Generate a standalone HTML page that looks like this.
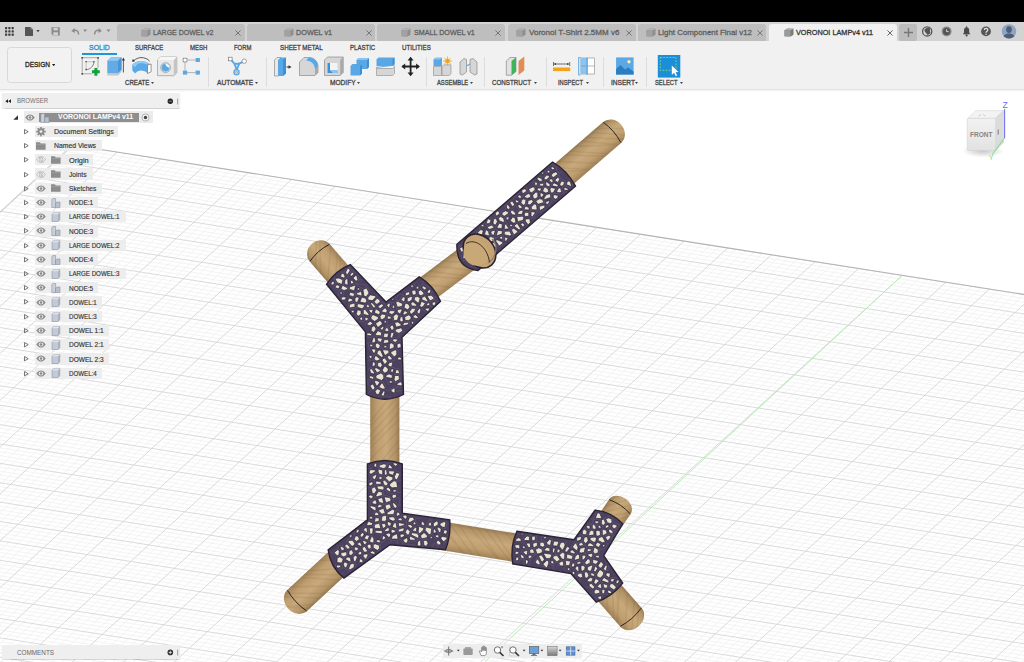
<!DOCTYPE html><html><head><meta charset="utf-8"><style>html,body{margin:0;padding:0;width:1024px;height:662px;overflow:hidden;background:#fff;font-family:"Liberation Sans", sans-serif;}.a{position:absolute}</style></head><body><svg class="a" style="left:0;top:0" width="1024" height="662" viewBox="0 0 1024 662"><defs><clipPath id="gclip"><path d="M72.1 145 L1024 294.4 L1024 662 L0 662 L0 212 Z"/></clipPath><linearGradient id="g_d_top" gradientUnits="userSpaceOnUse" x1="575.07" y1="182.70" x2="557.03" y2="161.80"><stop offset="0" stop-color="#a08158"/><stop offset="0.25" stop-color="#bf9f70"/><stop offset="0.55" stop-color="#c8a97b"/><stop offset="0.85" stop-color="#b49569"/><stop offset="1" stop-color="#977a52"/></linearGradient><linearGradient id="g_d_low" gradientUnits="userSpaceOnUse" x1="456.51" y1="283.37" x2="440.49" y2="262.13"><stop offset="0" stop-color="#a08158"/><stop offset="0.25" stop-color="#bf9f70"/><stop offset="0.55" stop-color="#c8a97b"/><stop offset="0.85" stop-color="#b49569"/><stop offset="1" stop-color="#977a52"/></linearGradient><linearGradient id="g_d_ul" gradientUnits="userSpaceOnUse" x1="342.36" y1="258.72" x2="322.34" y2="276.08"><stop offset="0" stop-color="#a08158"/><stop offset="0.25" stop-color="#bf9f70"/><stop offset="0.55" stop-color="#c8a97b"/><stop offset="0.85" stop-color="#b49569"/><stop offset="1" stop-color="#977a52"/></linearGradient><linearGradient id="g_d_vert" gradientUnits="userSpaceOnUse" x1="370.20" y1="430.00" x2="399.40" y2="430.00"><stop offset="0" stop-color="#a08158"/><stop offset="0.25" stop-color="#bf9f70"/><stop offset="0.55" stop-color="#c8a97b"/><stop offset="0.85" stop-color="#b49569"/><stop offset="1" stop-color="#977a52"/></linearGradient><linearGradient id="g_d_left" gradientUnits="userSpaceOnUse" x1="311.20" y1="567.75" x2="330.80" y2="588.85"><stop offset="0" stop-color="#a08158"/><stop offset="0.25" stop-color="#bf9f70"/><stop offset="0.55" stop-color="#c8a97b"/><stop offset="0.85" stop-color="#b49569"/><stop offset="1" stop-color="#977a52"/></linearGradient><linearGradient id="g_d_mid" gradientUnits="userSpaceOnUse" x1="477.71" y1="556.11" x2="482.29" y2="527.89"><stop offset="0" stop-color="#a08158"/><stop offset="0.25" stop-color="#bf9f70"/><stop offset="0.55" stop-color="#c8a97b"/><stop offset="0.85" stop-color="#b49569"/><stop offset="1" stop-color="#977a52"/></linearGradient><linearGradient id="g_d_ur" gradientUnits="userSpaceOnUse" x1="623.71" y1="524.20" x2="602.19" y2="509.60"><stop offset="0" stop-color="#a08158"/><stop offset="0.25" stop-color="#bf9f70"/><stop offset="0.55" stop-color="#c8a97b"/><stop offset="0.85" stop-color="#b49569"/><stop offset="1" stop-color="#977a52"/></linearGradient><linearGradient id="g_d_lr" gradientUnits="userSpaceOnUse" x1="604.71" y1="608.95" x2="626.09" y2="590.25"><stop offset="0" stop-color="#a08158"/><stop offset="0.25" stop-color="#bf9f70"/><stop offset="0.55" stop-color="#c8a97b"/><stop offset="0.85" stop-color="#b49569"/><stop offset="1" stop-color="#977a52"/></linearGradient><clipPath id="c_tube"><path d="M552.5 162.0 Q567 170 575.5 186.2 L499.4 251.5 L478.0 270.5 Q456 268 456.9 244.3 Z"/></clipPath><clipPath id="c_y"><path d="M326.5 284.3 Q336 270 350.3 264.6 L386.0 302.0 L419.3 276.9 Q433 285 440.5 301.3 L402.0 337.2 L403.5 394.5 Q385 404 366.4 394.5 L365.4 331.9 Z"/></clipPath><clipPath id="c_l"><path d="M367.4 464.0 Q385 457 402.3 464.0 L402.3 513.2 L449.7 519.8 Q451 536 445.5 549.7 L389.9 544.7 L344.0 578.1 Q330 567 328.2 549.9 L367.4 519.8 Z"/></clipPath><clipPath id="c_r"><path d="M516.9 531.3 L574.0 539.7 L595.2 510.1 Q612 512 622.7 523.8 L603.7 555.6 L622.7 583.1 Q612 597 596.3 602.1 L570.9 573.6 L512.7 564.0 Q510 546 516.9 531.3 Z"/></clipPath><radialGradient id="cg" cx="0.5" cy="0.5" r="0.7"><stop offset="0" stop-color="#4a4258"/><stop offset="1" stop-color="#352e40"/></radialGradient><clipPath id="cl_d_top"><path d="M529.02 222.45L621.12 142.95A12.00 13.80 -40.80 0 0 603.08 122.05L510.98 201.55Z"/></clipPath><clipPath id="cl_d_low"><path d="M423.01 308.62L490.01 258.12L473.99 236.88L406.99 287.38Z"/></clipPath><clipPath id="cl_d_ul"><path d="M355.01 273.32L329.71 244.12A12.00 13.25 -130.91 0 0 309.69 261.48L334.99 290.68Z"/></clipPath><clipPath id="cl_d_vert"><path d="M370.20 392.00L370.20 468.00L399.40 468.00L399.40 392.00Z"/></clipPath><clipPath id="cl_d_left"><path d="M335.20 545.45L287.20 590.05A12.00 14.40 137.10 0 0 306.80 611.15L354.80 566.55Z"/></clipPath><clipPath id="cl_d_mid"><path d="M437.71 549.61L517.71 562.61L522.29 534.39L442.29 521.39Z"/></clipPath><clipPath id="cl_d_ur"><path d="M616.86 534.30L630.56 514.10A10.00 13.00 -55.85 0 0 609.04 499.50L595.34 519.70Z"/></clipPath><clipPath id="cl_d_lr"><path d="M589.31 591.35L620.11 626.55A12.00 14.20 48.81 0 0 641.49 607.85L610.69 572.65Z"/></clipPath></defs><rect x="0" y="0" width="1024" height="662" fill="#ffffff"/><g clip-path="url(#gclip)"><path d="M82.40 146.41L-476.49 659.76M91.12 147.78L-467.78 661.13M99.84 149.15L-459.07 662.50M108.57 150.52L-450.35 663.87M126.01 153.27L-432.93 666.61M134.74 154.64L-424.21 667.98M143.46 156.01L-415.50 669.35M152.18 157.39L-406.79 670.72M169.63 160.13L-389.36 673.46M178.35 161.50L-380.65 674.83M187.07 162.87L-371.93 676.20M195.79 164.25L-363.22 677.57M213.24 166.99L-345.79 680.31M221.96 168.36L-337.08 681.68M230.68 169.73L-328.37 683.05M239.41 171.11L-319.66 684.42M256.85 173.85L-302.23 687.16M265.57 175.22L-293.52 688.53M274.30 176.60L-284.80 689.90M283.02 177.97L-276.09 691.26M300.46 180.71L-258.67 694.00M309.19 182.08L-249.95 695.37M317.91 183.46L-241.24 696.74M326.63 184.83L-232.53 698.11M344.08 187.57L-215.10 700.85M352.80 188.94L-206.39 702.22M361.52 190.32L-197.68 703.59M370.24 191.69L-188.97 704.96M387.69 194.43L-171.54 707.70M396.41 195.80L-162.83 709.07M405.13 197.18L-154.11 710.44M413.85 198.55L-145.40 711.81M431.30 201.29L-127.98 714.55M440.02 202.66L-119.27 715.92M448.74 204.04L-110.55 717.29M457.46 205.41L-101.84 718.66M474.91 208.15L-84.42 721.40M483.63 209.53L-75.70 722.77M492.35 210.90L-66.99 724.14M501.07 212.27L-58.28 725.51M518.52 215.01L-40.85 728.25M527.24 216.39L-32.14 729.62M535.96 217.76L-23.43 730.99M544.68 219.13L-14.72 732.36M562.12 221.87L2.71 735.10M570.85 223.25L11.42 736.47M579.57 224.62L20.13 737.84M588.29 225.99L28.84 739.21M605.73 228.73L46.27 741.95M614.45 230.11L54.98 743.32M623.18 231.48L63.69 744.69M631.90 232.85L72.40 746.06M649.34 235.59L89.83 748.79M658.06 236.96L98.54 750.16M666.78 238.34L107.25 751.53M675.50 239.71L115.96 752.90M692.95 242.45L133.38 755.64M701.67 243.82L142.10 757.01M710.39 245.20L150.81 758.38M719.11 246.57L159.52 759.75M736.55 249.31L176.94 762.49M745.28 250.68L185.65 763.86M754.00 252.06L194.37 765.23M762.72 253.43L203.08 766.60M780.16 256.17L220.50 769.34M788.88 257.54L229.21 770.71M797.60 258.92L237.92 772.08M806.32 260.29L246.64 773.45M823.77 263.03L264.06 776.19M832.49 264.40L272.77 777.56M841.21 265.78L281.48 778.93M849.93 267.15L290.19 780.30M867.37 269.89L307.62 783.04M876.09 271.26L316.33 784.41M884.81 272.63L325.04 785.77M893.53 274.01L333.75 787.14M910.97 276.75L351.17 789.88M919.70 278.12L359.88 791.25M928.42 279.49L368.59 792.62M937.14 280.87L377.30 793.99M954.58 283.61L394.73 796.73M963.30 284.98L403.44 798.10M972.02 286.35L412.15 799.47M980.74 287.72L420.86 800.84M998.18 290.47L438.28 803.58M1006.90 291.84L446.99 804.95M1015.62 293.21L455.70 806.32M1024.34 294.58L464.41 807.69M1041.78 297.33L481.84 810.43M1050.50 298.70L490.55 811.80M1059.23 300.07L499.26 813.17M1067.95 301.44L507.97 814.54M1085.39 304.19L525.39 817.27M1094.11 305.56L534.10 818.64M1102.83 306.93L542.81 820.01M1111.55 308.30L551.52 821.38M1128.99 311.05L568.94 824.12M1137.71 312.42L577.65 825.49M1146.43 313.79L586.37 826.86M1155.15 315.16L595.08 828.23M1172.59 317.90L612.50 830.97M1181.31 319.28L621.21 832.34M1190.03 320.65L629.92 833.71M1198.75 322.02L638.63 835.08M1216.19 324.76L656.05 837.82M1224.91 326.13L664.76 839.19M1233.63 327.51L673.47 840.56M1242.35 328.88L682.18 841.92M1259.79 331.62L699.60 844.66M1268.51 332.99L708.31 846.03M1277.23 334.36L717.02 847.40M1285.95 335.74L725.73 848.77M1303.39 338.48L743.15 851.51M1312.11 339.85L751.86 852.88M1320.83 341.22L760.57 854.25M1329.55 342.60L769.28 855.62M1346.99 345.34L786.70 858.36M1355.71 346.71L795.41 859.73M1364.43 348.08L804.12 861.10M1373.15 349.45L812.83 862.47M1390.59 352.20L830.25 865.20M1399.30 353.57L838.96 866.57M1408.02 354.94L847.67 867.94M1416.74 356.31L856.38 869.31M1434.18 359.06L873.80 872.05M1442.90 360.43L882.51 873.42M1451.62 361.80L891.22 874.79M1460.34 363.17L899.93 876.16M1477.78 365.91L917.35 878.90M1486.50 367.28L926.06 880.27M1495.22 368.66L934.77 881.64M1503.94 370.03L943.48 883.01M1521.38 372.77L960.90 885.75M1530.10 374.14L969.61 887.11M1538.82 375.51L978.32 888.48M1547.53 376.89L987.03 889.85M1564.97 379.63L1004.45 892.59M1573.69 381.00L1013.16 893.96M1582.41 382.37L1021.87 895.33M1591.13 383.74L1030.58 896.70M70.07 148.35L1596.23 388.43M66.46 151.67L1592.61 391.74M62.85 154.98L1588.99 395.06M59.24 158.30L1585.37 398.37M52.02 164.93L1578.12 404.99M48.41 168.25L1574.50 408.31M44.80 171.56L1570.88 411.62M41.19 174.88L1567.26 414.93M33.97 181.51L1560.02 421.56M30.36 184.82L1556.40 424.87M26.75 188.14L1552.78 428.18M23.14 191.45L1549.16 431.50M15.92 198.08L1541.92 438.12M12.31 201.40L1538.30 441.43M8.70 204.71L1534.68 444.75M5.10 208.03L1531.06 448.06M-2.12 214.66L1523.82 454.68M-5.73 217.97L1520.20 458.00M-9.34 221.29L1516.58 461.31M-12.95 224.60L1512.97 464.62M-20.17 231.23L1505.73 471.24M-23.77 234.55L1502.11 474.56M-27.38 237.86L1498.49 477.87M-30.99 241.18L1494.87 481.18M-38.21 247.80L1487.63 487.80M-41.82 251.12L1484.01 491.12M-45.42 254.43L1480.39 494.43M-49.03 257.75L1476.77 497.74M-56.25 264.37L1469.54 504.36M-59.86 267.69L1465.92 507.67M-63.46 271.00L1462.30 510.98M-67.07 274.32L1458.68 514.30M-74.29 280.94L1451.44 520.92M-77.89 284.26L1447.82 524.23M-81.50 287.57L1444.20 527.54M-85.11 290.89L1440.59 530.85M-92.32 297.51L1433.35 537.47M-95.93 300.83L1429.73 540.78M-99.54 304.14L1426.11 544.10M-103.15 307.45L1422.49 547.41M-110.36 314.08L1415.26 554.03M-113.97 317.39L1411.64 557.34M-117.58 320.71L1408.02 560.65M-121.18 324.02L1404.41 563.96M-128.40 330.65L1397.17 570.58M-132.00 333.96L1393.55 573.89M-135.61 337.27L1389.93 577.20M-139.22 340.58L1386.32 580.51M-146.43 347.21L1379.08 587.13M-150.04 350.52L1375.46 590.44M-153.64 353.84L1371.85 593.75M-157.25 357.15L1368.23 597.06M-164.46 363.77L1361.00 603.68M-168.07 367.09L1357.38 606.99M-171.67 370.40L1353.76 610.30M-175.28 373.71L1350.14 613.61M-182.49 380.34L1342.91 620.23M-186.10 383.65L1339.29 623.54M-189.70 386.96L1335.68 626.85M-193.31 390.27L1332.06 630.16M-200.52 396.90L1324.83 636.78M-204.13 400.21L1321.21 640.09M-207.73 403.52L1317.59 643.40M-211.34 406.83L1313.98 646.71M-218.55 413.46L1306.74 653.33M-222.16 416.77L1303.13 656.64M-225.76 420.08L1299.51 659.95M-229.37 423.39L1295.89 663.25M-236.58 430.01L1288.66 669.87M-240.18 433.33L1285.05 673.18M-243.79 436.64L1281.43 676.49M-247.39 439.95L1277.81 679.80M-254.60 446.57L1270.58 686.42M-258.21 449.88L1266.97 689.72M-261.81 453.19L1263.35 693.03M-265.42 456.50L1259.74 696.34M-272.63 463.13L1252.50 702.96M-276.23 466.44L1248.89 706.27M-279.84 469.75L1245.27 709.58M-283.44 473.06L1241.66 712.88M-290.65 479.68L1234.43 719.50M-294.25 482.99L1230.81 722.81M-297.86 486.30L1227.20 726.12M-301.46 489.61L1223.58 729.42M-308.67 496.23L1216.35 736.04M-312.27 499.54L1212.74 739.35M-315.88 502.85L1209.12 742.66M-319.48 506.17L1205.51 745.96M-326.69 512.79L1198.28 752.58M-330.29 516.10L1194.66 755.89M-333.90 519.41L1191.05 759.20M-337.50 522.72L1187.43 762.50M-344.71 529.34L1180.21 769.12M-348.31 532.65L1176.59 772.43M-351.92 535.96L1172.98 775.73M-355.52 539.27L1169.36 779.04M-362.73 545.89L1162.13 785.65M-366.33 549.20L1158.52 788.96M-369.93 552.51L1154.91 792.27M-373.53 555.81L1151.29 795.58M-380.74 562.43L1144.06 802.19M-384.34 565.74L1140.45 805.50M-387.95 569.05L1136.84 808.80M-391.55 572.36L1133.22 812.11M-398.76 578.98L1126.00 818.72M-402.36 582.29L1122.38 822.03M-405.96 585.60L1118.77 825.34M-409.56 588.91L1115.16 828.64M-416.77 595.53L1107.93 835.26M-420.37 598.84L1104.32 838.56M-423.97 602.14L1100.70 841.87M-427.58 605.45L1097.09 845.18M-434.78 612.07L1089.86 851.79M-438.38 615.38L1086.25 855.09M-441.98 618.69L1082.64 858.40M-445.59 622.00L1079.02 861.71M-452.79 628.61L1071.80 868.32M-456.39 631.92L1068.19 871.62M-459.99 635.23L1064.57 874.93M-463.60 638.54L1060.96 878.24M-470.80 645.16L1053.74 884.85M-474.40 648.46L1050.12 888.15M-478.00 651.77L1046.51 891.46M-481.60 655.08L1042.90 894.76" stroke="#f0f0f0" stroke-width="0.8" fill="none"/><path d="M73.67 145.04L-485.20 658.39M117.29 151.90L-441.64 665.24M160.90 158.76L-398.07 672.09M204.52 165.62L-354.51 678.94M248.13 172.48L-310.94 685.79M291.74 179.34L-267.38 692.63M335.35 186.20L-223.82 699.48M378.96 193.06L-180.25 706.33M422.57 199.92L-136.69 713.18M466.18 206.78L-93.13 720.03M509.79 213.64L-49.57 726.88M553.40 220.50L-6.01 733.73M597.01 227.36L37.55 740.58M640.62 234.22L81.11 747.42M684.23 241.08L124.67 754.27M727.83 247.94L168.23 761.12M771.44 254.80L211.79 767.97M815.04 261.66L255.35 774.82M858.65 268.52L298.90 781.67M902.25 275.38L342.46 788.51M945.86 282.24L386.02 795.36M989.46 289.10L429.57 802.21M1033.06 295.96L473.13 809.06M1076.67 302.81L516.68 815.90M1120.27 309.67L560.23 822.75M1163.87 316.53L603.79 829.60M1207.47 323.39L647.34 836.45M1251.07 330.25L690.89 843.29M1294.67 337.11L734.44 850.14M1338.27 343.97L777.99 856.99M1381.87 350.83L821.54 863.84M1425.46 357.68L865.09 870.68M1469.06 364.54L908.64 877.53M1512.66 371.40L952.19 884.38M1556.25 378.26L995.74 891.22M1599.85 385.12L1039.29 898.07M73.67 145.04L1599.85 385.12M55.63 161.61L1581.75 401.68M37.58 178.19L1563.64 418.25M19.53 194.77L1545.54 434.81M1.49 211.34L1527.44 451.37M-16.56 227.92L1509.35 467.93M-34.60 244.49L1491.25 484.49M-52.64 261.06L1473.15 501.05M-70.68 277.63L1455.06 517.61M-88.72 294.20L1436.97 534.16M-106.75 310.77L1418.88 550.72M-124.79 327.33L1400.79 567.27M-142.82 343.90L1382.70 583.82M-160.86 360.46L1364.61 600.37M-178.89 377.02L1346.53 616.92M-196.92 393.58L1328.44 633.47M-214.94 410.14L1310.36 650.02M-232.97 426.70L1292.28 666.56M-251.00 443.26L1274.20 683.11M-269.02 459.82L1256.12 699.65M-287.04 476.37L1238.04 716.19M-305.07 492.92L1219.97 732.73M-323.09 509.48L1201.89 749.27M-341.10 526.03L1183.82 765.81M-359.12 542.58L1165.75 782.35M-377.14 559.12L1147.68 798.88M-395.15 575.67L1129.61 815.42M-413.17 592.22L1111.54 831.95M-431.18 608.76L1093.48 848.48M-449.19 625.31L1075.41 865.01M-467.20 641.85L1057.35 881.54M-485.20 658.39L1039.29 898.07" stroke="#d6d6d6" stroke-width="0.9" fill="none"/><path d="M901.6 275.9 L484.6 662" stroke="#b8ecb8" stroke-width="1" fill="none"/></g><path d="M72.1 145 L1024 294.4" stroke="#b4b4b4" stroke-width="1.1" fill="none"/><path d="M72.1 145 L0 212" stroke="#c8c8c8" stroke-width="1" fill="none"/><path d="M529.02 222.45L621.12 142.95A12.00 13.80 -40.80 0 0 603.08 122.05L510.98 201.55Z" fill="url(#g_d_top)"/><g clip-path="url(#cl_d_top)"><path d="M501.6 206.0L553.0 208.8M507.0 201.3L555.5 203.8M510.9 198.0L561.2 199.8M519.0 191.0L563.9 195.3M525.4 185.5L576.7 190.4M532.7 179.1L584.1 183.1M540.9 172.1L590.7 170.3M546.4 167.3L598.1 169.8M553.4 161.3L606.3 163.8M561.4 154.4L609.0 156.4M565.4 150.9L615.9 154.2M570.6 146.4L623.5 144.5M577.2 140.8L627.1 145.5M581.2 137.3L631.1 139.6M587.2 132.1L638.7 135.9M591.5 128.4L644.5 128.4M599.5 121.5L650.1 122.1M605.1 116.7L657.2 115.8" stroke="#7a5d38" stroke-opacity="0.14" stroke-width="1.5" fill="none"/></g><path d="M603.35 122.37Q614.52 130.41 620.85 142.63" fill="none" stroke="#2e251c" stroke-width="1"/><path d="M423.01 308.62L490.01 258.12L473.99 236.88L406.99 287.38Z" fill="url(#g_d_low)"/><g clip-path="url(#cl_d_low)"><path d="M397.4 291.3L441.1 297.9M406.0 284.8L448.8 286.4M410.2 281.6L453.5 288.3M418.5 275.4L467.7 279.0M425.1 270.4L474.0 277.0M431.7 265.4L479.6 271.4M437.6 261.0L482.9 263.3M446.2 254.5L492.5 260.0M452.2 250.0L497.7 251.9M457.1 246.2L506.8 251.0M464.1 241.0L513.8 247.4M469.4 237.0L515.3 243.6M474.6 233.1L525.1 237.4" stroke="#7a5d38" stroke-opacity="0.14" stroke-width="1.5" fill="none"/></g><path d="M355.01 273.32L329.71 244.12A12.00 13.25 -130.91 0 0 309.69 261.48L334.99 290.68Z" fill="url(#g_d_ul)"/><g clip-path="url(#cl_d_ul)"><path d="M339.5 300.0L340.3 250.3M334.0 293.6L338.3 244.3M327.1 285.6L331.5 239.6M320.8 278.3L319.6 231.4M315.4 272.1L316.6 226.4M308.2 263.8L308.1 219.1M303.5 258.4L306.3 209.0" stroke="#7a5d38" stroke-opacity="0.14" stroke-width="1.5" fill="none"/></g><path d="M309.99 261.22Q317.60 250.38 329.41 244.38" fill="none" stroke="#2e251c" stroke-width="1"/><path d="M370.20 392.00L370.20 468.00L399.40 468.00L399.40 392.00Z" fill="url(#g_d_vert)"/><g clip-path="url(#cl_d_vert)"><path d="M402.3 382.0L367.3 425.1M402.3 392.7L367.3 429.3M402.3 399.4L367.3 438.3M402.3 408.7L367.3 445.5M402.3 416.3L367.3 450.6M402.3 427.2L367.3 462.0M402.3 435.9L367.3 478.2M402.3 445.1L367.3 480.0M402.3 455.5L367.3 496.6M402.3 462.9L367.3 498.0M402.3 469.1L367.3 507.5M402.3 474.5L367.3 514.9" stroke="#7a5d38" stroke-opacity="0.14" stroke-width="1.5" fill="none"/></g><path d="M335.20 545.45L287.20 590.05A12.00 14.40 137.10 0 0 306.80 611.15L354.80 566.55Z" fill="url(#g_d_left)"/><g clip-path="url(#cl_d_left)"><path d="M364.1 561.9L314.8 560.1M358.2 567.3L305.9 571.1M350.2 574.7L299.2 574.4M343.9 580.6L296.7 577.0M338.0 586.1L284.2 587.0M330.0 593.5L276.9 593.3M324.8 598.4L277.3 596.4M318.4 604.3L264.9 608.0M314.2 608.2L265.7 606.8M306.3 615.6L254.0 616.0M301.7 619.8L251.0 620.2" stroke="#7a5d38" stroke-opacity="0.14" stroke-width="1.5" fill="none"/></g><path d="M306.51 610.83Q294.66 602.78 287.49 590.37" fill="none" stroke="#2e251c" stroke-width="1"/><path d="M437.71 549.61L517.71 562.61L522.29 534.39L442.29 521.39Z" fill="url(#g_d_mid)"/><g clip-path="url(#cl_d_mid)"><path d="M432.9 517.0L466.5 556.1M439.5 518.0L465.7 558.4M446.6 519.2L475.9 559.8M456.3 520.8L483.0 560.3M465.4 522.2L500.1 561.2M475.0 523.8L501.8 563.4M482.1 525.0L512.7 565.0M490.8 526.4L517.8 566.5M501.6 528.1L536.9 568.2M510.3 529.5L541.6 568.8M519.7 531.1L553.0 571.1M527.1 532.3L557.2 572.8" stroke="#7a5d38" stroke-opacity="0.14" stroke-width="1.5" fill="none"/></g><path d="M616.86 534.30L630.56 514.10A10.00 13.00 -55.85 0 0 609.04 499.50L595.34 519.70Z" fill="url(#g_d_ur)"/><g clip-path="url(#cl_d_ur)"><path d="M587.6 526.5L631.1 516.3M592.7 518.9L638.7 510.9M595.7 514.6L638.0 503.2M600.2 507.8L646.1 494.3M605.2 500.6L648.2 486.0M611.2 491.7L657.3 478.7" stroke="#7a5d38" stroke-opacity="0.14" stroke-width="1.5" fill="none"/></g><path d="M609.36 499.72Q621.60 504.15 630.24 513.88" fill="none" stroke="#2e251c" stroke-width="1"/><path d="M589.31 591.35L620.11 626.55A12.00 14.20 48.81 0 0 641.49 607.85L610.69 572.65Z" fill="url(#g_d_lr)"/><g clip-path="url(#cl_d_lr)"><path d="M606.2 563.3L607.8 617.2M612.1 570.0L613.7 622.4M616.8 575.3L618.1 623.6M621.0 580.1L616.0 627.7M627.7 587.8L624.6 641.9M634.9 596.1L630.2 647.0M638.5 600.1L636.4 649.4M644.1 606.5L641.0 658.9" stroke="#7a5d38" stroke-opacity="0.14" stroke-width="1.5" fill="none"/></g><path d="M641.17 608.13Q632.91 619.61 620.43 626.27" fill="none" stroke="#2e251c" stroke-width="1"/><path d="M552.5 162.0 Q567 170 575.5 186.2 L499.4 251.5 L478.0 270.5 Q456 268 456.9 244.3 Z" fill="#4c4260" stroke="#2b2433" stroke-width="1.4"/><path d="M516.9 222.3L517.8 222.6M517.8 222.6L523.6 221.1M523.0 215.2L516.7 215.7M523.0 215.2L524.9 217.8M515.8 216.8L516.7 215.7M524.1 211.1L529.9 211.4M529.9 217.3L529.9 211.4M538.2 211.0L537.7 205.3M530.2 206.6L530.7 210.6M530.2 206.6L535.0 201.9M535.0 201.9L537.7 205.3M537.8 211.1L530.7 210.6M527.1 225.7L523.6 221.1M540.4 212.2L538.2 211.0M540.8 213.4L540.7 214.1M537.8 211.1L533.5 217.2M535.9 218.2L533.5 217.2M529.9 211.4L530.7 210.6M533.5 217.2L531.0 218.1M523.0 209.1L523.4 206.4M523.4 206.4L520.0 203.3M519.1 209.8L515.8 205.3M524.1 211.1L523.0 209.1M516.8 212.5L519.1 209.8M526.2 204.8L523.4 206.4M512.4 208.2L516.8 212.5M512.4 208.2L515.8 205.3M508.8 201.6L512.7 199.7M512.2 208.2L512.4 208.2M488.8 258.9L488.5 258.9M488.5 258.9L487.8 257.2M494.0 254.2L492.8 253.1M459.2 253.6L459.2 253.6M461.4 259.5L462.0 253.7M459.2 253.6L459.2 253.6M546.5 209.1L545.9 208.7M545.9 208.7L540.4 212.2M540.8 213.4L541.2 213.6M556.9 166.5L556.4 167.2M556.4 167.2L552.5 165.0M503.7 235.6L503.5 241.1M503.2 234.6L495.3 237.7M503.2 234.6L503.5 230.4M496.9 229.2L494.7 236.8M495.3 237.7L494.7 236.8M503.5 230.4L502.9 229.8M495.3 238.0L494.6 241.2M489.2 243.7L487.7 241.8M487.7 241.8L488.3 236.8M494.7 236.8L490.6 235.6M488.3 236.8L490.6 235.6M496.9 229.2L496.2 228.5M490.6 235.6L489.3 230.6M496.2 228.5L489.3 230.6M468.3 236.5L470.6 235.9M494.4 248.7L492.5 252.0M492.5 252.0L488.7 250.8M488.7 250.8L488.2 246.2M494.6 241.2L498.4 246.9M484.4 254.3L488.7 250.8M492.8 253.1L492.5 252.0M458.4 246.9L463.4 244.6M463.3 241.7L463.4 241.9M463.4 244.6L463.4 241.9M462.5 261.1L469.5 257.2M464.6 252.7L465.6 247.6M484.4 254.3L484.2 254.3M484.2 254.3L479.7 258.5M483.7 263.4L479.7 258.5M476.1 268.7L474.2 264.3M481.0 265.8L474.6 263.3M474.2 264.3L474.6 263.3M479.7 258.5L475.9 258.8M521.4 228.4L519.7 231.4M519.7 231.4L519.7 231.9M519.7 231.9L519.8 232.0M505.7 244.1L504.8 243.2M504.4 243.2L499.5 247.3M499.5 247.3L500.1 248.9M498.4 246.9L499.5 247.3M556.4 167.2L556.5 170.2M559.2 173.2L556.5 170.2M559.2 173.2L562.8 171.7M562.8 171.7L562.8 171.5M566.0 181.3L560.9 179.5M560.9 179.5L559.1 174.9M568.7 178.4L568.7 179.3M559.2 173.2L559.2 174.4M558.5 184.2L560.9 179.5M566.0 181.3L564.9 185.3M564.9 185.3L561.8 187.6M537.7 205.3L544.3 203.4M513.0 199.1L514.9 197.7M514.9 197.7L515.9 195.5M516.4 195.0L520.1 192.7M528.6 192.0L522.8 195.8M527.0 199.6L523.3 197.8M523.3 197.8L522.8 195.8M534.9 200.6L531.8 198.2M534.9 200.6L539.1 197.7M539.1 197.7L539.0 192.5M536.1 190.3L531.5 194.3M526.2 204.8L527.0 199.6M506.4 203.7L504.9 205.4M504.9 205.4L504.5 205.3M505.8 221.6L510.8 229.3M514.0 224.6L513.3 226.7M513.3 226.7L510.8 229.3M516.9 222.3L514.0 224.6M515.8 216.8L511.9 216.0M510.3 230.1L503.5 230.4M510.3 230.1L510.8 229.3M503.7 223.6L505.7 221.6M505.7 221.6L505.8 221.6M495.7 227.1L491.8 223.8M495.7 227.1L498.7 221.8M497.0 217.7L494.6 217.5M491.8 223.8L486.7 225.9M489.9 217.8L492.6 218.6M484.8 222.3L484.7 222.5M486.7 225.9L484.7 222.5M484.2 254.3L482.9 252.1M472.0 265.5L470.8 267.3M474.2 264.3L472.0 265.5M469.8 257.4L469.5 257.2M512.9 235.4L514.1 236.0M510.3 230.1L512.9 235.4M568.7 179.3L570.3 180.4M570.9 188.0L564.9 185.3M572.9 186.3L572.0 183.2M566.3 192.1L562.9 192.1M563.4 194.6L562.6 192.7M562.6 192.7L562.9 192.1M561.8 187.6L562.9 192.1M572.9 186.3L573.0 186.4M559.4 186.4L557.2 187.7M557.2 187.7L554.3 193.2M554.3 193.2L560.2 194.0M542.5 198.4L544.4 200.7M551.8 198.1L551.4 194.3M549.6 192.6L551.4 194.3M539.0 192.5L541.4 191.8M544.3 203.4L544.4 200.7M527.4 188.4L525.4 187.3M527.4 188.4L528.6 192.0M504.3 217.5L509.7 213.9M504.3 217.5L500.8 215.2M500.8 215.2L501.2 212.0M501.2 212.0L505.5 209.6M505.7 221.6L504.3 217.5M497.0 217.7L500.8 215.2M499.1 210.0L501.2 212.0M493.9 214.4L494.6 217.5M504.9 205.4L505.5 209.6M512.2 208.2L509.0 211.0M479.4 226.9L480.1 228.5M480.1 228.5L476.6 231.8M475.2 230.5L476.6 231.8M470.6 235.9L470.9 236.1M476.6 233.5L476.6 231.8M465.6 247.6L468.5 247.1M468.5 247.1L473.4 249.2M463.4 241.9L471.6 241.2M468.5 247.1L471.6 241.2M473.4 249.2L474.7 249.0M470.9 236.1L472.2 240.9M471.6 241.2L472.2 240.9M555.4 201.0L552.7 199.5M555.4 201.0L555.5 201.4M552.7 199.5L549.1 205.1M550.2 205.9L549.1 205.1M554.3 193.2L551.4 194.3M556.5 200.5L555.4 201.0M551.8 198.1L552.7 199.5M546.4 206.1L549.1 205.1M552.5 165.0L550.5 165.7M552.4 171.6L547.9 167.9M476.7 245.5L475.7 242.4M476.7 245.5L481.6 246.3M481.6 246.3L483.5 241.3M483.5 241.3L480.8 237.2M474.7 249.0L476.7 245.5M476.6 233.5L480.3 237.2M483.3 235.4L480.8 237.2M541.4 191.8L543.5 186.8M549.6 192.6L548.9 188.5M544.9 186.0L548.9 188.5M550.9 186.5L548.9 188.5M533.1 183.0L534.0 179.9M539.4 182.9L537.7 186.9M533.4 185.5L535.9 187.8M543.5 186.8L537.7 186.9M544.2 182.0L544.9 186.0M538.7 175.8L542.6 177.5M544.2 182.0L544.4 181.2M545.3 170.2L546.5 173.9M542.6 177.5L546.5 173.9M550.8 177.5L547.2 180.5M550.8 177.5L553.8 179.1M553.8 179.1L554.1 181.8M554.1 181.8L551.9 184.0M559.1 174.9L553.8 179.1M550.9 186.5L551.9 184.0" stroke="#5d5170" stroke-width="0.9" fill="none"/><path d="M551.3 167.2L551.1 167.5L551.0 167.9L551.1 168.4L551.4 168.7L552.3 169.4L552.6 169.6L552.9 169.7L553.2 169.6L553.7 169.4L554.0 169.3L554.3 169.0L554.4 168.6L554.4 168.2L554.2 167.9L553.9 167.6L552.7 167.0L552.3 166.8L551.9 166.9L551.7 167.0ZM541.5 173.3L541.7 173.7L542.0 174.0L542.4 174.1L542.8 174.1L543.1 173.8L543.4 173.6L543.6 173.3L543.7 173.0L543.6 172.6L543.5 172.2L543.3 171.9L543.1 171.7L541.5 173.1ZM548.5 170.4L548.2 170.3L547.8 170.4L547.5 170.6L547.3 170.9L547.2 171.3L547.3 171.7L547.5 172.2L547.6 172.5L547.9 172.7L548.2 172.8L548.6 172.9L549.0 173.0L549.4 172.8L549.7 172.6L549.7 172.5L549.9 172.2L549.9 171.8L549.8 171.4L549.6 171.1L548.9 170.6ZM553.4 177.3L553.8 177.3L554.2 177.1L557.2 174.6L557.5 174.3L557.6 173.9L557.5 173.5L557.3 173.2L556.5 172.3L556.2 172.1L555.8 172.0L555.5 172.0L553.5 172.7L553.0 173.0L551.7 174.6L551.5 174.9L551.5 175.2L551.5 175.5L551.7 176.2L551.9 176.5L552.2 176.7L553.1 177.2ZM537.3 177.9L537.1 178.2L537.1 178.6L537.2 179.0L537.4 179.3L539.4 181.1L539.8 181.4L540.3 181.4L541.5 181.2L541.8 181.0L542.1 180.8L542.2 180.5L542.3 180.1L542.2 179.7L541.8 178.9L541.6 178.6L541.3 178.4L539.0 177.4L538.6 177.3L538.2 177.4L537.7 177.7ZM546.9 179.4L549.0 177.6L549.2 177.3L549.3 176.9L549.3 176.5L549.1 176.1L548.9 175.7L548.4 175.5L547.4 175.2L547.0 175.1L546.7 175.2L546.4 175.4L544.4 177.3L544.2 177.6L544.1 178.0L544.2 178.4L544.6 179.2L544.8 179.5L545.1 179.7L545.4 179.8L545.8 179.8L546.5 179.6ZM551.4 182.4L551.8 182.4L552.1 182.3L552.4 182.1L552.7 181.8L553.0 181.4L553.0 180.9L552.9 180.3L552.8 179.8L552.4 179.5L551.5 179.0L551.1 178.9L550.7 178.9L550.4 179.1L549.7 179.6L549.5 179.9L549.4 180.2L549.4 180.6L549.5 180.9L549.8 181.2L551.1 182.2ZM555.3 181.0L555.7 181.3L557.1 182.1L557.5 182.2L557.9 182.1L558.2 181.9L558.5 181.6L559.4 179.8L559.5 179.4L559.4 179.0L559.1 178.1L558.9 177.8L558.6 177.6L558.2 177.5L557.8 177.5L557.5 177.7L555.5 179.3L555.3 179.6L555.1 179.9L555.1 180.2L555.2 180.5ZM535.6 185.4L536.0 185.5L536.4 185.4L536.7 185.2L536.9 184.9L537.3 184.0L537.4 183.6L537.3 183.2L537.0 182.8L536.4 182.3L536.1 182.1L535.7 182.0L535.3 182.1L535.0 182.4L534.8 182.8L534.7 183.0L534.7 183.3L534.8 184.4L534.9 184.8L535.1 185.1L535.3 185.2ZM539.6 184.9L539.7 185.3L539.9 185.7L540.2 185.9L540.6 186.0L542.8 185.9L543.2 185.8L543.5 185.6L543.7 185.2L543.7 184.8L543.6 184.1L543.5 183.7L543.2 183.5L542.8 183.3L542.4 183.3L540.6 183.6L540.1 183.8L539.8 184.2L539.7 184.6ZM546.1 182.2L545.8 182.4L545.7 182.8L545.7 183.1L546.0 184.8L546.1 185.2L546.4 185.5L548.0 186.5L548.4 186.6L548.9 186.6L549.3 186.3L549.7 185.9L549.9 185.6L550.0 185.2L550.1 184.8L550.0 184.3L549.7 184.0L547.3 182.2L546.9 182.0L546.4 182.0L546.4 182.0ZM552.5 184.7L552.5 184.7L552.4 185.2L552.6 185.6L552.8 185.9L553.2 186.1L556.7 186.8L557.0 186.8L557.4 186.6L557.6 186.5L557.9 186.3L558.0 185.9L558.1 185.6L558.0 185.3L558.0 185.1L557.8 184.8L557.5 184.6L554.9 183.2L554.5 183.1L554.1 183.1L553.7 183.4L552.7 184.4ZM561.5 186.1L561.9 186.0L562.2 185.9L563.6 184.9L563.8 184.6L563.9 184.3L564.3 182.9L564.4 182.6L564.2 182.2L564.0 181.9L563.7 181.7L562.3 181.2L562.0 181.2L561.6 181.2L561.3 181.4L561.1 181.7L560.0 183.8L559.9 184.3L559.9 184.7L560.2 185.2L560.4 185.5L560.6 185.7L561.1 186.0ZM570.4 182.1L570.2 181.9L569.3 181.3L568.9 181.1L568.5 181.1L568.1 181.3L567.3 181.8L567.1 182.1L567.0 182.4L566.6 183.8L566.6 184.1L566.7 184.5L566.9 184.8L567.2 185.0L569.9 186.1L570.2 186.2L570.6 186.2L570.9 186.0L571.2 185.7L571.3 185.3L571.2 184.9L570.5 182.4ZM522.4 189.7L522.2 189.9L521.9 190.4L521.8 190.9L521.8 191.7L521.8 192.1L522.0 192.4L522.5 193.0L522.8 193.2L523.1 193.3L523.5 193.3L523.8 193.2L526.0 191.7L526.3 191.4L526.5 191.0L526.4 190.5L526.2 189.9L526.0 189.6L525.7 189.3L525.1 189.0L524.7 188.9L524.3 188.9L522.7 189.5ZM534.9 188.3L534.7 188.0L533.7 187.2L533.4 187.0L533.0 186.9L532.6 187.0L529.5 188.5L529.2 188.7L529.0 189.0L528.9 189.4L528.9 189.7L529.4 191.1L529.7 191.5L530.8 192.5L531.1 192.6L531.5 192.7L531.8 192.6L532.1 192.4L534.7 190.2L535.0 189.8L535.0 189.3L535.0 188.7ZM537.7 188.2L537.7 188.2L537.4 188.4L537.2 188.8L537.2 189.2L537.2 189.2L537.3 189.6L537.6 189.9L538.9 190.9L539.3 191.1L539.8 191.1L540.1 191.0L540.5 190.8L540.7 190.4L541.1 189.4L541.2 189.1L541.1 188.7L540.9 188.3L540.6 188.1L540.2 188.1L538.2 188.1ZM545.1 187.2L544.6 187.2L544.3 187.4L544.0 187.8L542.8 190.5L542.7 190.9L542.8 191.3L543.0 191.6L543.3 191.8L545.4 192.8L545.7 192.9L546.1 192.9L547.9 192.3L548.2 192.1L548.4 191.9L548.5 191.5L548.5 191.2L548.2 189.4L548.1 189.1L547.8 188.8L545.5 187.3ZM550.0 188.9L550.0 189.4L550.5 191.8L550.6 192.1L550.8 192.3L551.2 192.7L551.5 192.9L551.9 193.0L552.2 192.9L553.2 192.5L553.5 192.3L553.8 192.1L555.1 189.6L555.2 189.3L555.2 188.9L555.0 188.6L554.7 188.3L554.4 188.2L551.7 187.6L551.3 187.7L550.9 187.9L550.3 188.5ZM560.0 192.7L560.3 192.6L560.9 192.2L561.2 191.9L561.4 191.5L561.4 191.1L560.8 188.9L560.7 188.5L560.3 188.3L560.0 188.1L559.6 188.0L559.3 188.0L559.0 188.1L558.4 188.5L558.0 188.9L556.9 190.9L556.8 191.3L556.8 191.7L557.0 192.0L557.3 192.3L557.6 192.4L559.7 192.7ZM564.3 189.9L564.7 190.2L565.1 190.3L567.0 190.3L567.4 190.3L567.7 190.0L568.0 189.7L568.0 189.3L568.0 189.0L567.8 188.6L567.4 188.4L565.6 187.6L565.3 187.5L565.0 187.6L564.6 187.7L564.4 187.9L564.1 188.2L564.0 188.6L564.0 189.0L564.1 189.6ZM517.9 196.1L517.8 196.5L517.8 196.9L518.0 197.3L518.3 197.5L519.6 198.2L520.0 198.3L520.4 198.2L520.8 198.0L521.1 197.7L521.3 197.4L521.4 197.0L521.3 196.6L521.1 196.3L520.4 195.4L520.1 195.2L519.8 195.1L519.4 195.1L519.1 195.3L518.2 195.8ZM524.8 196.0L524.6 196.4L524.6 196.8L524.8 197.2L525.2 197.4L526.8 198.2L527.1 198.3L527.5 198.3L529.8 197.6L530.2 197.4L530.4 197.0L530.5 196.6L530.4 195.3L530.3 194.9L530.1 194.6L529.1 193.8L528.8 193.7L528.3 193.6L527.9 193.8L525.1 195.7ZM533.0 197.5L533.3 197.8L534.3 198.6L534.7 198.8L535.1 198.8L535.5 198.7L537.4 197.4L537.7 197.2L537.8 196.9L537.9 196.5L537.8 193.6L537.7 193.2L537.4 192.8L536.8 192.4L536.5 192.2L536.2 192.2L535.8 192.2L535.5 192.4L533.2 194.5L532.9 194.9L532.8 195.3L532.9 197.1ZM541.8 197.1L542.1 196.9L542.4 196.7L543.4 195.2L543.6 194.8L543.6 194.4L543.4 194.0L543.0 193.8L541.7 193.1L541.3 193.0L540.9 193.0L540.8 193.1L540.5 193.3L540.2 193.6L540.1 194.1L540.2 196.0L540.3 196.5L540.6 196.8L541.0 197.0L541.4 197.1ZM550.4 194.8L550.2 194.5L549.8 194.1L549.5 193.9L549.2 193.8L548.8 193.9L546.6 194.6L546.3 194.7L546.1 195.0L544.2 197.7L544.0 198.1L544.0 198.5L544.2 198.9L544.3 199.0L544.6 199.3L545.0 199.4L545.4 199.3L550.0 197.7L550.4 197.4L550.6 197.1L550.7 196.6L550.5 195.1ZM554.0 198.4L555.0 199.0L555.5 199.2L555.9 199.1L557.1 198.5L557.4 198.2L557.6 197.9L558.0 196.4L558.0 196.0L557.9 195.6L557.6 195.3L557.2 195.2L554.7 194.8L554.2 194.8L553.8 195.0L553.4 195.2L553.2 195.6L553.2 196.0L553.3 197.3L553.4 197.8L553.6 198.1ZM512.1 206.1L512.5 206.3L512.9 206.2L513.3 206.0L514.1 205.3L514.4 205.1L514.5 204.7L514.5 204.4L514.3 204.0L512.8 201.7L512.6 201.5L512.3 201.3L511.9 201.3L511.6 201.4L510.6 201.9L510.2 202.1L510.0 202.5L510.0 202.9L510.2 203.3L511.8 205.8ZM516.5 200.0L516.1 200.1L515.8 200.2L515.6 200.5L515.4 200.8L515.5 201.2L515.6 201.6L516.1 202.4L516.5 202.7L516.9 202.9L517.3 202.8L518.0 202.6L518.3 202.4L518.6 202.1L518.7 201.7L518.6 201.3L518.4 201.0L518.1 200.7L516.9 200.1ZM523.7 199.0L523.3 199.1L522.9 199.3L521.6 200.6L521.4 200.9L521.3 201.1L521.0 202.5L521.0 202.8L521.1 203.1L521.4 203.4L523.0 204.8L523.3 205.0L523.7 205.1L524.1 205.0L525.0 204.5L525.3 204.2L525.4 203.8L525.9 200.8L525.9 200.4L525.7 200.0L525.4 199.8L524.1 199.1ZM528.4 200.6L528.1 200.9L528.0 201.2L527.7 203.3L527.7 203.7L527.9 204.1L528.3 204.4L529.3 204.8L529.7 204.9L530.0 204.8L530.4 204.6L532.9 202.1L533.2 201.8L533.2 201.4L533.1 201.0L532.8 200.6L531.9 199.9L531.5 199.7L531.0 199.7L528.7 200.4ZM536.3 200.9L536.1 201.3L536.1 201.7L536.3 202.0L537.6 203.7L537.9 204.0L538.3 204.1L538.7 204.1L542.7 202.9L543.0 202.7L543.3 202.4L543.4 202.0L543.4 201.4L543.4 201.1L543.2 200.8L542.2 199.5L542.0 199.3L541.6 199.1L539.8 198.8L539.4 198.8L539.0 198.9L536.6 200.6ZM548.1 204.0L548.4 203.7L549.2 202.3L549.4 202.0L549.4 201.6L549.2 201.2L548.9 200.9L548.5 200.8L548.0 200.9L546.3 201.5L546.0 201.7L545.8 202.0L545.7 202.4L545.7 202.6L545.7 203.0L545.9 203.3L546.4 203.9L546.7 204.2L547.1 204.3L547.5 204.3L547.9 204.1ZM508.3 205.0L508.0 204.8L507.6 204.8L507.2 204.9L507.0 205.1L506.7 205.5L506.4 205.8L506.4 206.3L506.7 208.0L506.8 208.3L507.0 208.6L507.3 208.8L508.2 209.2L508.6 209.3L508.9 209.2L509.2 209.0L509.7 208.6L509.9 208.3L510.0 207.9L510.0 207.6L509.9 207.3L508.5 205.2ZM518.2 205.2L518.0 205.5L517.8 205.8L517.9 206.2L518.0 206.5L519.2 208.1L519.4 208.4L519.8 208.5L520.2 208.5L521.3 208.3L521.7 208.1L522.0 207.8L522.1 207.5L522.1 207.4L522.1 207.0L522.0 206.7L521.8 206.5L520.2 205.0L519.9 204.8L519.5 204.7L519.2 204.8L518.5 205.0ZM524.7 207.3L524.5 207.7L524.4 208.5L524.4 208.8L524.5 209.1L524.6 209.3L525.0 209.7L525.4 209.8L528.1 210.0L528.4 209.9L528.7 209.8L529.0 209.5L529.1 209.2L529.1 208.8L529.0 208.1L528.9 207.7L528.7 207.5L528.4 207.3L526.7 206.5L526.2 206.4L525.8 206.6L525.0 207.0ZM531.7 209.2L532.0 209.5L532.4 209.7L535.9 209.9L536.3 209.9L536.7 209.6L536.9 209.3L537.0 208.8L536.7 206.0L536.5 205.5L535.6 204.3L535.3 204.0L534.9 203.9L534.5 204.0L534.1 204.2L531.6 206.6L531.4 207.0L531.3 207.5L531.5 208.8ZM539.6 209.7L539.9 210.0L540.2 210.2L540.7 210.2L541.0 210.1L544.3 208.1L544.6 207.8L544.7 207.4L544.8 207.0L544.8 206.5L544.6 206.1L544.2 205.6L543.9 205.3L543.5 205.2L543.1 205.2L540.0 206.1L539.7 206.3L539.5 206.5L539.3 206.8L539.3 207.2L539.5 209.3ZM495.9 215.4L496.1 215.6L496.5 215.8L496.9 215.8L497.2 215.6L498.9 214.5L499.2 214.2L499.3 213.8L499.4 213.1L499.4 212.7L499.1 212.3L498.0 211.2L497.7 211.0L497.5 210.9L495.9 212.3L495.5 212.9L495.4 213.3L495.4 213.7L495.7 215.0ZM508.2 213.5L508.4 213.2L508.4 212.8L508.3 212.3L508.1 211.8L507.7 211.6L506.0 210.9L505.6 210.8L505.1 210.9L502.6 212.4L502.2 212.7L502.1 213.2L502.0 214.0L502.0 214.4L502.1 214.8L502.4 215.0L503.8 215.9L504.1 216.0L504.5 216.0L504.9 215.9L508.0 213.8ZM510.9 213.2L511.1 213.4L512.4 214.6L512.9 214.8L514.3 215.1L514.7 215.1L515.1 214.9L515.3 214.6L515.4 214.2L515.5 213.5L515.4 213.1L515.2 212.7L513.0 210.6L512.6 210.4L512.3 210.3L511.9 210.3L511.6 210.5L511.0 211.1L510.7 211.4L510.6 211.7L510.6 212.1L510.8 212.9ZM519.6 210.8L519.3 211.0L518.0 212.6L517.9 212.9L517.8 213.2L517.8 213.6L517.8 214.0L518.1 214.3L518.4 214.5L518.9 214.6L521.5 214.3L521.9 214.2L522.2 214.0L522.4 213.6L523.0 211.6L523.0 211.2L522.9 210.8L522.8 210.8L522.6 210.5L522.2 210.3L521.8 210.3L519.9 210.6ZM528.7 213.0L528.5 212.7L528.2 212.5L527.8 212.4L525.8 212.3L525.3 212.4L524.9 212.6L524.7 213.0L524.3 214.5L524.3 214.9L524.5 215.3L525.0 216.1L525.3 216.4L525.6 216.5L526.0 216.6L527.9 216.3L528.2 216.2L528.5 216.0L528.7 215.7L528.8 215.3L528.8 213.4ZM531.0 216.0L531.3 216.3L531.6 216.5L531.9 216.6L532.3 216.5L532.6 216.4L533.0 216.1L534.9 213.5L535.0 213.1L535.0 212.7L534.8 212.3L534.5 212.0L534.1 211.9L532.0 211.7L531.6 211.8L531.3 212.0L531.0 212.3L531.0 212.7L531.0 215.6ZM486.5 222.3L486.6 222.8L486.9 223.3L487.1 223.5L487.5 223.7L487.8 223.7L488.2 223.7L489.9 222.9L490.2 222.7L490.4 222.5L490.5 222.2L490.8 220.5L490.8 220.2L490.6 219.8L490.4 219.6L490.0 219.4L488.7 219.1L488.4 219.0L488.0 219.1L487.8 219.3L487.7 219.3L487.5 219.6L486.6 221.9ZM494.8 218.6L494.5 218.7L494.0 219.0L493.7 219.3L493.5 219.8L493.0 222.8L493.0 223.1L493.2 223.4L493.4 223.7L494.5 224.6L494.8 224.8L495.1 224.9L495.5 224.8L495.8 224.6L496.0 224.4L497.2 222.1L497.4 221.7L497.3 221.3L496.5 219.3L496.3 219.0L496.0 218.8L495.6 218.7L495.1 218.6ZM501.0 216.6L500.6 216.6L500.2 216.8L498.9 217.7L498.6 218.0L498.5 218.4L498.6 218.9L499.3 220.6L499.5 220.9L499.9 221.1L502.8 222.2L503.2 222.2L503.5 222.2L503.9 222.0L504.1 221.7L504.3 221.4L504.4 221.1L504.3 220.7L503.6 218.5L503.4 218.2L503.2 217.9L501.3 216.8ZM506.5 219.6L506.8 219.8L507.2 219.9L507.5 219.9L507.9 219.7L508.1 219.5L508.8 218.4L509.0 218.0L509.0 217.6L508.8 217.3L508.5 217.0L508.2 216.8L507.8 216.8L507.4 217.0L506.6 217.6L506.3 217.9L506.1 218.3L506.2 218.7L506.3 219.2ZM513.8 223.1L514.2 223.1L514.5 222.9L515.4 222.3L515.6 222.0L515.7 221.7L515.7 221.3L515.1 218.3L515.0 217.9L514.7 217.7L514.3 217.5L513.1 217.3L512.7 217.3L512.3 217.4L512.0 217.7L510.6 220.0L510.4 220.4L510.4 220.8L510.6 221.1L510.9 221.4L513.4 223.0ZM517.4 216.7L517.1 216.9L516.9 217.3L516.9 217.7L517.5 220.7L517.7 221.0L518.0 221.3L518.3 221.5L518.7 221.4L522.4 220.5L522.9 220.3L523.1 219.9L523.7 218.4L523.7 218.1L523.7 217.8L523.5 217.5L522.9 216.6L522.6 216.3L522.3 216.2L522.0 216.2L517.8 216.5ZM529.8 219.2L529.5 218.9L529.2 218.7L528.8 218.7L526.4 218.9L526.0 219.0L525.8 219.3L525.6 219.6L525.3 220.4L525.2 220.7L525.2 221.0L525.4 221.3L527.4 223.9L527.7 224.2L528.1 224.3L528.5 224.3L528.8 224.1L530.0 223.1L530.2 222.8L530.3 222.5L530.3 222.2L529.9 219.5ZM482.0 224.5L481.7 224.7L481.4 225.1L481.3 225.5L481.4 225.9L481.5 226.1L481.8 226.5L482.2 226.7L482.7 226.8L483.1 226.8L483.5 226.7L483.7 226.4L483.9 226.1L483.9 225.7L483.8 225.3L483.6 225.0L483.3 224.7L482.9 224.5L482.4 224.5ZM487.8 226.8L487.6 227.2L487.5 227.4L487.5 227.8L487.7 228.2L488.0 228.4L489.1 229.1L489.5 229.3L489.9 229.3L493.0 228.3L493.4 228.1L493.6 227.8L493.7 227.3L493.6 226.9L493.4 226.6L492.0 225.5L491.7 225.3L491.4 225.2L491.0 225.3L488.2 226.5ZM497.1 227.1L497.1 227.5L497.3 227.9L497.6 228.1L498.0 228.2L501.0 228.5L501.3 228.4L501.7 228.3L501.9 228.0L502.0 227.6L502.3 225.1L502.3 224.7L502.1 224.3L501.7 224.0L500.0 223.4L499.7 223.4L499.3 223.4L499.0 223.6L498.8 223.9L497.2 226.8ZM504.3 228.4L504.6 228.8L504.9 229.1L505.3 229.1L507.5 229.0L507.9 228.9L508.2 228.7L508.4 228.3L508.4 227.9L508.2 227.5L506.5 224.8L506.2 224.5L505.8 224.3L505.4 224.3L505.0 224.5L504.8 224.8L504.6 225.2L504.3 228.0ZM511.0 224.2L510.6 224.2L510.3 224.4L510.0 224.7L509.9 225.0L509.9 225.4L510.0 225.8L510.3 226.2L510.5 226.5L510.9 226.6L511.2 226.7L511.6 226.6L511.9 226.4L512.0 226.2L512.2 225.9L512.3 225.6L512.2 225.2L512.1 224.9L511.8 224.7L511.4 224.4ZM514.5 226.1L514.6 226.5L514.9 226.8L518.5 229.5L518.9 229.7L519.4 229.7L519.7 229.5L520.0 229.2L520.2 228.9L520.3 228.6L520.3 228.2L520.1 227.9L517.8 224.1L517.5 223.8L517.1 223.7L516.7 223.7L516.3 223.9L515.0 224.9L514.6 225.4L514.5 225.7ZM522.0 226.2L522.4 226.4L522.8 226.4L523.7 226.2L524.1 226.0L524.3 225.7L524.5 225.4L524.4 225.0L524.3 224.6L523.4 223.4L523.1 223.2L522.7 223.1L522.3 223.1L521.6 223.3L521.3 223.4L521.0 223.7L520.9 224.0L520.9 224.4L521.0 224.8L521.8 225.9ZM477.8 232.3L477.7 232.7L477.8 233.1L478.0 233.4L480.0 235.4L480.3 235.6L480.6 235.7L481.0 235.7L481.3 235.5L482.0 234.9L482.3 234.7L482.4 234.4L483.1 231.3L483.1 230.9L483.0 230.6L482.7 230.3L482.4 230.1L481.0 229.8L480.5 229.8L480.1 230.1L478.0 232.0ZM486.5 230.1L486.1 230.1L485.8 230.3L485.5 230.5L485.4 230.9L484.7 233.8L484.7 234.1L484.8 234.5L485.1 234.8L485.4 234.9L487.8 235.6L488.2 235.7L488.5 235.6L488.8 235.4L489.1 235.2L489.3 234.7L489.2 234.3L488.5 231.6L488.3 231.3L488.1 231.1L486.9 230.3ZM491.2 231.3L491.0 231.6L490.9 231.9L490.9 232.3L491.4 234.1L491.5 234.4L491.8 234.7L492.1 234.8L493.0 235.1L493.4 235.1L493.8 235.0L494.1 234.8L494.2 234.4L495.0 231.7L495.0 231.2L494.9 230.8L494.6 230.5L494.2 230.4L493.8 230.4L491.6 231.1ZM496.6 234.6L496.7 235.0L496.9 235.3L497.2 235.5L497.5 235.5L497.9 235.5L501.6 234.1L501.9 233.9L502.1 233.6L502.2 233.2L502.3 231.8L502.3 231.4L502.1 231.1L501.8 230.9L501.4 230.7L498.5 230.5L498.2 230.5L497.8 230.7L497.6 230.9L497.5 231.2L496.6 234.3ZM504.3 234.2L504.5 234.5L504.7 234.8L505.0 234.9L509.5 235.9L509.9 235.9L510.2 235.8L510.8 235.5L511.1 235.2L511.2 234.9L511.3 234.5L511.2 234.2L510.0 231.7L509.8 231.4L509.4 231.2L509.1 231.1L505.3 231.3L505.0 231.4L504.7 231.6L504.5 231.9L504.4 232.2L504.3 233.8ZM511.7 229.9L511.7 230.3L511.8 230.7L513.3 233.9L513.6 234.2L513.9 234.4L514.4 234.4L514.8 234.2L517.2 232.5L517.5 232.2L517.6 231.8L517.6 231.5L517.5 231.1L517.2 230.8L514.1 228.6L513.8 228.4L513.4 228.4L513.1 228.5L512.8 228.7L511.9 229.6ZM478.0 237.7L478.1 237.3L478.0 236.9L477.8 236.6L476.8 235.6L476.4 235.4L476.1 235.3L475.7 235.4L473.3 236.5L473.0 236.7L472.8 237.0L472.7 237.3L472.7 237.7L473.2 239.4L473.4 239.8L473.8 240.1L474.7 240.5L475.1 240.6L475.5 240.5L475.8 240.3L477.8 238.0ZM483.7 236.8L483.3 236.9L483.0 237.2L482.8 237.6L482.8 238.0L483.0 238.4L484.0 239.8L484.3 240.1L484.7 240.2L485.6 240.3L486.0 240.3L486.4 240.1L486.6 239.8L486.8 239.5L486.9 238.5L486.9 238.2L486.7 237.9L486.5 237.6L486.2 237.5L484.1 236.8ZM490.7 236.7L490.4 236.8L489.6 237.2L489.3 237.5L489.1 238.0L488.7 241.1L488.8 241.5L489.0 241.8L489.0 241.9L489.3 242.1L489.8 242.2L490.2 242.1L493.3 240.7L493.7 240.4L493.9 240.0L494.2 238.6L494.2 238.3L494.1 237.9L493.8 237.6L493.5 237.4L491.1 236.7ZM499.9 237.1L499.7 237.4L499.6 237.8L499.7 238.2L499.9 238.5L500.3 238.8L501.2 239.1L501.6 239.2L501.9 239.1L502.2 238.9L502.5 238.6L502.5 238.2L502.6 237.5L502.5 237.1L502.3 236.8L502.0 236.5L501.6 236.5L501.2 236.5L500.2 236.9ZM504.7 240.4L504.9 240.7L505.2 241.0L505.5 241.1L505.9 241.1L506.2 240.9L506.3 240.9L506.6 240.6L507.6 239.0L507.7 238.6L507.7 238.2L507.5 237.9L507.3 237.6L506.9 237.5L505.9 237.3L505.5 237.3L505.1 237.5L504.8 237.8L504.7 238.2L504.7 240.1ZM469.2 243.6L469.1 243.2L468.9 242.8L468.5 242.6L468.1 242.5L465.4 242.7L465.0 242.8L464.7 243.1L464.5 243.4L464.4 243.7L464.4 243.9L464.5 244.3L464.6 244.5L465.7 246.0L466.0 246.2L466.3 246.4L466.7 246.4L467.4 246.3L467.8 246.1L468.1 245.8L469.1 244.0ZM472.9 242.6L472.6 242.6L472.2 242.8L472.0 243.1L470.7 245.6L470.6 246.0L470.6 246.4L470.9 246.7L471.2 247.0L473.0 247.7L473.4 247.8L473.7 247.8L474.1 247.6L474.3 247.3L475.2 245.8L475.3 245.4L475.3 245.0L474.9 243.7L474.6 243.4L474.3 243.1L473.3 242.6ZM480.9 239.8L480.6 239.6L480.2 239.6L479.9 239.7L479.6 239.9L477.5 242.3L477.3 242.6L477.2 242.9L477.3 243.3L477.5 243.8L477.6 244.2L477.9 244.4L478.2 244.5L480.0 244.8L480.4 244.8L480.8 244.5L481.1 244.2L481.9 241.9L482.0 241.4L481.8 241.0L481.2 240.0ZM483.4 244.9L483.5 245.3L483.7 245.7L484.1 245.9L484.6 245.9L487.2 245.3L487.6 245.2L487.8 244.9L488.0 244.5L488.0 244.4L488.0 244.0L487.8 243.6L487.4 243.1L487.1 242.9L486.7 242.8L485.0 242.5L484.6 242.6L484.2 242.8L483.9 243.2L483.4 244.5ZM490.8 244.0L490.5 244.4L490.5 244.8L490.7 245.2L491.0 245.5L494.0 247.4L494.3 247.6L494.6 247.6L494.9 247.5L496.0 247.0L496.3 246.8L496.5 246.4L496.6 246.0L496.4 245.6L494.8 243.0L494.5 242.8L494.2 242.6L493.8 242.6L493.5 242.7L491.1 243.8ZM498.8 245.6L499.2 245.7L499.6 245.7L500.0 245.5L502.5 243.5L502.7 243.1L502.8 242.7L502.8 242.3L502.5 242.0L502.2 241.8L497.2 239.8L496.7 239.8L496.3 239.9L496.0 240.2L495.8 240.5L495.8 240.6L495.8 241.0L496.0 241.4L498.5 245.3ZM460.0 248.0L459.8 248.4L459.7 248.8L459.8 249.1L461.0 251.4L461.2 251.7L461.5 251.9L461.9 252.0L462.2 251.9L462.7 251.7L463.0 251.6L463.2 251.3L463.4 251.0L463.9 248.4L463.9 248.0L463.7 247.6L463.4 247.2L463.1 246.9L462.6 246.8L462.2 246.9L460.3 247.8ZM471.3 250.3L471.3 249.9L471.2 249.6L471.0 249.3L470.7 249.1L468.7 248.2L468.1 248.2L467.1 248.3L466.8 248.5L466.5 248.7L466.3 249.1L465.8 251.6L465.8 252.0L466.0 252.4L466.2 252.6L467.6 253.6L468.0 253.7L468.3 253.8L468.7 253.6L469.0 253.4L471.1 250.6ZM481.1 247.3L480.8 247.2L477.9 246.8L477.5 246.8L477.2 247.0L476.9 247.3L476.2 248.5L476.1 248.8L476.1 249.1L476.2 249.5L476.5 250.0L476.8 250.3L477.3 250.5L480.6 250.8L481.0 250.7L481.4 250.5L481.6 250.2L481.7 249.8L481.6 248.2L481.6 247.8L481.3 247.5L481.3 247.5ZM483.9 251.8L484.1 252.1L484.4 252.3L484.8 252.4L485.1 252.4L485.4 252.2L487.2 250.7L487.5 250.3L487.6 249.8L487.4 248.5L487.3 248.1L487.0 247.8L486.7 247.6L486.2 247.6L484.5 248.0L484.2 248.1L483.9 248.3L483.7 248.6L483.7 249.0L483.8 251.5ZM490.7 247.7L490.3 247.7L489.9 247.8L489.7 248.0L489.5 248.4L489.5 248.7L489.5 249.4L489.6 249.7L489.9 250.0L490.2 250.2L491.3 250.5L491.7 250.6L492.1 250.4L492.4 250.1L492.5 249.9L492.7 249.5L492.6 249.2L492.5 248.8L492.2 248.6L491.0 247.8ZM463.0 257.8L463.2 258.1L463.5 258.4L463.8 258.5L464.2 258.5L464.5 258.4L466.4 257.3L466.7 257.1L466.9 256.7L466.9 256.3L466.7 255.9L466.5 255.7L464.9 254.5L464.4 254.4L463.9 254.4L463.9 254.5L463.5 254.6L463.3 254.9L463.2 255.3L463.0 257.4ZM470.4 255.3L470.4 255.7L470.5 256.0L470.7 256.3L471.0 256.5L473.3 257.4L473.7 257.4L474.0 257.4L474.4 257.2L474.6 256.8L474.7 256.5L474.8 252.5L474.7 252.1L474.5 251.7L474.1 251.5L473.7 251.4L473.3 251.6L473.0 251.8L470.6 255.0ZM477.7 252.6L477.3 252.8L477.1 253.1L477.0 253.5L476.8 256.7L476.9 257.1L477.1 257.4L477.5 257.7L477.9 257.7L479.0 257.7L479.3 257.6L479.6 257.4L482.5 254.7L482.7 254.3L482.8 253.9L482.6 253.4L482.6 253.3L482.3 253.0L481.8 252.9L478.1 252.5ZM489.1 252.1L488.8 252.2L488.5 252.3L487.0 253.6L486.7 253.9L486.6 254.3L486.7 254.8L487.0 255.1L487.2 255.3L487.5 255.5L487.8 255.5L488.2 255.5L488.5 255.3L490.1 254.0L490.3 253.7L490.4 253.2L490.4 252.8L490.1 252.5L489.7 252.3L489.4 252.2ZM469.2 262.2L469.3 262.5L469.5 262.8L469.8 263.1L471.5 263.9L472.0 264.0L472.4 263.9L472.9 263.6L473.2 263.4L473.3 263.1L473.4 262.8L473.6 261.0L473.5 260.5L473.3 260.2L472.9 259.9L471.4 259.3L471.0 259.3L470.6 259.4L470.3 259.6L470.1 259.9L469.3 261.8ZM476.3 262.1L476.5 262.4L476.8 262.7L479.8 263.8L480.1 263.9L480.5 263.8L480.8 263.6L481.0 263.3L481.1 263.0L481.1 262.6L480.9 262.3L479.4 260.4L479.0 260.1L478.5 260.0L477.2 260.1L476.8 260.2L476.5 260.4L476.3 260.7L476.2 261.0L476.2 261.7ZM482.1 258.3L482.0 258.7L482.0 259.0L482.2 259.4L484.1 261.7L484.5 262.0L484.8 262.1L485.2 262.1L485.6 261.8L485.8 261.5L486.8 259.3L486.9 258.9L486.8 258.5L486.8 258.3L486.5 257.9L485.0 256.7L484.7 256.5L484.3 256.4L484.0 256.5L483.7 256.7L482.3 258.0Z" fill="#e7e4d1" stroke="#2c2436" stroke-width="0.7"/><ellipse cx="479.5" cy="251" rx="18.5" ry="14.5" transform="rotate(49.5 479.5 251)" fill="#c4a273" stroke="#2a2430" stroke-width="1.6"/><path d="M492 239 C499 246 496 258 488 263" fill="none" stroke="#8d7a6a" stroke-width="1.2"/><ellipse cx="476" cy="253" rx="13" ry="12.2" transform="rotate(49.5 476 253)" fill="#c9a878"/><path d="M466 243.5 C475 238 487 246 489.5 262" fill="none" stroke="#2e251c" stroke-width="0.9"/><path d="M326.5 284.3 Q336 270 350.3 264.6 L386.0 302.0 L419.3 276.9 Q433 285 440.5 301.3 L402.0 337.2 L403.5 394.5 Q385 404 366.4 394.5 L365.4 331.9 Z" fill="#4c4260" stroke="#2b2433" stroke-width="1.4"/><path d="M381.2 302.3L385.5 304.1M381.2 302.3L380.2 299.3M394.4 302.4L391.8 302.3M396.4 300.3L396.2 298.1M391.8 302.3L389.0 301.6M396.2 298.1L395.2 296.9M337.6 295.5L338.2 295.4M333.9 288.3L339.0 290.3M338.2 295.4L339.0 290.3M372.8 301.7L376.5 305.6M377.0 297.1L376.5 295.1M367.6 301.1L366.6 297.9M369.7 293.7L366.6 297.9M396.2 298.1L399.2 293.9M410.2 289.9L404.8 291.8M404.0 290.3L404.8 291.8M356.1 272.8L351.4 270.7M350.6 267.1L349.9 267.7M349.9 267.7L351.4 270.7M347.5 276.9L349.0 277.7M347.5 276.9L351.4 270.7M344.3 272.5L346.4 268.0M348.0 267.2L349.9 267.7M346.7 276.9L347.5 276.9M346.7 276.9L343.7 279.3M348.2 287.1L342.9 284.4M343.7 279.3L342.9 284.4M344.3 272.5L340.9 272.0M333.5 287.1L336.3 283.2M339.0 290.3L339.8 289.6M336.3 283.2L341.4 285.1M339.8 289.6L343.9 291.4M348.2 287.1L348.6 290.0M328.5 284.4L330.4 281.4M336.3 283.2L334.1 278.5M332.5 279.0L334.1 278.5M334.5 277.8L334.1 278.5M340.9 272.0L340.5 271.6M348.0 308.3L348.5 303.6M348.5 303.6L353.9 301.7M353.9 301.7L356.1 304.0M356.1 304.0L356.3 307.8M356.3 307.8L348.9 309.3M342.5 301.5L346.2 301.2M348.1 296.6L347.6 295.7M338.2 295.4L339.5 296.6M343.9 291.4L343.0 295.3M348.6 290.0L348.8 290.4M358.6 302.6L356.1 304.0M361.0 296.8L356.0 295.4M365.8 304.0L367.5 301.4M367.5 301.4L367.6 301.1M376.5 295.1L376.8 294.5M406.3 297.3L403.7 294.9M403.3 295.0L398.9 300.5M398.9 300.5L404.1 303.1M404.1 303.1L405.9 302.0M399.6 293.6L403.3 295.0M396.4 300.3L398.9 300.5M394.4 302.4L396.6 308.6M396.6 308.6L402.8 307.5M402.8 307.5L403.9 309.0M408.3 311.2L411.3 307.0M411.3 307.0L409.2 303.2M410.2 289.9L410.3 290.0M406.3 297.3L411.2 295.1M391.8 302.3L390.5 309.4M385.5 304.1L385.5 305.8M385.5 305.8L388.2 310.1M390.5 309.4L388.2 310.1M390.5 309.4L396.1 309.5M431.5 307.2L432.0 307.2M334.5 277.8L334.4 276.8M367.0 284.2L367.5 285.0M357.8 274.6L359.1 280.0M362.8 279.8L359.1 280.0M359.1 280.0L356.4 283.1M409.0 313.8L403.7 316.4M409.5 321.2L404.5 321.4M408.3 311.2L409.0 313.8M401.1 315.2L399.7 315.4M420.2 316.8L415.3 312.4M421.5 308.3L422.2 309.6M415.3 312.4L418.0 307.4M415.8 320.2L412.2 318.6M426.5 312.3L422.2 309.6M430.8 306.4L431.5 307.2M411.3 307.0L418.0 307.4M413.1 300.3L413.5 296.4M413.5 296.4L417.4 295.4M419.1 306.8L419.0 305.4M417.1 290.6L417.4 295.4M425.0 294.9L425.0 292.5M425.0 294.9L421.1 297.1M425.0 292.5L420.9 288.3M420.9 288.3L417.1 290.6M424.0 306.9L426.7 302.6M426.7 302.6L420.8 300.2M388.2 310.1L387.5 314.0M392.2 316.0L387.5 314.0M356.3 307.8L356.7 308.2M368.3 343.2L370.4 342.2M368.3 343.2L369.1 348.1M370.4 342.2L374.0 344.5M374.0 344.5L374.8 347.8M431.4 294.4L434.8 296.9M434.8 296.9L434.6 299.6M434.6 299.6L430.3 301.7M436.0 295.9L434.8 296.9M432.5 290.7L431.4 294.4M426.7 302.6L429.2 301.2M425.0 294.9L425.4 295.1M437.5 302.0L434.6 299.6M430.8 306.4L430.3 301.7M428.9 286.5L428.6 287.2M428.6 287.2L422.6 284.2M422.6 284.2L422.9 281.1M430.7 288.4L428.6 287.2M421.0 285.9L422.6 284.2M415.4 285.6L413.8 282.9M421.0 285.9L418.9 285.3M356.0 295.4L355.3 292.5M362.1 290.1L355.3 292.5M356.4 283.5L357.0 285.2M356.4 283.5L356.4 283.4M356.4 283.4L367.3 285.3M357.0 285.2L362.5 288.8M362.5 288.8L366.9 286.7M349.5 285.9L356.4 283.5M367.5 285.0L367.3 285.3M369.6 291.8L366.9 286.7M367.1 342.8L368.3 343.2M403.8 331.4L405.3 332.1M411.9 325.9L409.8 325.6M409.5 321.2L409.6 325.3M402.0 326.6L401.9 323.6M402.0 326.6L402.3 327.1M399.0 334.6L403.8 331.4M400.6 336.6L399.0 335.6M395.4 332.7L399.0 334.6M393.6 337.7L398.3 337.8M398.3 337.8L399.0 335.6M388.3 344.1L388.0 349.3M388.0 349.3L380.9 348.8M381.4 344.6L380.7 348.7M380.9 348.8L380.7 348.7M381.3 344.2L381.4 344.6M381.3 344.2L383.7 338.5M381.3 344.2L376.7 341.4M395.2 343.8L398.5 341.4M400.6 341.9L398.5 341.4M397.9 350.0L395.5 348.3M389.8 350.9L395.5 348.3M390.2 340.8L395.2 343.8M390.1 340.3L393.6 337.7M394.5 359.1L394.5 360.5M389.8 350.9L389.5 353.5M389.5 353.5L394.5 359.1M397.9 350.0L398.1 354.8M389.5 353.5L384.9 356.6M384.4 356.6L384.9 356.6M394.5 360.5L394.4 360.5M384.9 356.6L388.9 361.5M394.4 360.5L388.9 361.5M385.5 305.8L380.6 310.5M380.6 310.5L376.2 307.8M367.5 301.4L372.6 308.5M374.4 309.3L376.2 307.8M372.6 308.5L366.0 308.6M373.0 313.4L370.9 314.8M370.9 314.8L366.0 308.6M365.8 304.0L364.9 307.9M362.1 309.9L364.9 307.9M366.0 308.6L364.9 307.9M392.2 316.0L392.8 319.9M394.0 321.5L392.8 319.9M376.4 387.9L373.7 391.2M384.6 374.8L384.8 378.3M384.8 378.3L384.9 378.3M367.0 337.1L372.2 337.3M392.9 367.0L395.0 369.0M395.0 369.0L398.9 368.8M389.9 368.4L392.9 367.0M388.9 372.5L389.9 368.4M394.0 374.5L400.0 374.6M400.0 374.6L400.9 373.5M400.9 373.5L398.9 368.8M380.6 310.5L381.3 313.0M379.1 316.1L381.3 313.0M370.9 314.8L369.8 317.1M379.1 316.1L379.5 319.5M379.5 319.5L374.6 322.9M376.4 387.9L377.5 387.5M377.5 387.5L382.5 389.8M400.0 374.6L400.3 380.1M392.9 379.9L394.9 383.0M394.9 383.0L400.3 380.1M372.2 337.3L374.4 335.7M375.8 336.7L374.4 335.7M383.7 338.5L382.5 337.2M375.8 336.7L382.5 337.2M382.5 337.2L383.0 332.0M368.3 385.2L368.3 385.1M368.3 385.1L367.8 385.2M371.3 390.7L369.7 391.4M368.3 385.1L367.7 380.8M367.7 379.0L373.6 381.0M381.7 381.5L375.3 379.1M387.8 320.5L387.2 326.0M387.8 320.5L385.5 318.8M386.2 326.0L387.2 326.0M387.3 314.1L385.5 318.8M382.8 331.6L377.3 329.0M382.8 331.6L386.2 326.0M362.1 309.9L362.2 314.6M362.2 314.6L363.7 315.5M355.0 314.3L358.1 318.0M362.2 314.6L358.1 318.0M357.0 319.2L358.0 318.6M393.6 322.6L387.8 326.3M387.8 326.3L390.7 331.6M395.4 328.3L393.9 331.2M387.2 326.0L387.8 326.3M390.0 332.4L390.7 331.6M382.8 331.6L383.0 332.0M395.4 332.7L393.9 331.2M374.7 323.9L377.3 329.0M377.3 329.0L377.3 329.0M369.7 391.4L367.9 393.4M375.1 394.8L374.3 396.1M401.9 390.3L396.1 391.4M401.8 387.5L395.9 386.7M395.9 386.7L396.1 391.4M365.3 325.8L365.4 323.3M363.8 322.3L359.9 321.2M359.6 322.4L359.9 321.2M370.2 319.6L365.4 323.3M363.7 315.5L363.8 322.3M375.3 379.1L374.9 375.6M368.7 370.8L368.8 368.7M367.4 361.0L369.7 360.2M367.3 356.8L369.7 360.2M369.2 348.1L372.9 354.3M368.8 368.7L370.4 367.6M369.7 360.2L371.3 360.6M391.0 397.2L385.5 395.8M383.8 397.6L385.5 395.8M394.0 394.6L395.6 393.7M395.1 385.5L388.7 390.7M388.7 390.7L386.5 390.5M386.5 390.5L385.8 389.6M384.9 378.3L389.4 384.6M382.4 381.2L386.0 387.7M381.7 381.5L382.4 381.2M382.5 389.8L385.8 389.6M379.1 396.1L383.8 397.6M372.6 367.8L376.6 374.0M376.6 374.0L381.3 371.9M381.3 371.9L381.0 369.3M370.4 367.6L372.6 367.8M384.6 374.8L381.3 371.9M386.0 364.9L383.7 365.2M375.6 353.9L374.2 354.8M375.6 353.9L381.6 358.7M374.2 354.8L372.6 359.8M372.6 359.8L376.5 362.1M376.5 362.1L381.1 360.6M377.2 350.0L375.6 353.9M372.9 354.3L374.2 354.8M371.3 360.6L372.6 359.8M376.5 366.7L376.5 362.1M378.7 396.2L378.6 397.1" stroke="#5d5170" stroke-width="0.9" fill="none"/><path d="M346.6 274.2L346.9 274.4L347.4 274.4L347.7 274.3L348.0 274.0L349.8 271.1L350.0 270.8L350.0 270.5L349.9 270.2L349.4 269.0L349.1 268.7L348.7 268.5L348.3 268.4L348.0 268.3L347.6 268.4L347.4 268.6L347.2 268.9L345.7 272.1L345.7 272.5L345.8 272.9L346.3 273.9ZM340.6 276.1L340.7 276.5L340.9 276.8L341.2 277.0L343.0 277.8L343.3 277.9L343.7 277.8L344.0 277.7L344.7 277.1L344.9 276.8L345.0 276.3L344.9 275.9L343.9 274.0L343.6 273.6L343.1 273.5L342.4 273.4L342.0 273.4L341.6 273.6L341.3 274.0L340.7 275.7ZM350.1 275.0L350.2 275.4L350.3 275.7L350.6 276.0L351.0 276.1L351.4 276.1L351.8 275.9L353.4 274.5L353.7 274.1L353.8 273.8L353.7 273.4L353.5 273.0L353.2 272.8L352.6 272.5L352.2 272.5L351.9 272.5L351.6 272.7L351.3 272.9L350.3 274.6ZM356.8 276.0L356.5 275.7L356.1 275.6L355.7 275.6L355.4 275.8L353.6 277.3L353.4 277.7L353.3 278.1L353.4 278.5L353.6 278.8L355.6 280.7L355.9 280.9L356.3 281.0L356.7 280.9L357.0 280.6L357.5 280.1L357.7 279.7L357.7 279.2L357.0 276.4ZM331.1 283.6L331.1 283.9L331.2 284.3L331.4 284.5L331.7 284.7L332.2 284.9L332.6 284.9L333.0 284.8L333.3 284.5L334.1 283.5L334.2 283.2L334.3 282.8L334.2 282.5L333.9 281.9L333.6 281.6L333.3 281.4L332.8 281.4L332.4 281.5L332.2 281.8L331.2 283.2ZM336.0 278.5L335.7 278.7L335.5 279.0L335.5 279.4L335.6 279.8L336.8 282.2L337.0 282.5L337.3 282.7L340.9 284.1L341.3 284.1L341.6 284.1L341.9 283.9L342.1 283.6L342.2 283.3L342.7 280.6L342.7 280.1L342.5 279.8L342.1 279.5L339.1 278.1L338.5 278.1L336.3 278.3ZM344.5 283.4L344.7 283.8L345.0 284.0L346.6 284.8L347.0 284.9L347.4 284.9L347.8 284.6L348.0 284.3L348.0 283.9L347.8 279.7L347.7 279.4L347.5 279.1L347.2 278.9L346.8 278.8L346.4 278.9L346.1 279.0L345.2 279.8L345.0 280.1L344.9 280.4L344.5 283.0ZM351.8 280.6L351.4 280.5L351.0 280.6L350.7 280.9L350.5 281.2L350.5 281.6L350.6 282.9L350.6 283.2L350.9 283.5L351.2 283.7L351.5 283.8L351.9 283.8L352.8 283.4L353.2 283.2L353.4 282.9L353.5 282.5L353.4 282.1L353.2 281.8L352.2 280.8ZM335.4 286.7L335.3 287.0L335.4 287.4L335.7 287.7L336.0 287.9L337.8 288.6L338.2 288.6L338.6 288.5L338.9 288.3L339.1 288.0L339.5 286.8L339.6 286.4L339.5 286.0L339.3 285.7L339.0 285.5L337.5 284.9L337.1 284.9L336.6 285.0L336.3 285.3L335.5 286.3ZM343.0 285.6L342.6 285.6L342.2 285.9L342.0 286.2L341.2 288.2L341.2 288.6L341.2 289.0L341.4 289.3L341.8 289.5L343.6 290.3L344.0 290.4L344.3 290.4L346.8 289.6L347.1 289.4L347.3 289.2L347.4 288.8L347.5 288.5L347.4 288.2L347.2 287.8L346.9 287.5L343.4 285.7ZM349.7 289.2L349.9 289.4L350.2 289.6L353.3 290.5L353.7 290.5L354.1 290.4L354.4 290.2L354.6 289.8L355.4 286.7L355.5 286.3L355.4 286.0L355.1 285.7L354.8 285.5L354.5 285.4L354.1 285.5L350.3 286.8L349.9 287.0L349.7 287.2L349.5 287.6L349.4 288.1L349.5 288.8ZM357.3 289.1L357.4 289.5L357.6 289.8L357.9 290.0L358.3 290.0L358.6 290.0L358.9 289.9L359.2 289.7L359.4 289.4L359.5 289.1L359.5 288.7L359.3 288.4L359.1 288.1L358.9 288.0L358.6 287.9L358.2 287.9L357.8 288.0L357.6 288.2L357.4 288.6L357.3 288.8ZM411.0 286.4L411.0 286.8L411.2 287.1L411.5 287.3L411.9 287.4L412.2 287.4L412.5 287.3L412.8 287.1L413.1 286.9L413.2 286.6L413.3 286.3L413.3 285.9L413.1 285.6L413.0 285.4L412.8 285.1L412.5 284.9L412.1 284.9L411.7 285.0L411.4 285.2L411.2 285.5L411.0 286.0ZM416.7 286.8L416.4 287.0L416.2 287.4L416.2 287.6L416.2 288.0L416.3 288.3L416.5 288.6L416.6 288.7L417.0 288.9L417.4 288.9L417.8 288.8L418.3 288.4L418.6 288.2L418.8 287.8L418.8 287.5L418.7 287.1L418.4 286.8L418.1 286.6L417.7 286.6L417.1 286.6ZM423.3 286.1L422.9 286.1L422.5 286.3L422.3 286.6L422.2 287.0L422.2 287.4L422.3 287.8L422.5 288.1L424.0 289.6L424.3 289.8L424.6 289.9L424.9 289.9L425.3 289.8L425.5 289.5L426.1 288.6L426.3 288.2L426.2 287.8L426.1 287.4L425.7 287.2L423.7 286.2ZM340.0 293.4L340.2 293.8L340.4 294.1L340.8 294.2L341.2 294.2L341.5 294.1L341.8 293.8L342.0 293.4L342.1 293.1L342.1 292.7L342.0 292.4L341.8 292.1L341.5 291.9L341.5 291.9L341.1 291.8L340.8 291.9L340.4 292.0L340.2 292.3L340.1 292.7L340.0 293.0ZM349.3 294.9L349.4 295.3L349.7 295.6L350.0 295.7L352.6 296.4L353.0 296.5L353.3 296.3L353.6 296.1L354.2 295.4L354.4 295.0L354.4 294.5L354.2 293.9L354.1 293.5L353.9 293.3L353.5 293.1L350.8 292.4L350.4 292.3L350.1 292.5L349.8 292.7L349.6 293.1L349.3 294.6ZM356.8 293.0L356.6 293.2L356.5 293.6L356.5 294.0L356.6 294.1L356.7 294.4L356.9 294.7L357.3 294.8L360.6 295.7L361.0 295.8L361.4 295.7L361.7 295.4L361.8 295.0L361.9 294.6L361.6 292.5L361.5 292.1L361.2 291.9L360.9 291.7L360.6 291.6L360.2 291.7L357.2 292.8ZM366.7 288.5L366.4 288.3L366.0 288.3L365.7 288.4L363.7 289.3L363.3 289.6L363.1 289.9L363.1 290.0L363.1 290.4L363.7 295.2L363.8 295.5L364.1 295.8L364.4 296.0L365.6 296.5L366.0 296.5L366.4 296.4L366.8 296.1L368.6 293.7L368.7 293.4L368.8 293.1L368.7 292.3L368.6 291.9L367.0 288.8ZM409.4 292.2L409.1 292.0L408.7 291.8L408.2 291.9L406.2 292.5L405.8 292.8L405.6 293.2L405.3 294.0L405.3 294.3L405.4 294.7L405.6 295.0L406.0 295.4L406.4 295.6L406.8 295.7L407.1 295.6L409.1 294.7L409.5 294.4L409.7 294.0L409.7 293.6L409.5 292.6ZM415.7 294.5L415.9 294.3L416.1 294.0L416.1 293.6L416.0 291.6L415.9 291.2L415.6 290.9L414.8 290.3L414.4 290.1L413.9 290.2L412.5 290.6L412.2 290.7L411.9 291.0L411.8 291.3L411.8 291.7L412.2 293.8L412.3 294.2L412.7 294.5L413.3 294.9L413.7 295.0L414.1 295.0L415.3 294.6ZM421.1 295.6L421.5 295.5L423.3 294.5L423.6 294.3L423.8 294.0L423.8 293.6L423.8 293.4L423.8 293.0L423.6 292.7L421.3 290.3L420.9 290.1L420.5 290.0L420.1 290.2L418.8 290.9L418.6 291.1L418.4 291.5L418.3 291.8L418.5 294.0L418.6 294.3L418.8 294.6L419.1 294.8L420.6 295.6ZM427.2 292.0L427.2 292.4L427.4 292.7L427.6 293.0L428.0 293.2L428.3 293.2L429.5 293.1L429.9 292.9L430.2 292.7L430.4 292.4L430.7 291.2L430.8 290.7L430.6 290.3L430.3 290.0L429.9 289.7L429.5 289.6L429.1 289.6L428.8 289.7L428.5 290.0L427.4 291.7ZM341.8 299.7L342.0 299.9L342.3 300.1L342.7 300.1L344.6 299.9L345.0 299.8L345.3 299.6L345.5 299.3L345.9 298.3L346.0 297.9L345.9 297.6L345.7 297.2L345.4 297.0L345.1 296.9L343.4 296.8L343.0 296.8L342.0 297.2L341.7 297.4L341.5 297.7L341.4 298.0L341.4 298.4L341.6 299.4ZM349.3 298.3L349.0 298.4L348.7 298.6L348.5 298.9L347.9 300.3L347.8 300.7L347.9 301.1L348.1 301.4L348.4 301.7L348.7 301.9L349.1 302.0L349.5 301.9L351.9 301.1L352.2 300.9L352.5 300.5L352.5 300.1L352.5 299.8L352.4 299.4L352.2 299.1L351.8 298.9L349.7 298.3ZM356.7 296.9L356.3 297.0L356.0 297.2L355.2 298.2L355.0 298.5L354.9 298.9L355.0 300.8L355.1 301.2L355.3 301.5L355.8 301.9L356.1 302.2L356.6 302.3L357.0 302.1L357.3 301.9L357.6 301.7L357.8 301.4L359.0 298.6L359.0 298.2L358.9 297.8L358.7 297.4L358.3 297.3L357.0 296.9ZM362.6 297.3L362.2 297.4L361.9 297.5L361.6 297.7L361.4 298.0L360.2 300.9L360.2 301.2L360.2 301.6L360.4 301.9L360.6 302.1L361.0 302.2L364.8 303.0L365.1 303.0L365.5 302.8L365.8 302.5L366.5 301.5L366.6 301.1L366.6 300.6L366.1 298.9L365.9 298.6L365.5 298.3L363.2 297.4ZM367.8 298.1L367.8 298.5L368.2 299.6L368.3 300.0L368.6 300.2L369.0 300.3L371.9 300.6L372.4 300.6L372.8 300.3L375.5 297.4L375.7 297.0L375.7 296.6L375.6 296.2L375.3 295.9L374.9 295.7L370.7 294.9L370.4 294.9L370.0 295.0L369.7 295.3L368.0 297.6ZM376.3 304.1L376.7 304.2L377.0 304.2L377.3 304.0L379.6 302.4L379.9 302.1L380.0 301.7L380.0 301.3L379.6 300.1L379.4 299.8L379.2 299.6L377.9 298.7L377.5 298.6L377.2 298.5L376.8 298.6L376.6 298.8L374.6 301.0L374.4 301.3L374.3 301.7L374.4 302.0L374.6 302.3L376.0 303.9ZM391.4 299.8L392.1 300.0L392.2 300.0L392.7 300.0L393.1 300.0L393.4 299.8L393.6 299.5L393.7 299.1L393.7 298.7L393.5 298.4L393.2 298.1L391.1 299.7ZM404.1 297.0L403.7 296.9L403.3 297.0L402.9 297.3L401.5 299.1L401.3 299.4L401.3 299.8L401.4 300.1L401.6 300.4L401.8 300.6L403.4 301.4L403.8 301.5L404.1 301.5L404.5 301.3L404.7 301.0L404.8 300.6L405.0 298.3L405.0 297.8L404.7 297.4L404.4 297.2ZM412.2 297.2L412.0 296.9L411.7 296.7L411.6 296.6L411.1 296.4L410.7 296.5L407.9 297.8L407.6 298.0L407.4 298.3L407.3 298.6L407.2 300.5L407.2 300.9L407.4 301.2L407.8 301.5L408.5 301.7L409.0 301.8L409.5 301.6L411.7 300.0L412.0 299.7L412.1 299.3L412.3 297.6ZM419.8 299.8L419.9 298.4L419.9 298.0L419.7 297.7L419.3 297.4L417.6 296.6L417.3 296.5L417.0 296.6L415.2 297.0L414.8 297.2L414.5 297.5L414.4 297.9L414.3 299.4L414.3 299.8L414.6 300.2L417.4 302.6L417.7 302.8L418.1 302.8L418.5 302.7L418.8 302.5L419.0 302.2L419.7 300.1ZM425.2 296.5L424.8 296.3L424.4 296.3L424.1 296.4L422.4 297.3L422.0 297.7L421.9 298.1L421.8 298.9L421.8 299.3L422.1 299.7L422.4 299.9L426.2 301.5L426.7 301.6L427.1 301.4L427.1 301.4L427.4 301.2L427.6 300.8L427.6 300.4L427.5 300.0L425.4 296.7ZM429.8 300.4L430.1 300.5L430.5 300.6L430.8 300.5L433.3 299.3L433.5 299.1L433.7 298.8L433.8 298.4L433.8 297.9L433.7 297.4L433.4 297.0L431.4 295.5L431.1 295.3L430.7 295.3L428.4 295.6L428.0 295.7L427.7 296.0L427.6 296.4L427.5 296.8L427.7 297.1L429.5 300.1ZM349.4 307.1L349.6 307.4L349.8 307.7L350.2 307.8L350.6 307.8L354.2 307.1L354.5 306.9L354.8 306.7L355.0 306.4L355.0 306.0L354.9 304.9L354.9 304.5L354.7 304.3L354.0 303.5L353.7 303.3L353.3 303.2L352.9 303.3L350.2 304.2L349.9 304.4L349.6 304.7L349.5 305.1L349.4 306.7ZM357.4 307.0L357.6 307.3L358.0 307.5L361.4 308.6L361.9 308.6L362.3 308.4L363.7 307.5L363.9 307.2L364.0 306.9L364.3 305.9L364.3 305.5L364.1 305.1L363.9 304.8L363.5 304.6L359.1 303.8L358.8 303.8L358.5 303.9L357.7 304.3L357.4 304.6L357.3 304.9L357.2 305.3L357.3 306.6ZM366.5 306.5L366.6 306.9L366.8 307.1L367.1 307.3L367.5 307.4L368.4 307.4L368.8 307.3L369.1 307.1L369.3 306.8L369.4 306.5L369.4 306.1L369.2 305.8L368.5 304.8L368.2 304.6L367.9 304.4L367.5 304.4L367.2 304.6L366.9 304.8L366.7 305.2L366.5 306.2ZM371.4 302.7L371.1 302.9L370.8 303.2L370.7 303.5L370.7 303.9L370.9 304.2L373.2 307.4L373.6 307.7L373.7 307.8L374.0 307.9L374.4 307.8L374.7 307.6L374.9 307.5L375.1 307.2L375.3 306.8L375.3 306.5L375.3 306.0L375.0 305.7L372.6 303.0L372.3 302.8L371.9 302.7L371.8 302.7ZM378.2 306.2L378.1 306.6L378.1 307.0L378.2 307.3L378.5 307.6L379.8 308.3L380.2 308.5L380.6 308.4L381.0 308.2L383.1 306.1L383.4 305.8L383.4 305.4L383.4 305.0L383.1 304.7L382.8 304.5L381.9 304.1L381.5 304.0L381.2 304.1L380.9 304.2L378.5 305.9ZM387.0 304.7L386.9 305.0L386.9 305.4L387.0 305.7L387.8 307.0L388.1 307.3L388.5 307.4L388.9 307.5L389.2 307.3L389.5 307.0L389.7 306.7L390.1 304.4L390.1 304.0L389.9 303.6L389.6 303.4L389.2 303.2L388.8 303.3L388.5 303.4L387.3 304.4ZM394.1 305.6L393.9 305.4L393.5 305.3L393.1 305.3L392.8 305.5L392.5 305.8L392.4 306.1L392.3 307.0L392.3 307.4L392.5 307.8L392.8 308.1L393.2 308.2L393.7 308.2L394.1 308.1L394.4 307.9L394.6 307.6L394.7 307.2L394.7 306.9L394.3 306.0ZM402.5 304.2L402.4 303.8L402.2 303.5L402.0 303.3L398.8 301.7L398.4 301.6L397.4 301.5L396.9 301.6L396.6 301.8L396.2 302.3L396.0 302.6L395.9 302.9L396.0 303.3L397.1 306.5L397.3 306.8L397.5 307.0L397.9 307.1L398.2 307.1L401.3 306.6L401.6 306.4L401.9 306.2L402.1 305.9L402.5 304.5ZM406.1 303.3L405.6 303.5L405.4 303.6L405.1 303.9L405.0 304.2L404.2 306.8L404.1 307.3L404.3 307.7L404.5 308.0L404.9 308.3L407.2 309.4L407.5 309.5L407.8 309.5L408.2 309.4L408.4 309.1L409.6 307.5L409.8 307.1L409.8 306.7L409.7 306.4L408.6 304.4L408.4 304.1L408.1 303.9L406.5 303.4ZM416.0 306.1L416.3 305.9L416.6 305.6L416.6 305.2L416.5 304.8L416.3 304.4L413.6 302.2L413.2 302.0L412.8 301.9L412.4 302.1L411.3 302.9L411.0 303.2L410.9 303.5L410.9 303.9L411.0 304.2L411.7 305.5L411.9 305.8L412.2 306.0L412.5 306.0L415.6 306.2ZM421.9 301.6L421.5 301.7L421.2 301.9L420.9 302.3L419.9 305.3L419.8 305.7L419.8 305.8L420.0 306.3L420.3 306.6L421.0 307.1L421.4 307.2L421.7 307.2L422.0 307.1L423.2 306.5L423.5 306.1L424.9 304.0L425.0 303.6L425.0 303.1L424.7 302.8L424.4 302.5L422.3 301.7ZM429.4 303.3L429.2 303.0L428.8 302.9L428.4 302.8L428.1 302.9L427.6 303.2L427.3 303.5L426.9 304.1L426.7 304.5L426.7 304.8L426.9 305.2L427.1 305.5L427.4 305.6L427.8 305.7L428.7 305.6L429.1 305.5L429.4 305.2L429.6 304.9L429.6 304.5L429.5 303.7ZM432.5 302.7L432.3 303.0L432.2 303.4L432.4 304.6L432.5 304.9L432.7 305.2L433.0 305.4L433.4 305.4L434.2 305.4L434.4 305.4L435.2 304.6L435.6 303.6L435.7 303.2L435.6 302.8L435.4 302.5L434.9 302.1L434.5 301.9L434.2 301.8L433.8 301.9L432.8 302.4ZM351.8 310.5L351.6 310.8L351.4 311.2L351.4 311.5L351.6 311.9L351.9 312.4L352.1 312.6L352.4 312.8L352.8 312.8L353.0 312.8L353.4 312.7L353.7 312.4L353.9 312.1L354.0 311.5L354.1 311.1L353.9 310.7L353.7 310.4L353.3 310.2L352.9 310.2L352.2 310.4ZM357.9 315.9L358.3 316.0L358.7 315.9L359.0 315.8L360.7 314.4L361.0 314.0L361.1 313.6L361.0 311.5L360.9 311.1L360.7 310.7L360.3 310.5L358.4 310.0L358.0 309.9L357.7 310.0L357.4 310.3L357.2 310.7L356.4 313.5L356.4 314.0L356.6 314.4L357.6 315.6ZM364.2 314.5L367.7 315.4L368.1 315.4L368.5 315.3L368.8 315.0L368.9 314.6L368.9 314.2L368.7 313.8L365.6 309.9L365.3 309.6L365.0 309.5L364.6 309.5L364.3 309.7L363.6 310.1L363.3 310.5L363.2 311.0L363.3 313.4L363.4 313.7L363.5 314.0L363.8 314.2L364.0 314.4ZM369.7 309.6L369.3 309.8L369.1 310.1L369.0 310.4L369.1 310.8L369.2 311.1L370.6 312.8L370.8 313.0L371.2 313.1L371.6 313.1L371.9 313.0L371.9 313.0L372.2 312.7L372.3 312.4L372.9 310.8L372.9 310.4L372.8 310.1L372.6 309.7L372.3 309.5L371.9 309.5L370.0 309.5ZM380.1 312.8L380.0 312.4L379.8 311.6L379.7 311.2L379.4 311.0L376.9 309.5L376.5 309.3L376.1 309.4L375.8 309.5L375.5 309.7L375.2 310.2L374.6 311.9L374.6 312.3L374.7 312.7L374.9 313.0L375.2 313.2L378.0 314.4L378.5 314.5L378.9 314.4L379.3 314.1L379.9 313.2ZM382.1 311.9L382.4 312.1L382.7 312.2L385.7 312.8L386.1 312.7L386.4 312.6L386.7 312.3L386.8 311.9L387.1 310.7L387.1 310.3L386.9 310.0L385.9 308.4L385.7 308.1L385.4 308.0L385.0 307.9L384.7 308.0L384.4 308.2L382.2 310.4L382.0 310.7L381.9 311.0L381.9 311.4L382.0 311.5ZM389.0 312.9L389.2 313.3L389.6 313.6L391.4 314.3L391.7 314.4L392.1 314.4L392.4 314.2L394.5 312.5L394.7 312.2L394.8 311.8L394.8 311.4L394.5 311.0L394.2 310.8L393.8 310.7L390.8 310.6L390.5 310.7L389.9 310.9L389.5 311.0L389.3 311.3L389.2 311.6L389.0 312.5ZM397.9 309.7L397.6 309.9L397.4 310.2L397.4 310.5L397.4 311.6L397.5 312.0L397.8 312.4L399.2 313.5L399.5 313.6L399.9 313.7L400.2 313.6L400.5 313.4L400.7 313.1L401.9 310.5L402.0 310.1L401.9 309.8L401.8 309.5L401.5 309.2L401.2 309.1L400.8 309.1L398.2 309.5ZM403.0 313.9L403.1 314.3L403.3 314.6L403.7 314.8L404.0 314.9L404.4 314.8L406.9 313.6L407.2 313.4L407.4 313.1L407.5 312.8L407.4 312.4L407.4 312.4L407.3 312.1L406.9 311.8L405.4 311.0L405.0 310.9L404.6 310.9L404.2 311.2L404.0 311.5L403.1 313.5ZM415.4 309.5L415.4 309.1L415.2 308.7L414.9 308.5L414.5 308.4L412.5 308.3L412.1 308.3L411.8 308.5L411.6 308.7L409.9 311.1L409.7 311.5L409.7 311.9L410.0 312.9L410.3 313.3L410.7 313.7L411.0 313.9L411.4 314.0L411.7 313.9L412.0 313.7L414.2 311.8L414.4 311.5L415.3 309.9ZM419.5 308.6L419.1 308.7L418.7 308.9L418.5 309.2L417.2 311.5L417.1 311.9L417.2 312.3L417.4 312.7L418.3 313.5L418.7 313.7L419.1 313.7L419.5 313.6L419.8 313.3L420.0 313.0L420.7 310.2L420.8 309.7L420.6 309.3L420.3 309.1L419.8 308.8ZM425.8 308.4L425.5 308.6L425.3 309.0L425.3 309.4L425.4 309.8L425.7 310.1L427.4 311.2L427.8 311.3L428.0 311.3L429.0 310.4L429.3 309.4L429.3 309.0L429.2 308.6L429.0 308.3L428.6 308.1L428.3 308.1L426.2 308.3ZM360.0 318.2L359.8 318.5L359.9 318.9L360.0 319.3L360.5 319.8L360.7 320.0L361.0 320.2L361.2 320.2L361.6 320.3L362.0 320.2L362.3 319.9L362.4 319.6L362.5 319.2L362.5 318.1L362.4 317.7L362.2 317.4L361.9 317.2L361.5 317.1L361.2 317.2L360.8 317.3L360.2 317.9ZM365.2 320.2L365.4 320.6L365.7 320.8L366.0 320.9L366.4 320.8L366.7 320.6L368.0 319.6L368.3 319.3L368.4 319.0L368.4 318.6L368.2 318.3L368.0 318.0L367.6 317.9L366.3 317.5L365.9 317.5L365.6 317.6L365.3 317.8L365.1 318.1L365.0 318.5L365.1 319.9ZM371.3 318.9L371.5 319.2L374.0 321.1L374.4 321.3L374.8 321.3L375.2 321.1L377.9 319.3L378.1 319.0L378.3 318.7L378.3 318.4L378.2 317.4L378.1 317.1L377.9 316.8L377.6 316.6L373.6 314.9L373.3 314.8L373.0 314.8L372.7 314.9L372.0 315.4L371.7 315.8L371.1 317.0L371.0 317.3L371.0 317.6L371.1 318.6ZM384.7 318.1L384.9 317.8L385.7 315.9L385.7 315.5L385.6 315.0L385.3 314.7L384.9 314.5L382.3 314.1L382.0 314.1L381.6 314.2L381.4 314.5L380.3 316.0L380.1 316.3L380.1 316.7L380.3 318.3L380.4 318.6L380.6 318.9L380.9 319.1L381.6 319.4L382.0 319.5L382.5 319.4L384.5 318.3ZM388.7 316.0L388.3 316.1L387.9 316.3L387.7 316.6L387.3 317.6L387.3 318.1L387.4 318.5L387.7 318.8L387.9 318.9L388.2 319.1L388.6 319.1L390.3 318.9L390.7 318.8L391.0 318.5L391.1 318.2L391.2 317.8L391.1 317.5L391.0 317.2L390.8 316.9L390.5 316.7L389.1 316.1ZM393.8 319.7L394.0 320.1L394.3 320.4L394.6 320.5L395.0 320.5L396.8 320.3L397.2 320.2L397.5 319.9L397.7 319.6L398.5 316.4L398.6 316.0L398.5 315.6L398.2 315.3L396.8 314.3L396.4 314.1L396.0 314.1L395.6 314.3L393.5 316.0L393.3 316.3L393.2 316.6L393.2 316.9L393.6 319.3ZM401.3 316.6L400.9 316.7L400.5 317.0L400.3 317.4L399.7 319.8L399.6 320.2L399.8 320.6L400.1 320.9L401.2 321.7L401.6 321.8L402.0 321.8L402.4 321.6L402.8 321.2L403.0 321.0L403.1 320.7L403.2 320.3L402.8 317.7L402.7 317.4L402.5 317.1L402.2 316.9L401.7 316.7ZM405.0 316.8L404.8 317.1L404.7 317.6L405.0 319.6L405.2 320.0L405.4 320.3L405.7 320.4L406.1 320.5L408.7 320.4L409.1 320.3L409.4 320.1L410.8 318.8L411.0 318.5L411.1 318.1L411.1 317.8L410.7 316.6L410.4 316.2L409.4 315.2L409.0 315.0L408.6 315.0L408.3 315.1L405.3 316.5ZM415.6 314.9L415.3 314.8L414.9 314.9L414.6 315.1L413.6 316.0L413.3 316.3L413.2 316.6L413.3 317.0L413.3 317.1L413.5 317.4L413.8 317.7L415.7 318.5L416.3 318.6L417.3 318.4L417.7 318.3L417.9 318.1L418.1 317.7L418.1 317.4L418.0 317.0L417.8 316.7L415.9 315.0ZM367.3 323.6L367.2 323.9L367.2 324.3L367.3 324.6L367.6 324.9L368.0 325.0L369.7 325.4L370.1 325.4L370.5 325.3L372.0 324.2L372.3 323.9L372.4 323.6L372.4 323.2L372.3 322.9L372.1 322.6L370.8 321.7L370.4 321.5L370.0 321.5L369.6 321.7L367.6 323.3ZM376.0 323.2L375.8 323.5L375.8 323.9L375.9 324.2L377.1 326.5L377.4 326.8L377.8 327.0L378.2 327.0L378.6 326.9L381.8 324.6L382.1 324.3L382.2 323.9L382.1 323.4L381.5 321.7L381.3 321.4L380.9 321.2L380.1 320.8L379.8 320.7L379.5 320.8L379.2 320.9L376.2 322.9ZM384.5 322.8L384.8 323.0L385.2 323.1L385.6 323.0L385.9 322.8L386.1 322.5L386.2 322.2L386.3 321.7L386.3 321.4L386.1 321.1L385.9 320.8L385.9 320.8L385.5 320.7L385.2 320.6L384.8 320.7L384.6 320.8L384.4 321.1L384.2 321.4L384.1 321.7L384.2 322.1L384.3 322.4ZM395.3 322.4L395.0 322.7L394.8 323.1L394.9 323.5L395.8 326.3L396.0 326.6L396.2 326.8L396.6 327.0L397.0 326.9L400.2 326.1L400.6 326.0L400.8 325.7L401.0 325.4L401.0 325.1L401.0 324.6L400.9 324.1L400.5 323.8L398.2 322.2L397.9 322.0L397.5 322.0L395.7 322.2ZM403.1 325.0L403.4 325.4L403.8 325.5L404.2 325.5L407.7 324.7L408.2 324.5L408.4 324.1L408.5 323.7L408.5 323.3L408.4 322.9L408.2 322.6L407.9 322.4L407.5 322.3L405.2 322.4L404.9 322.5L404.6 322.6L403.3 323.7L403.1 324.1L403.0 324.5L403.0 324.6ZM411.6 323.5L411.9 323.8L412.3 324.0L412.4 324.0L412.8 324.0L413.1 323.8L413.4 323.5L413.5 323.1L413.6 322.4L413.5 322.0L413.3 321.7L413.0 321.4L412.6 321.3L412.2 321.4L411.9 321.6L411.8 321.7L411.6 322.1L411.5 322.5L411.5 323.1ZM373.4 332.1L373.8 332.0L374.1 331.9L374.4 331.6L375.8 329.4L375.9 329.1L376.0 328.7L375.8 328.4L374.8 326.4L374.6 326.1L374.2 325.9L373.8 325.9L373.4 326.1L371.8 327.2L371.5 327.5L371.4 327.9L371.2 330.3L371.3 330.7L371.4 331.0L371.7 331.3L373.1 332.0ZM383.8 327.8L383.8 327.4L383.6 327.0L383.3 326.8L382.9 326.6L382.6 326.6L382.2 326.8L380.8 327.8L380.5 328.1L380.4 328.5L380.4 328.9L380.6 329.3L380.9 329.5L381.5 329.8L381.9 329.9L382.3 329.9L382.6 329.7L382.8 329.4L383.6 328.1ZM384.8 330.1L384.8 330.5L385.0 330.9L385.4 331.1L385.7 331.3L387.8 331.4L388.2 331.3L388.6 331.1L388.8 330.7L388.9 330.3L388.8 329.9L387.7 328.1L387.5 327.7L387.1 327.6L386.7 327.6L386.3 327.7L386.0 328.0L385.0 329.7ZM391.4 329.9L391.7 330.1L392.1 330.1L392.5 330.0L393.0 329.9L393.3 329.5L393.8 328.5L393.9 328.2L393.9 327.8L393.2 325.8L393.1 325.5L392.8 325.3L392.5 325.2L392.1 325.2L391.8 325.3L390.3 326.2L390.1 326.5L389.9 326.8L389.9 327.2L390.0 327.5L391.1 329.6ZM395.3 330.8L395.4 331.2L395.6 331.5L395.8 331.8L396.1 331.9L398.4 333.2L398.7 333.3L399.1 333.3L399.4 333.1L402.0 331.4L402.3 331.1L402.5 330.7L402.4 330.3L401.9 328.6L401.7 328.3L401.4 328.1L401.0 328.0L400.7 328.0L396.5 329.0L396.1 329.2L395.9 329.5L395.4 330.4ZM371.0 335.7L371.3 335.5L371.5 335.2L371.6 334.8L371.6 334.4L371.4 334.1L371.1 333.8L369.9 333.2L369.5 333.1L367.9 333.1L367.5 333.1L367.2 333.4L366.9 333.8L366.9 334.2L367.0 334.7L367.2 335.2L367.5 335.4L368.0 335.6L370.6 335.7ZM375.6 334.0L375.6 334.4L375.6 334.6L375.7 334.9L376.0 335.3L376.0 335.3L376.3 335.4L376.6 335.5L380.4 335.8L380.8 335.7L381.1 335.5L381.3 335.2L381.4 334.9L381.6 333.2L381.6 332.8L381.4 332.4L381.0 332.2L378.6 331.0L378.2 330.9L377.9 330.9L377.5 331.1L377.3 331.4L375.7 333.7ZM383.7 336.8L383.9 337.1L384.2 337.4L384.6 337.5L386.9 337.6L387.2 337.5L387.5 337.3L387.8 337.1L387.9 336.8L388.4 334.6L388.4 334.1L388.3 333.7L387.9 333.4L387.5 333.3L384.9 333.2L384.6 333.2L384.2 333.4L384.0 333.7L383.9 334.1L383.6 336.4ZM390.2 337.1L390.3 337.4L390.6 337.7L391.0 337.9L391.4 337.9L391.7 337.7L392.4 337.2L392.6 337.0L392.8 336.7L393.8 333.8L393.8 333.4L393.7 333.0L393.5 332.7L393.1 332.5L392.7 332.5L391.8 332.6L391.4 332.7L391.1 333.0L390.9 333.3L390.2 336.7ZM374.9 338.0L374.6 337.7L374.2 337.5L373.8 337.6L373.4 337.7L373.3 337.8L373.0 338.2L372.0 341.0L371.9 341.5L372.1 341.9L372.4 342.2L373.1 342.7L373.4 342.8L373.8 342.8L374.1 342.7L374.4 342.5L375.3 341.5L375.5 341.1L375.5 340.6L375.0 338.3ZM382.2 339.2L382.1 338.9L381.9 338.5L381.6 338.3L381.2 338.2L378.4 338.0L378.1 338.0L377.7 338.2L377.5 338.5L377.4 338.8L377.4 339.2L377.6 340.3L377.7 340.7L378.0 340.9L379.8 342.0L380.2 342.2L380.6 342.1L381.0 341.9L381.3 341.5L382.1 339.6ZM383.3 342.3L383.4 342.7L383.7 343.1L384.0 343.3L384.4 343.3L387.1 343.1L387.6 343.0L387.9 342.7L388.7 341.4L388.8 341.0L388.7 340.6L388.5 340.2L388.4 340.0L388.0 339.8L387.7 339.7L385.1 339.6L384.7 339.6L384.4 339.9L384.1 340.2L383.4 341.9ZM392.8 339.8L392.7 340.2L392.7 340.6L392.9 340.9L393.2 341.2L394.6 342.1L395.0 342.2L395.4 342.2L395.7 342.0L396.9 341.2L397.1 340.9L397.3 340.6L397.3 340.3L397.3 339.9L397.2 339.5L397.0 339.2L396.7 339.0L396.3 338.9L394.3 338.9L394.0 338.9L393.7 339.1L393.1 339.5ZM370.1 346.3L370.3 346.5L370.7 346.7L371.0 346.7L371.8 346.7L372.2 346.6L372.5 346.3L372.7 345.9L372.7 345.5L372.6 345.1L372.3 344.8L371.4 344.3L371.0 344.2L370.7 344.2L370.3 344.3L370.0 344.6L369.9 344.9L369.9 345.3L370.0 345.9ZM379.5 347.9L379.7 347.6L379.8 347.3L380.1 345.5L380.1 345.1L379.9 344.7L379.6 344.5L377.6 343.3L377.3 343.1L377.0 343.1L376.6 343.3L376.4 343.5L375.6 344.4L375.4 344.8L375.4 345.3L375.7 346.9L375.8 347.1L376.0 347.4L377.0 348.3L377.3 348.5L377.7 348.5L378.0 348.5L379.2 348.1ZM384.3 345.8L384.0 346.0L383.8 346.3L383.8 346.7L383.8 347.1L384.0 347.4L384.3 347.6L384.7 347.7L385.7 347.8L386.1 347.7L386.4 347.5L386.7 347.2L386.8 346.8L386.8 346.7L386.7 346.3L386.5 345.9L386.1 345.7L385.7 345.6L384.7 345.7ZM389.4 348.5L389.6 348.8L390.0 349.0L390.4 349.1L390.8 349.0L393.6 347.8L393.9 347.5L394.1 347.2L394.1 346.8L394.0 345.1L393.9 344.6L393.6 344.3L391.6 343.1L391.2 342.9L390.8 343.0L390.4 343.1L390.2 343.4L389.7 344.3L389.5 344.7L389.3 348.1ZM397.2 347.4L397.5 347.7L397.8 347.9L398.2 348.1L398.7 348.1L400.3 347.6L400.7 347.4L401.0 347.1L401.0 346.7L401.0 346.4L400.9 344.5L400.8 344.0L400.6 343.7L400.2 343.5L399.3 343.3L398.9 343.3L398.5 343.5L397.4 344.3L397.2 344.6L397.0 344.9L397.0 345.2L397.1 347.0ZM373.4 352.9L373.8 353.1L374.1 353.1L374.5 353.0L374.8 352.8L375.0 352.5L375.6 350.9L375.7 350.5L375.6 350.1L375.4 349.8L374.7 349.2L374.3 349.0L373.9 348.9L372.7 349.0L372.3 349.1L372.0 349.4L371.8 349.7L371.8 350.1L371.9 350.5L373.2 352.7ZM380.5 350.3L380.2 350.1L379.8 350.1L379.5 350.1L378.3 350.6L378.0 350.8L377.8 351.1L377.0 352.9L376.9 353.3L377.0 353.7L377.3 354.1L381.0 357.0L381.4 357.2L381.8 357.2L382.2 357.1L382.6 356.8L382.9 356.5L383.0 356.2L383.0 355.9L383.0 355.6L380.7 350.6ZM384.7 354.9L385.0 355.1L385.5 355.1L385.9 355.0L388.3 353.3L388.6 353.0L388.8 352.6L388.9 351.7L388.8 351.2L388.5 350.9L387.9 350.3L387.6 350.1L387.3 350.1L383.9 349.8L383.5 349.9L383.2 350.1L382.9 350.4L382.8 350.8L382.9 351.2L384.4 354.5ZM394.0 356.6L394.5 356.7L394.9 356.6L395.2 356.3L396.6 354.7L396.8 354.3L396.8 354.0L396.7 351.1L396.6 350.7L396.3 350.4L395.8 350.1L395.5 349.9L395.2 349.9L394.8 350.0L391.5 351.5L391.2 351.7L391.0 351.9L390.9 352.3L390.9 352.7L390.9 353.1L391.1 353.4L393.7 356.4ZM370.2 358.3L370.6 358.4L370.9 358.4L371.3 358.3L371.6 358.1L371.7 357.7L372.0 356.9L372.0 356.4L371.9 356.0L371.6 355.7L371.2 355.6L370.2 355.4L369.8 355.5L369.5 355.6L369.2 355.9L369.1 356.3L369.1 356.7L369.2 357.0L370.0 358.0ZM376.1 355.8L375.7 355.8L375.3 355.9L375.0 356.1L374.9 356.5L374.2 358.5L374.2 359.0L374.3 359.4L374.6 359.7L376.3 360.7L376.7 360.8L377.1 360.8L379.1 360.1L379.5 359.9L379.7 359.6L379.8 359.1L379.7 358.7L379.4 358.4L376.4 356.0ZM382.3 360.5L382.4 360.8L383.9 363.5L384.1 363.8L384.5 364.0L384.9 364.0L385.1 364.0L385.4 363.9L385.7 363.7L387.0 362.1L387.2 361.8L387.3 361.5L387.2 361.2L387.1 360.9L385.2 358.5L384.9 358.2L384.5 358.1L384.1 358.1L383.8 358.3L382.8 359.0L382.5 359.3L382.4 359.6L382.3 360.1ZM389.3 359.8L389.7 359.9L390.0 359.9L391.2 359.7L391.6 359.6L391.9 359.3L392.0 358.9L392.0 358.4L391.8 358.1L389.9 356.0L389.6 355.7L389.3 355.6L388.9 355.7L388.6 355.8L387.8 356.3L387.5 356.6L387.4 357.0L387.4 357.4L387.6 357.8L389.0 359.6ZM397.6 358.4L397.6 358.7L397.7 359.1L398.0 359.4L398.3 359.6L399.9 360.0L400.2 360.0L400.6 359.9L400.9 359.7L401.1 359.3L401.3 358.7L401.3 358.3L401.2 358.0L400.9 357.7L400.6 357.5L399.4 357.1L399.0 357.0L398.6 357.2L398.3 357.4L397.8 358.0ZM372.1 365.5L372.3 365.9L372.6 366.1L373.0 366.2L373.3 366.2L374.5 365.9L374.8 365.7L375.1 365.3L375.2 364.9L375.2 363.5L375.2 363.1L375.0 362.8L374.7 362.6L373.9 362.1L373.5 362.0L373.1 362.0L372.7 362.1L372.5 362.4L372.4 362.8L372.1 365.1ZM380.8 362.4L380.5 362.2L380.2 362.1L379.9 362.2L378.3 362.7L377.9 362.9L377.7 363.2L377.6 363.6L377.6 365.5L377.6 365.8L377.8 366.1L378.1 366.4L379.9 367.4L380.2 367.5L380.6 367.5L380.9 367.4L381.2 367.1L382.1 365.6L382.3 365.3L382.3 364.9L382.1 364.6L381.0 362.6ZM392.6 363.1L392.5 362.7L392.2 362.4L391.8 362.3L391.4 362.3L389.8 362.6L389.5 362.7L389.3 362.9L388.3 364.0L388.1 364.4L388.1 364.7L388.2 365.1L388.4 365.4L389.7 366.5L390.0 366.7L390.4 366.8L390.7 366.7L391.5 366.4L391.8 366.1L392.0 365.7L392.6 363.5ZM373.4 373.9L373.8 373.8L374.1 373.5L374.3 373.1L374.3 372.7L374.2 372.3L372.2 369.3L371.9 369.0L371.5 368.8L371.1 368.8L370.8 368.8L370.4 369.0L370.3 369.1L370.0 369.4L369.9 369.8L369.9 370.5L369.9 370.8L370.5 372.6L370.7 373.0L371.1 373.2L373.0 373.8ZM380.0 370.0L379.7 369.6L376.7 367.9L376.4 367.8L376.0 367.8L375.4 368.0L375.1 368.1L374.8 368.4L374.7 368.8L374.7 369.1L374.8 369.5L376.5 372.1L376.7 372.3L377.0 372.5L377.4 372.5L377.7 372.5L379.6 371.6L380.0 371.4L380.2 371.0L380.2 370.6L380.2 370.4ZM382.5 369.7L382.5 370.0L382.6 370.8L382.7 371.2L382.9 371.5L384.3 372.7L384.6 372.9L385.0 372.9L385.4 372.8L387.3 371.8L387.6 371.5L387.8 371.2L388.2 369.5L388.3 369.1L388.2 368.7L387.9 368.5L385.9 366.6L385.5 366.4L385.1 366.4L385.0 366.4L384.5 366.5L384.2 366.8L382.6 369.4ZM392.3 372.3L392.7 372.2L393.1 371.9L393.2 371.5L393.5 370.0L393.5 369.7L393.4 369.4L393.2 369.1L393.1 369.1L392.8 368.9L392.4 368.8L392.0 368.9L391.5 369.1L391.1 369.4L390.9 369.8L390.7 370.8L390.7 371.2L390.8 371.5L391.0 371.8L391.3 372.0L391.9 372.2ZM398.4 370.1L398.0 369.9L397.6 369.8L396.6 369.9L396.2 370.0L395.9 370.3L395.7 370.7L395.4 372.4L395.4 372.8L395.6 373.2L395.9 373.5L396.3 373.6L398.4 373.6L398.8 373.5L399.1 373.3L399.3 373.0L399.4 372.6L399.3 372.2L398.6 370.4ZM369.4 377.1L369.4 377.5L369.5 377.8L369.7 378.1L370.0 378.3L372.4 379.1L372.8 379.1L373.2 379.0L373.5 378.8L373.7 378.4L373.7 378.0L373.6 377.4L373.5 377.0L373.3 376.7L373.0 376.5L371.0 375.9L370.6 375.9L370.2 376.0L369.9 376.3L369.5 376.8ZM381.3 373.2L380.9 373.1L380.5 373.2L377.3 374.7L377.0 374.9L376.2 375.6L376.0 376.0L375.9 376.5L376.1 377.8L376.2 378.2L376.4 378.5L376.7 378.6L381.1 380.3L381.5 380.4L381.9 380.3L382.3 380.0L383.6 378.3L383.8 378.0L383.8 377.6L383.7 375.7L383.6 375.3L383.4 375.0L381.6 373.4ZM386.1 376.9L386.4 377.2L386.8 377.4L391.0 378.2L391.4 378.2L391.7 378.1L392.0 377.8L392.1 377.4L392.4 376.1L392.4 375.7L392.3 375.4L392.1 375.1L391.8 375.0L389.4 374.1L389.0 374.0L388.6 374.1L386.4 375.2L386.1 375.5L386.0 375.8L385.9 376.2L385.9 376.5ZM395.3 375.5L395.0 375.7L394.8 376.0L394.6 376.3L394.1 379.3L394.1 379.7L394.2 380.0L394.7 380.9L395.0 381.2L395.3 381.3L395.7 381.4L396.1 381.3L398.7 379.8L399.0 379.6L399.2 379.2L399.3 378.9L399.1 376.5L399.0 376.1L398.8 375.8L398.5 375.6L398.1 375.5L395.6 375.5ZM374.6 381.7L374.6 381.8L374.6 382.1L374.7 382.4L376.1 385.2L376.4 385.5L376.8 385.7L377.2 385.7L377.5 385.6L377.8 385.3L379.4 383.0L379.5 382.7L379.5 382.4L379.4 382.0L379.2 381.7L378.9 381.5L376.2 380.5L375.8 380.5L375.5 380.6L375.1 380.8L374.8 381.2ZM390.0 382.9L390.3 383.0L390.6 383.1L391.5 383.0L391.9 382.8L392.2 382.6L392.4 382.2L392.4 381.8L392.2 381.4L392.0 381.1L391.6 381.0L390.5 380.8L390.1 380.8L389.7 380.9L389.4 381.2L389.3 381.6L389.3 382.0L389.5 382.3L389.7 382.7ZM397.2 383.7L397.0 384.1L397.0 384.5L397.2 384.9L397.5 385.2L397.9 385.3L400.8 385.7L401.2 385.7L401.5 385.5L401.8 385.2L402.0 384.7L402.0 382.7L401.9 382.7L400.8 382.1L400.4 382.0L399.9 382.1L397.5 383.4ZM373.0 389.8L373.3 389.7L373.6 389.5L374.6 388.3L374.8 387.9L374.8 387.5L374.7 387.2L373.5 384.8L373.2 384.5L372.9 384.3L372.5 384.3L372.1 384.4L370.8 385.1L370.5 385.4L370.3 385.7L370.3 386.1L370.4 386.5L371.9 389.3L372.2 389.6L372.6 389.8L372.6 389.8ZM382.6 383.4L382.3 383.2L381.9 383.2L381.5 383.3L381.2 383.6L379.4 386.2L379.2 386.6L379.3 387.0L379.5 387.4L379.8 387.7L382.4 388.9L382.9 389.0L384.1 388.9L384.5 388.8L384.8 388.5L385.0 388.2L385.0 387.8L384.9 387.4L382.9 383.7ZM391.3 390.1L391.1 390.4L391.1 390.8L391.3 391.1L391.5 391.4L393.2 392.6L393.6 392.8L394.0 392.8L394.4 392.7L394.7 392.4L394.8 392.0L394.9 391.4L395.0 391.2L394.9 389.1L394.8 388.8L394.6 388.5L394.3 388.3L393.9 388.2L393.6 388.2L393.3 388.4L391.5 389.8ZM376.1 393.8L376.4 394.0L377.6 394.5L378.0 394.6L378.3 394.5L378.7 394.3L378.9 394.0L380.3 391.3L380.5 390.9L380.4 390.5L380.2 390.1L379.9 389.9L378.0 389.0L377.5 388.9L377.1 389.0L376.8 389.3L375.4 391.0L375.2 391.3L375.2 391.6L375.3 392.0L375.9 393.5ZM384.9 391.8L384.8 391.5L384.5 391.2L384.2 391.0L383.9 391.0L383.8 391.0L383.5 391.1L383.2 391.3L383.0 391.5L381.5 394.3L381.4 394.7L381.5 395.1L381.7 395.5L382.1 395.7L382.8 395.9L383.2 396.0L383.5 395.9L383.8 395.7L384.1 395.3L384.4 394.8L384.9 392.2Z" fill="#e7e4d1" stroke="#2c2436" stroke-width="0.7"/><path d="M367.4 464.0 Q385 457 402.3 464.0 L402.3 513.2 L449.7 519.8 Q451 536 445.5 549.7 L389.9 544.7 L344.0 578.1 Q330 567 328.2 549.9 L367.4 519.8 Z" fill="#4c4260" stroke="#2b2433" stroke-width="1.4"/><path d="M371.7 468.3L368.9 468.7M368.9 468.6L368.9 468.7M383.6 462.8L383.4 462.1M383.6 462.8L387.9 463.6M387.9 463.6L389.6 462.3M378.5 464.5L383.6 462.8M386.4 468.7L387.5 469.8M386.4 468.7L387.9 463.6M395.6 469.5L395.5 470.2M387.5 469.8L395.5 470.2M383.6 469.5L378.0 468.1M377.3 471.9L378.6 474.9M378.6 474.9L383.5 476.0M378.5 464.5L378.0 468.1M370.6 476.2L368.9 474.5M370.6 476.2L377.3 471.9M371.6 479.4L370.6 476.2M371.6 479.4L374.7 481.2M376.4 480.2L378.6 474.9M368.9 480.9L371.6 479.4M330.2 551.7L330.4 552.2M341.3 573.7L343.6 573.0M345.7 569.3L343.3 567.6M343.3 567.6L337.8 569.8M335.7 563.8L335.2 566.1M447.4 536.0L447.8 534.9M447.4 536.0L447.6 536.4M443.7 543.7L446.8 540.8M352.4 547.8L355.2 553.3M355.2 553.3L361.2 548.9M351.5 556.9L355.2 553.4M347.7 555.7L347.6 550.8M347.6 550.8L351.9 547.8M380.8 538.7L381.7 534.9M386.0 522.6L387.2 526.6M380.1 522.3L381.9 529.3M387.2 526.6L383.1 530.2M374.3 523.5L380.0 522.2M374.3 523.5L373.2 526.5M373.2 526.5L374.4 529.3M383.4 533.5L381.7 534.9M383.4 533.5L383.5 532.9M374.4 529.3L373.7 533.9M397.1 530.0L397.5 532.3M397.1 530.0L390.8 527.5M387.2 526.6L390.7 527.5M381.8 542.3L388.1 538.2M388.1 538.2L390.1 538.8M375.1 538.6L375.0 542.7M381.8 542.3L381.7 543.2M381.7 543.2L380.4 544.6M380.4 544.6L375.0 542.7M407.5 544.6L409.3 540.9M407.5 544.6L415.4 545.2M409.3 540.9L416.2 541.1M407.0 536.2L403.8 532.4M399.2 539.0L400.9 539.6M374.7 481.2L375.1 485.4M375.1 485.4L375.0 485.5M375.0 485.5L370.6 488.0M368.9 487.5L370.6 488.0M363.8 524.4L364.6 525.2M380.0 522.2L380.7 516.6M380.7 516.6L374.3 516.7M374.3 511.7L373.3 514.7M376.4 505.9L377.3 509.6M376.9 510.7L374.3 511.7M370.2 504.6L369.2 505.7M368.9 519.9L373.2 521.7M380.7 516.6L381.6 515.3M381.6 515.3L376.9 510.7M395.8 471.2L400.8 472.9M400.8 474.0L397.6 481.2M397.6 481.2L400.8 480.7M415.5 545.4L415.5 545.5M375.1 485.4L382.6 485.0M448.4 522.7L447.0 522.7M447.0 522.7L446.1 528.1M446.1 528.1L442.5 528.7M337.0 556.9L339.9 555.7M339.9 555.7L343.7 558.0M343.7 558.0L344.1 560.2M330.4 552.2L332.3 552.6M343.3 567.6L342.1 564.1M345.7 569.3L346.9 569.2M349.5 563.0L346.9 569.2M352.5 561.9L349.5 563.0M347.7 555.7L343.7 558.0M361.2 548.9L363.5 553.1M361.4 556.0L363.5 553.1M352.5 561.9L356.0 563.6M350.2 571.2L346.9 569.2M355.0 568.2L356.0 563.6M361.4 556.0L365.1 560.9M363.5 553.1L367.7 552.6M369.4 555.2L367.7 552.6M369.4 555.2L367.2 559.3M353.6 532.9L355.0 534.6M353.6 532.9L352.9 532.8M355.0 534.6L352.8 539.1M352.8 539.1L347.6 539.5M354.0 532.0L353.6 532.9M347.6 539.6L347.6 539.5M347.6 539.6L347.1 542.8M356.0 543.0L352.8 539.1M351.9 547.8L347.1 542.8M342.8 545.2L347.6 550.8M342.8 545.2L340.2 545.6M336.9 545.1L339.0 546.3M332.3 552.6L339.0 547.2M368.4 550.9L365.5 545.7M368.4 550.9L372.4 548.5M372.4 548.5L372.2 544.3M368.7 542.6L365.5 545.7M361.2 548.0L363.5 545.9M363.5 545.9L365.5 545.7M380.8 549.5L380.7 549.4M377.3 551.6L380.4 549.2M380.7 549.4L380.4 549.2M372.0 555.9L369.4 555.2M380.4 544.6L380.4 549.2M375.0 542.7L372.2 544.3M380.9 549.4L380.7 549.4M397.3 543.9L397.4 540.2M397.4 540.2L391.0 540.3M391.0 540.3L390.3 543.2M398.3 533.2L397.5 532.3M390.1 538.8L391.0 540.3M399.2 539.0L397.4 540.2M402.0 544.3L403.5 543.2M405.8 544.6L403.5 543.2M400.9 539.6L403.5 543.2M415.4 545.2L415.5 545.4M370.2 504.6L371.3 500.8M371.3 500.8L368.9 499.1M381.6 515.3L385.8 513.8M387.7 520.1L387.7 515.7M396.9 521.3L398.0 528.3M398.0 528.3L397.1 530.0M393.0 522.6L396.5 520.9M387.7 515.7L394.3 515.5M396.5 520.9L396.4 518.5M396.4 518.5L394.3 515.5M384.1 507.1L386.0 512.1M371.2 493.2L374.6 495.3M371.3 500.8L375.3 497.7M375.3 497.7L374.6 495.3M397.6 481.2L397.6 481.3M408.5 536.5L410.0 535.2M416.2 541.1L417.9 539.1M417.9 539.1L410.0 535.2M400.8 516.3L406.4 522.8M406.4 522.8L406.4 522.8M419.6 538.3L417.9 539.1M410.0 535.2L411.4 531.8M411.4 531.8L417.3 532.5M419.5 535.1L417.3 532.5M422.2 539.8L422.8 545.7M422.2 539.8L419.6 538.3M422.8 545.7L422.2 546.1M382.6 485.0L385.5 487.3M377.6 490.2L383.3 490.9M383.3 490.9L384.3 489.7M389.3 483.2L384.4 478.2M393.4 476.4L394.0 479.6M388.1 474.6L384.4 476.7M384.4 476.7L384.4 478.2M381.5 480.9L384.4 478.2M388.4 485.8L385.5 487.3M397.6 481.3L394.0 479.6M398.4 487.1L397.3 488.3M387.5 469.8L388.1 474.6M383.5 476.0L384.4 476.7M438.9 546.9L434.7 543.4M433.2 544.3L432.8 547.1M434.7 543.4L433.2 544.3M422.2 539.8L427.3 539.0M422.8 545.7L423.6 546.2M350.2 571.2L350.3 571.7M373.1 534.7L370.6 535.4M368.7 542.6L368.2 541.1M370.6 535.4L368.2 541.1M397.5 492.3L397.3 488.3M397.5 492.3L400.8 492.7M394.3 515.5L396.0 510.1M386.0 512.1L392.6 508.1M397.9 497.8L392.9 500.1M397.2 493.0L391.8 493.4M392.9 500.1L392.3 500.1M392.3 500.1L390.7 496.8M391.2 494.4L391.8 493.4M383.3 490.9L383.6 495.4M384.3 489.7L391.2 494.4M383.6 495.4L390.7 496.8M436.6 539.4L431.7 534.5M429.0 535.9L431.7 534.5M440.8 535.2L438.2 533.5M417.9 525.8L419.3 525.5M424.2 530.6L424.8 527.3M419.3 525.5L424.8 527.3M421.5 517.4L415.5 518.8M421.6 517.4L421.7 517.5M415.5 518.8L415.3 520.4M417.9 525.8L417.7 525.7M417.7 525.7L415.3 520.4M438.2 533.5L435.3 527.4M431.9 534.2L432.6 527.9M438.6 525.7L439.2 522.5M358.5 535.1L360.8 539.4M368.2 541.1L362.7 539.0M360.8 539.4L362.7 539.0M397.9 497.8L400.1 498.3M376.3 498.2L382.9 496.4M378.6 503.1L384.3 504.6M384.3 504.6L385.0 503.9M375.3 497.7L376.3 498.2M383.6 495.4L382.9 496.4M390.6 502.5L385.0 503.9M392.6 508.1L390.6 502.5M410.8 530.2L415.3 526.2M415.3 526.2L410.6 523.3M406.5 523.3L406.2 525.7M406.6 526.6L406.2 525.7M411.4 531.8L410.8 530.2M403.8 532.4L406.6 526.6M415.3 520.4L410.6 523.3M406.4 522.8L406.5 523.3M406.4 522.8L408.7 516.5M398.0 528.3L406.2 525.7M432.5 527.8L426.5 526.2M426.5 525.3L426.5 526.2M426.5 525.3L430.3 518.7M430.3 518.7L432.4 522.8M432.6 527.9L432.5 527.8M424.8 527.3L426.5 526.2M423.1 517.6L422.9 517.7M430.3 518.6L430.3 518.7M368.8 534.5L368.1 527.1M365.9 534.0L362.2 530.2M364.7 526.4L362.2 529.3M362.2 529.3L362.2 530.2M370.6 535.4L368.8 534.5M364.6 525.2L364.7 526.4M400.8 516.3L402.0 514.7M400.8 512.4L399.3 510.8M396.0 510.1L396.7 509.8M399.3 510.8L396.7 509.8M392.9 500.1L398.8 505.6M396.7 509.8L398.8 505.6M400.1 498.3L398.8 505.5M398.8 505.6L398.8 505.5M412.8 516.2L412.8 516.2M398.8 505.5L400.8 505.3" stroke="#5d5170" stroke-width="0.9" fill="none"/><path d="M376.0 463.4L375.6 463.2L375.2 463.2L374.8 463.3L374.5 463.6L374.3 464.0L374.0 465.7L374.0 466.1L374.2 466.5L374.5 466.7L374.9 466.9L375.5 466.9L375.9 466.9L376.2 466.7L376.4 466.4L376.6 466.1L376.7 465.1L376.6 464.5L376.2 463.7ZM379.3 466.8L379.4 467.1L379.7 467.4L380.0 467.6L383.3 468.4L383.8 468.3L385.1 468.0L385.4 467.9L385.6 467.6L385.8 467.3L386.3 465.4L386.4 465.0L386.2 464.6L385.9 464.3L385.6 464.2L383.9 463.9L383.4 463.9L380.0 465.1L379.7 465.3L379.5 465.6L379.3 465.9L379.3 466.4ZM388.1 467.7L388.2 468.1L388.4 468.4L388.7 468.6L389.0 468.6L391.2 468.7L391.6 468.7L391.9 468.5L392.1 468.2L392.2 467.8L392.2 467.4L392.0 467.1L390.4 465.2L390.1 464.9L389.8 464.8L389.4 464.8L389.1 464.9L388.8 465.2L388.7 465.5L388.1 467.4ZM393.7 462.8L393.4 463.1L393.3 463.5L393.3 463.9L393.5 464.2L394.8 465.8L395.2 466.1L395.6 466.2L396.0 466.1L396.4 465.8L397.3 464.6L397.5 464.3L397.6 463.8L397.5 463.6L395.1 462.9L393.9 462.7ZM375.2 471.5L375.4 471.1L375.4 470.7L375.2 470.3L374.9 470.1L374.5 469.9L371.8 469.7L371.6 469.7L370.6 469.8L370.2 470.0L369.9 470.2L369.8 470.5L369.2 472.1L369.2 472.5L369.3 472.8L369.5 473.1L370.2 473.9L370.6 474.1L371.0 474.1L371.5 474.0L374.9 471.8ZM379.0 469.3L378.7 469.4L378.4 469.6L378.2 469.9L378.2 470.3L378.1 471.5L378.2 471.9L379.0 473.7L379.3 474.0L379.7 474.2L381.4 474.6L381.8 474.7L382.1 474.5L382.4 474.3L382.6 474.0L382.7 473.7L382.7 470.9L382.6 470.5L382.3 470.1L381.9 469.9L379.4 469.3ZM384.4 474.4L384.7 474.7L385.0 475.0L385.5 475.0L385.9 474.9L386.6 474.4L386.9 474.2L387.1 473.8L387.1 473.4L386.7 470.7L386.6 470.3L386.3 470.0L385.9 469.8L385.5 469.8L385.2 469.9L384.8 470.1L384.5 470.5L384.4 470.9L384.4 474.0ZM388.9 473.6L389.2 473.9L389.5 474.1L392.1 475.0L392.4 475.1L392.8 475.0L393.1 474.8L393.3 474.5L394.3 472.4L394.4 472.0L394.3 471.6L394.1 471.3L393.8 471.0L393.4 471.0L389.7 470.8L389.2 470.9L388.9 471.1L388.7 471.5L388.6 471.9L388.8 473.3ZM374.4 479.4L374.9 479.4L375.2 479.1L375.5 478.8L376.6 476.1L376.7 475.7L376.6 475.2L376.4 474.9L376.0 474.7L375.6 474.7L375.2 474.8L372.8 476.3L372.5 476.7L372.4 477.1L372.4 477.5L372.6 478.1L372.8 478.5L373.1 478.7L374.0 479.3ZM382.1 478.3L382.2 478.0L382.2 477.6L382.0 477.3L381.8 477.1L381.5 476.9L380.2 476.6L379.9 476.6L379.6 476.7L379.3 476.9L379.1 477.2L378.8 477.8L378.8 478.2L378.8 478.6L379.0 478.9L379.3 479.1L379.6 479.2L380.6 479.4L381.0 479.3L381.4 479.1L381.9 478.6ZM385.8 477.0L385.6 477.3L385.6 477.7L385.6 478.1L385.8 478.4L388.8 481.4L389.1 481.6L389.4 481.7L389.8 481.6L390.1 481.4L392.5 479.6L392.8 479.3L392.9 479.0L392.9 478.6L392.7 477.7L392.6 477.3L392.4 477.1L392.1 476.9L388.6 475.7L388.2 475.6L387.8 475.8L386.0 476.8ZM395.0 478.9L395.3 479.1L396.2 479.5L396.6 479.6L397.0 479.6L397.3 479.4L397.5 479.0L399.5 474.6L399.6 474.2L399.5 473.8L399.2 473.5L398.9 473.3L397.1 472.7L396.8 472.7L396.4 472.7L396.1 472.9L395.9 473.2L394.5 476.3L394.5 476.6L394.5 476.9L394.8 478.4ZM370.3 485.8L370.7 485.6L372.4 484.7L372.7 484.4L372.9 484.1L372.9 483.7L372.9 483.0L372.7 482.5L372.4 482.2L372.1 482.0L371.8 481.9L371.4 481.9L371.1 482.0L369.4 482.9L369.0 483.2L368.9 483.6L368.9 484.1L369.1 485.0L369.3 485.3L369.5 485.6L369.9 485.7L370.0 485.7ZM380.8 482.0L380.5 481.7L380.1 481.6L376.9 481.1L376.6 481.1L376.2 481.3L376.2 481.4L375.9 481.6L375.8 481.9L375.7 482.3L375.8 483.5L375.9 483.8L376.2 484.1L376.5 484.3L376.9 484.4L380.2 484.2L380.6 484.1L380.9 483.9L381.1 483.6L381.2 483.3L381.1 482.9L381.0 482.3ZM384.7 480.2L384.4 480.2L384.0 480.2L383.7 480.4L383.2 480.8L383.0 481.1L382.9 481.5L382.9 481.8L383.5 484.0L383.6 484.3L383.8 484.5L385.1 485.6L385.5 485.7L385.9 485.8L386.2 485.7L387.1 485.2L387.4 485.0L387.6 484.6L387.8 484.1L387.9 483.7L387.8 483.3L387.6 483.0L385.1 480.5ZM394.3 480.8L394.0 480.8L393.6 481.0L390.3 483.5L389.9 484.0L389.6 484.9L389.6 485.3L389.7 485.7L389.9 486.0L391.7 487.5L392.1 487.7L392.4 487.8L396.5 487.5L396.9 487.3L397.2 487.1L397.4 486.7L397.4 486.3L396.8 482.4L396.7 482.1L396.5 481.8L396.3 481.6L394.7 480.9ZM373.8 493.7L374.2 493.7L374.6 493.6L374.8 493.3L376.4 490.7L376.5 490.4L376.5 490.0L376.4 489.7L375.2 487.6L374.9 487.3L374.6 487.1L374.2 487.1L373.8 487.2L372.1 488.1L371.8 488.4L371.6 488.7L371.6 489.1L371.9 492.2L372.1 492.7L372.4 493.0L373.5 493.6ZM377.7 486.2L377.3 486.5L377.2 486.8L377.1 487.2L377.2 487.6L378.0 488.9L378.3 489.3L378.7 489.4L382.4 489.9L382.7 489.9L383.0 489.8L383.3 489.5L383.5 489.3L383.6 489.1L384.0 488.3L384.1 487.8L384.0 487.4L383.7 487.1L382.6 486.1L382.3 486.0L381.9 485.9L378.0 486.1ZM386.4 488.3L386.2 488.7L386.2 489.1L386.3 489.5L386.6 489.8L389.0 491.4L389.3 491.5L389.7 491.6L390.0 491.5L390.3 491.2L390.5 490.9L390.5 490.6L390.5 489.7L390.4 489.3L390.2 489.0L388.7 487.7L388.4 487.5L388.0 487.5L387.6 487.6L386.7 488.1ZM393.1 491.4L393.4 491.7L393.7 491.9L394.1 492.0L395.3 491.9L395.7 491.8L396.0 491.5L396.2 491.2L396.2 490.8L396.2 490.6L396.1 490.2L395.9 489.9L395.5 489.7L395.1 489.7L393.9 489.8L393.6 489.9L393.3 490.1L393.1 490.4L393.0 490.8L393.0 491.0ZM369.0 495.7L368.8 495.9L368.7 496.3L368.7 496.6L368.8 497.0L369.1 497.2L370.6 498.4L371.0 498.5L371.4 498.5L371.8 498.4L372.8 497.6L373.0 497.3L373.1 497.0L373.1 496.6L373.0 496.2L372.7 496.0L371.4 495.2L371.0 495.1L370.6 495.1L369.4 495.5ZM376.2 496.4L376.5 496.6L376.9 496.7L377.2 496.7L381.6 495.6L381.9 495.4L382.2 495.2L382.3 494.9L382.3 494.5L382.2 492.8L382.2 492.5L382.0 492.2L381.7 492.0L381.4 491.9L378.9 491.6L378.5 491.6L378.2 491.8L377.9 492.0L376.1 495.1L376.0 495.5L376.0 495.9L376.0 496.0ZM392.8 494.7L392.5 494.9L392.3 495.3L392.1 496.3L392.1 496.6L392.2 496.9L392.6 497.8L392.8 498.1L393.2 498.3L393.5 498.4L393.9 498.3L395.9 497.4L396.2 497.2L396.4 496.8L396.4 496.4L396.3 495.2L396.1 494.9L395.9 494.6L395.6 494.4L395.2 494.4L393.2 494.5ZM375.7 500.2L375.4 500.0L375.0 500.0L374.7 500.0L374.4 500.2L372.7 501.4L372.5 501.6L372.4 501.9L372.2 502.5L372.2 502.9L372.3 503.3L372.6 503.6L373.0 503.8L375.2 504.2L375.6 504.2L375.9 504.1L376.2 503.8L376.6 503.4L376.7 503.1L376.8 502.7L376.7 502.4L375.9 500.5ZM382.7 503.2L383.1 503.0L383.4 502.7L383.5 502.3L383.5 501.9L382.6 498.5L382.4 498.1L382.1 497.9L381.7 497.7L381.3 497.8L378.7 498.5L378.3 498.7L378.1 499.0L378.0 499.4L378.0 499.8L379.0 501.9L379.3 502.3L379.7 502.5L382.3 503.2ZM385.2 496.9L384.9 497.1L384.6 497.4L384.5 497.8L384.5 498.2L385.5 501.7L385.6 502.0L385.9 502.3L386.3 502.4L386.7 502.4L389.6 501.6L389.9 501.5L390.2 501.3L390.7 500.5L390.9 500.2L390.9 499.8L390.8 499.5L390.2 498.2L389.9 497.8L389.5 497.6L385.6 496.9ZM370.9 505.8L370.5 506.0L370.2 506.4L370.1 506.8L370.1 506.9L370.2 507.4L370.5 507.8L374.0 510.3L374.3 510.4L374.6 510.5L374.9 510.4L375.5 510.2L375.8 510.0L376.0 509.7L376.1 509.4L376.1 509.0L375.7 507.3L375.6 507.0L375.3 506.7L375.0 506.6L371.3 505.8ZM381.7 506.7L382.0 506.3L382.0 505.9L381.9 505.5L381.6 505.2L381.3 505.0L379.6 504.6L379.2 504.5L378.9 504.7L378.6 504.9L377.9 505.8L377.7 506.2L377.7 506.6L377.8 507.0L378.0 507.4L378.3 507.7L378.7 507.8L379.1 507.7L381.4 506.9ZM385.8 505.0L385.5 505.3L385.4 505.7L385.3 506.7L385.4 507.1L386.1 509.3L386.4 509.6L386.8 509.9L387.2 509.9L387.6 509.8L390.5 508.0L390.7 507.8L390.9 507.5L391.0 507.2L390.9 506.8L390.1 504.7L390.0 504.4L389.7 504.2L389.3 504.1L389.0 504.1L386.2 504.8ZM393.9 502.9L393.5 502.8L393.1 502.9L392.8 503.1L392.6 503.4L392.5 503.8L392.6 504.2L393.6 506.9L393.7 507.2L394.0 507.4L395.0 508.0L395.4 508.1L395.8 508.1L396.1 507.9L396.4 507.5L396.9 506.5L397.0 506.1L396.9 505.7L396.6 505.4L394.2 503.1ZM374.6 514.6L374.7 514.9L374.8 515.0L375.0 515.3L375.3 515.5L375.7 515.6L377.8 515.5L378.2 515.4L378.5 515.2L378.7 514.9L378.8 514.5L378.7 514.1L378.5 513.8L377.1 512.4L376.7 512.2L376.4 512.2L376.0 512.2L375.6 512.4L375.3 512.6L375.0 513.0L374.7 514.2ZM379.0 510.0L378.8 510.4L378.7 510.8L378.8 511.2L379.0 511.5L381.4 513.8L381.7 514.0L382.0 514.1L382.4 514.0L384.3 513.4L384.6 513.2L384.9 512.9L385.0 512.5L385.0 512.5L384.9 512.0L383.9 509.2L383.7 508.9L383.4 508.6L383.0 508.6L382.6 508.6L379.4 509.8ZM387.2 512.6L387.0 512.9L387.0 513.3L387.0 513.7L387.3 513.9L387.7 514.4L388.1 514.6L388.4 514.7L392.9 514.6L393.3 514.5L393.6 514.2L393.8 513.9L394.6 511.3L394.7 510.9L394.5 510.5L394.2 510.1L393.1 509.5L392.8 509.4L392.5 509.4L392.1 509.5L387.4 512.4ZM398.3 512.3L397.8 512.2L397.4 512.3L397.1 512.6L396.9 512.9L396.3 514.7L396.3 515.1L396.4 515.5L396.6 515.8L397.0 516.0L397.4 516.0L397.7 515.9L399.3 515.2L399.6 514.9L399.8 514.6L399.9 514.3L399.8 513.9L399.6 513.6L398.6 512.5ZM369.9 516.9L369.6 517.1L369.4 517.4L369.4 517.8L369.4 518.2L369.7 518.5L370.0 518.7L371.0 519.1L371.4 519.1L371.8 519.0L372.1 518.7L372.3 518.4L372.5 517.8L372.5 517.4L372.3 517.0L372.1 516.8L371.7 516.6L371.3 516.6L370.2 516.7ZM374.5 521.2L374.7 521.6L375.0 521.9L375.4 522.0L375.8 522.0L378.3 521.4L378.6 521.3L378.9 521.0L379.0 520.6L379.2 518.9L379.2 518.5L379.0 518.1L378.6 517.9L378.2 517.8L376.0 517.8L375.6 517.9L375.3 518.2L375.1 518.6L374.6 520.8ZM381.5 520.5L381.7 520.9L382.0 521.1L382.4 521.2L384.8 521.4L385.1 521.4L385.5 521.2L385.7 521.0L386.3 520.0L386.5 519.8L386.5 519.5L386.5 516.6L386.4 516.2L386.2 515.9L385.9 515.6L385.6 515.4L385.2 515.3L384.9 515.4L382.6 516.1L382.4 516.3L382.1 516.5L381.9 516.8L381.8 517.3L381.4 520.1ZM393.6 516.9L393.1 516.8L389.9 516.9L389.5 517.0L389.2 517.2L389.0 517.5L388.9 517.9L389.0 518.7L389.0 519.1L389.2 519.4L389.5 519.6L392.6 521.0L393.0 521.1L393.4 521.0L394.6 520.4L394.9 520.1L395.1 519.8L395.2 519.4L395.2 519.2L395.1 518.9L395.0 518.7L394.0 517.2ZM398.3 518.9L398.1 519.3L398.1 519.7L398.2 520.1L398.5 520.4L398.9 520.5L401.0 520.8L401.4 520.8L401.7 520.7L402.0 520.3L402.1 520.0L402.1 519.6L401.9 519.2L401.1 518.3L400.7 518.0L400.3 517.9L399.9 518.0L398.6 518.6ZM403.5 515.4L403.2 515.7L403.0 516.1L403.0 516.5L403.2 516.9L404.8 518.7L405.1 518.9L405.5 519.0L405.9 519.0L406.2 518.7L406.5 518.4L406.9 517.2L407.0 516.7L406.8 516.3L406.3 515.5L406.0 515.2L405.7 515.1L405.3 515.1L403.9 515.3ZM408.1 521.3L408.1 521.7L408.4 522.0L408.7 522.2L409.1 522.3L410.1 522.3L410.6 522.1L413.7 520.2L414.0 519.9L414.1 519.6L414.2 519.3L414.1 518.9L413.9 518.6L412.8 517.6L412.4 517.3L412.0 517.3L410.0 517.4L409.7 517.5L409.4 517.8L409.2 518.1L408.1 520.9ZM366.8 524.4L366.8 524.8L366.9 525.1L367.2 525.3L367.6 525.5L368.0 525.6L368.3 525.6L371.5 525.2L371.9 525.1L372.2 524.9L372.3 524.6L372.5 524.1L372.6 523.7L372.4 523.3L372.3 523.1L372.1 522.9L371.8 522.7L369.2 521.6L368.8 521.6L368.5 521.6L368.2 521.8L368.0 522.1L366.9 524.0ZM379.5 523.8L379.2 523.6L378.9 523.4L378.5 523.4L375.5 524.1L375.1 524.2L374.9 524.5L374.7 524.8L374.3 526.1L374.2 526.5L374.3 526.8L374.7 527.8L374.9 528.1L375.2 528.3L375.6 528.4L379.5 528.5L379.9 528.4L380.2 528.2L380.4 527.9L380.5 527.6L380.5 527.2L379.7 524.2ZM382.7 527.7L383.0 528.0L383.4 528.1L383.8 528.1L384.1 527.9L385.5 526.7L385.8 526.3L385.9 526.0L385.8 525.6L385.4 524.3L385.2 524.0L384.9 523.7L384.5 523.6L382.8 523.5L382.5 523.5L382.1 523.7L381.9 524.0L381.8 524.4L381.8 524.8L382.5 527.4ZM389.7 526.0L390.1 526.0L390.4 525.8L390.6 525.5L391.2 524.0L391.3 523.6L391.2 523.2L391.0 522.9L390.7 522.7L388.8 521.8L388.5 521.7L388.1 521.8L387.8 521.9L387.6 522.2L387.4 522.4L387.3 522.8L387.3 523.3L387.9 525.2L388.1 525.5L388.3 525.7L388.6 525.8L389.4 526.0ZM396.1 523.2L395.9 522.9L395.5 522.8L395.2 522.7L394.8 522.8L394.1 523.2L393.8 523.4L393.6 523.6L392.6 526.0L392.5 526.4L392.6 526.7L392.8 527.1L393.1 527.3L395.5 528.3L395.9 528.3L396.3 528.2L396.6 528.0L396.8 527.6L396.8 527.2L396.2 523.5ZM403.9 525.2L404.2 524.9L404.3 524.6L404.3 524.2L404.1 523.8L403.8 523.6L403.4 523.5L399.6 522.8L399.2 522.8L398.9 523.0L398.6 523.3L398.4 523.6L398.4 524.0L398.7 525.7L398.9 526.1L399.2 526.4L399.6 526.6L400.0 526.5L403.6 525.4ZM408.5 524.6L408.1 524.9L407.9 525.2L407.8 525.6L407.9 526.0L408.2 526.3L410.1 528.0L410.4 528.1L410.8 528.2L411.1 528.1L411.4 527.9L412.2 527.3L412.4 527.0L412.5 526.6L412.5 526.3L412.3 525.9L412.1 525.7L410.5 524.7L410.0 524.6L408.8 524.6ZM413.2 522.7L413.1 523.1L413.1 523.5L413.2 523.9L413.5 524.1L414.3 524.6L414.6 524.7L415.0 524.7L415.3 524.6L415.6 524.4L415.7 524.0L415.8 523.7L415.7 523.3L415.4 522.6L415.1 522.3L414.8 522.1L414.3 522.0L413.9 522.2L413.5 522.4ZM423.3 521.7L423.0 521.5L422.6 521.5L422.2 521.6L421.9 521.8L421.7 522.2L421.2 523.7L421.2 524.1L421.3 524.5L421.5 524.8L421.9 525.0L423.3 525.4L423.6 525.5L424.0 525.4L424.3 525.1L424.5 524.8L424.6 524.4L424.5 524.1L423.5 522.0ZM428.3 524.6L428.3 525.0L428.5 525.3L428.7 525.6L429.0 525.7L430.1 526.0L430.4 526.0L430.8 525.9L431.1 525.7L431.2 525.4L431.3 525.0L431.3 523.3L431.2 522.9L431.1 522.7L430.8 522.4L430.5 522.2L430.0 522.2L429.6 522.3L429.3 522.7L428.4 524.3ZM433.4 526.1L433.7 526.4L434.1 526.6L434.5 526.6L434.9 526.6L435.2 526.5L437.4 525.3L437.7 525.0L437.9 524.6L438.2 523.2L438.2 522.7L438.0 522.4L437.4 521.5L437.1 521.3L436.7 521.1L436.4 521.2L436.0 521.3L433.8 522.9L433.4 523.3L433.3 523.8L433.4 525.6ZM440.4 523.4L440.2 523.9L440.0 524.6L440.0 524.9L440.2 525.3L440.4 525.6L442.5 527.1L442.8 527.3L443.2 527.3L444.4 527.2L444.8 527.0L445.1 526.7L445.2 526.4L445.7 523.5L445.7 523.1L445.5 522.7L444.9 522.1L444.5 521.8L444.1 521.7L443.7 521.8L440.7 523.1ZM356.1 532.0L356.2 532.3L356.4 532.7L356.6 532.9L357.0 533.0L357.1 533.0L357.4 533.0L357.8 532.9L358.0 532.6L359.0 531.3L359.2 531.0L359.2 530.6L359.1 530.3L358.9 530.0L358.6 529.8L358.1 529.6L357.7 529.5L357.3 529.6L357.0 529.8L356.8 530.1L356.2 531.6ZM363.7 529.3L363.7 529.7L363.7 530.1L364.0 530.4L365.7 532.1L366.0 532.4L366.4 532.4L366.8 532.3L367.1 532.1L367.3 531.7L367.4 531.3L367.1 528.7L367.0 528.3L366.7 528.0L366.3 527.9L365.7 527.7L365.4 527.7L365.0 527.8L364.8 528.1L363.9 529.0ZM369.9 528.1L369.6 528.4L369.5 528.7L369.4 529.1L369.8 533.2L369.9 533.5L370.1 533.8L370.4 534.0L370.4 534.0L370.7 534.1L371.1 534.0L371.9 533.8L372.3 533.6L372.5 533.4L372.7 533.0L373.1 529.7L373.1 529.2L372.8 528.5L372.5 528.1L372.2 527.9L371.8 527.9L370.3 528.0ZM382.0 531.0L381.8 530.7L381.5 530.5L381.1 530.4L376.2 530.4L375.9 530.5L375.6 530.7L375.3 530.9L375.2 531.3L375.1 531.9L375.1 532.3L375.3 532.7L375.6 532.9L376.0 533.0L380.9 533.7L381.3 533.6L381.7 533.4L381.9 533.3L382.1 533.0L382.3 532.7L382.3 532.3L382.1 531.3ZM384.7 530.1L384.6 530.5L384.7 530.9L384.8 531.2L385.1 531.4L385.4 531.6L385.8 531.6L388.3 531.2L388.7 531.1L389.0 530.8L389.1 530.4L389.4 529.1L389.4 528.8L389.3 528.4L389.0 528.1L388.7 528.0L388.0 527.8L387.5 527.8L387.1 528.0L385.0 529.9ZM392.3 529.4L391.8 529.5L391.5 529.8L391.3 530.1L391.1 531.3L391.1 531.7L391.3 532.1L391.7 532.7L392.0 533.0L392.4 533.1L392.9 533.0L394.9 532.2L395.2 531.9L395.4 531.6L395.5 531.2L395.4 530.9L395.2 530.5L394.9 530.3L392.7 529.4ZM398.6 531.4L398.9 531.7L399.2 531.8L399.6 531.9L402.5 531.4L402.8 531.3L403.1 531.1L403.3 530.9L404.0 529.4L404.1 529.0L404.0 528.6L403.8 528.3L403.5 528.1L403.1 528.0L402.8 528.0L399.2 529.1L398.9 529.3L398.7 529.6L398.5 529.9L398.4 530.2L398.4 530.6L398.5 531.0ZM407.7 529.2L407.3 529.1L406.9 529.2L406.6 529.4L406.4 529.7L405.5 531.7L405.4 532.0L405.5 532.4L405.6 532.7L407.2 534.7L407.5 534.9L407.9 535.0L408.3 535.0L408.6 534.8L408.8 534.6L409.1 534.2L410.0 532.1L410.0 531.8L410.0 531.5L409.9 531.2L409.6 530.7L408.0 529.4ZM412.8 529.8L412.7 530.1L412.8 530.5L413.0 530.8L413.2 531.1L413.6 531.2L415.4 531.4L415.8 531.4L416.2 531.2L416.4 530.9L416.5 530.5L416.7 528.5L416.7 528.1L416.5 527.7L416.2 527.5L415.8 527.4L415.4 527.4L415.0 527.6L413.1 529.4ZM419.6 526.6L419.2 526.7L418.9 526.9L418.7 527.2L418.6 527.5L418.2 531.8L418.3 532.2L418.5 532.5L418.9 533.0L419.2 533.2L419.6 533.3L420.0 533.2L420.3 533.0L423.1 530.4L423.3 530.1L423.4 529.8L423.6 528.8L423.6 528.4L423.5 528.1L423.3 527.8L423.0 527.7L419.9 526.7ZM426.7 527.2L426.3 527.4L426.0 527.6L425.7 527.9L425.5 528.3L425.2 529.8L425.2 530.3L425.5 530.7L428.7 534.3L429.1 534.5L429.5 534.6L429.9 534.5L430.6 534.1L430.9 533.8L431.1 533.4L431.6 529.3L431.6 529.0L431.4 528.6L431.2 528.4L430.9 528.2L427.1 527.3ZM435.1 529.4L434.8 529.2L434.4 529.1L434.1 529.2L433.7 529.4L433.5 529.7L433.4 530.0L433.2 531.8L433.2 532.2L433.3 532.5L433.6 532.7L433.9 532.9L434.3 532.9L435.3 532.8L435.7 532.7L436.0 532.5L436.1 532.1L436.2 531.8L436.1 531.4L435.3 529.7ZM438.6 527.3L438.3 527.2L437.9 527.4L437.7 527.5L437.4 527.7L437.2 528.0L437.2 528.4L437.3 528.8L438.8 531.9L439.0 532.3L439.4 532.5L439.8 532.5L440.2 532.4L440.5 532.1L440.7 531.7L441.1 529.8L441.1 529.4L440.9 529.0L440.7 528.8L439.0 527.4ZM444.3 530.2L444.0 530.5L443.8 530.9L443.5 532.5L443.5 532.9L443.6 533.3L443.9 533.6L444.3 533.7L445.5 533.9L446.0 533.9L446.3 533.7L446.6 533.3L447.1 531.9L447.2 531.6L447.2 531.5L447.1 531.0L446.8 530.6L446.0 530.2L445.7 530.0L445.3 530.0L444.6 530.1ZM349.5 535.6L349.4 536.0L349.3 536.3L349.5 536.7L349.7 537.0L350.0 537.2L350.4 537.2L350.9 537.2L351.3 537.1L351.6 536.9L351.8 536.6L351.9 536.2L352.0 535.9L352.0 535.5L351.8 535.2L351.6 535.0L351.2 534.8L350.9 534.8L350.5 535.0L349.8 535.4ZM359.1 539.6L359.2 539.3L359.3 538.9L359.2 538.5L358.1 536.5L357.8 536.2L357.3 536.0L356.3 535.9L355.9 535.9L355.5 536.1L355.3 536.4L354.4 538.4L354.3 538.7L354.3 539.1L354.5 539.4L355.6 540.9L355.9 541.1L356.2 541.3L356.6 541.2L357.0 541.1L358.8 539.8ZM361.1 537.1L361.5 537.2L361.9 537.3L362.3 537.1L362.6 536.8L363.9 534.9L364.0 534.4L364.0 534.0L363.7 533.6L363.2 533.0L362.8 532.8L362.4 532.7L362.0 532.8L361.6 533.1L360.4 534.7L360.3 535.0L360.2 535.4L360.3 535.8L360.9 536.7ZM366.6 535.0L366.2 535.2L366.0 535.4L364.6 537.6L364.5 537.9L364.5 538.2L364.6 538.6L364.8 538.8L365.1 539.0L366.9 539.7L367.3 539.8L367.6 539.7L368.0 539.5L368.2 539.2L369.2 536.6L369.3 536.3L369.2 535.9L369.0 535.6L368.7 535.4L368.7 535.3L368.4 535.2L367.0 535.0ZM383.9 535.9L383.5 535.9L383.1 536.0L382.8 536.3L382.6 536.6L382.2 538.4L382.2 538.9L382.2 539.0L382.4 539.3L382.6 539.6L383.0 539.7L383.4 539.7L383.7 539.6L385.1 538.7L385.3 538.4L385.5 538.1L385.5 537.8L385.5 537.4L385.2 537.1L384.3 536.1ZM386.5 533.5L386.2 533.8L386.1 534.1L386.0 534.4L386.1 534.8L386.3 535.1L388.3 537.0L388.6 537.3L389.0 537.3L389.4 537.3L389.7 537.0L389.9 536.7L390.5 535.4L390.5 535.0L390.5 534.7L390.4 534.4L389.7 533.5L389.5 533.3L389.1 533.1L388.8 533.1L386.9 533.4ZM391.6 538.1L391.7 538.5L391.9 538.8L392.3 539.1L392.7 539.1L396.8 539.1L397.1 539.1L397.3 538.9L397.5 538.8L397.7 538.6L397.9 538.2L397.9 537.9L397.4 534.9L397.3 534.5L397.1 534.3L396.8 534.1L396.4 534.0L396.1 534.1L393.0 535.4L392.7 535.7L392.4 536.0L391.7 537.7ZM400.4 537.2L400.6 537.5L401.0 537.6L401.4 537.7L401.7 537.6L403.8 536.4L404.1 536.1L404.3 535.7L404.3 535.3L404.1 534.9L403.6 534.3L403.4 534.1L403.1 534.0L402.7 534.0L400.9 534.3L400.5 534.4L400.2 534.6L400.1 535.0L400.1 535.4L400.3 536.8ZM410.6 536.4L410.2 536.4L409.9 536.6L409.6 536.9L409.5 537.2L409.5 537.6L409.8 539.3L410.0 539.7L410.3 540.0L410.7 540.1L414.1 540.2L414.4 540.2L414.8 540.0L415.0 539.7L415.1 539.3L415.0 538.9L414.8 538.6L414.5 538.3L410.9 536.5ZM416.8 533.4L416.5 533.3L412.7 532.8L412.2 532.9L411.9 533.1L411.6 533.4L411.4 533.9L411.3 534.3L411.4 534.7L411.6 535.0L411.9 535.2L417.3 537.9L417.7 538.0L418.1 537.9L418.4 537.7L418.7 537.4L418.7 537.0L418.7 535.7L418.6 535.4L418.5 535.1L417.1 533.6ZM426.5 537.8L426.8 537.4L427.2 536.7L427.3 536.3L427.3 535.9L427.1 535.6L424.8 533.1L424.5 532.9L424.1 532.8L423.7 532.8L423.4 533.0L421.1 535.3L420.8 535.6L420.8 536.0L420.8 537.0L420.9 537.4L421.0 537.7L421.3 537.9L422.1 538.4L422.5 538.5L422.8 538.5L426.1 537.9ZM430.5 536.8L430.3 537.2L430.3 537.6L430.4 537.9L430.7 538.2L431.0 538.4L431.1 538.4L431.5 538.4L431.8 538.3L432.1 538.1L432.3 537.8L432.3 537.4L432.2 537.0L432.0 536.7L432.0 536.7L431.7 536.5L431.2 536.4L430.8 536.5L430.8 536.5ZM436.1 535.1L435.8 535.4L435.6 535.7L435.5 536.1L435.6 536.4L435.8 536.7L436.6 537.5L436.9 537.7L437.2 537.8L437.6 537.8L437.8 537.7L438.2 537.6L438.4 537.2L438.8 536.5L438.9 536.1L438.8 535.8L438.7 535.4L438.4 535.2L438.2 535.1L437.9 534.9L437.6 534.9L436.4 535.0ZM442.1 536.5L441.7 536.7L441.4 537.1L441.0 538.0L440.9 538.3L440.9 538.7L441.1 539.0L442.9 541.1L443.2 541.4L443.6 541.5L444.0 541.4L444.4 541.2L446.6 539.1L446.9 538.8L447.0 538.3L446.9 537.9L446.7 537.7L446.4 537.3L446.0 537.1L442.5 536.5ZM348.9 540.6L348.6 540.9L348.4 541.3L348.3 541.9L348.4 542.4L348.6 542.8L351.6 545.9L351.9 546.1L352.3 546.2L352.6 546.1L353.0 545.9L354.2 544.8L354.4 544.6L354.6 544.3L354.7 543.8L354.7 543.3L354.5 542.9L352.7 540.6L352.4 540.4L352.1 540.3L351.8 540.3L349.3 540.5ZM357.6 543.6L357.4 544.0L357.5 544.4L357.7 544.8L358.0 545.0L360.2 546.1L360.6 546.2L361.0 546.1L361.3 545.9L361.6 545.6L361.6 545.2L361.5 544.8L360.6 542.8L360.3 542.5L360.0 542.3L359.5 542.3L359.1 542.4L357.9 543.3ZM363.7 540.6L363.3 540.7L363.0 540.9L362.8 541.2L362.7 541.6L362.8 542.0L363.8 544.0L364.0 544.3L364.3 544.5L364.7 544.6L365.1 544.5L365.4 544.3L366.6 543.1L366.8 542.8L366.9 542.4L366.8 542.0L366.6 541.7L366.3 541.5L364.1 540.6ZM369.6 541.1L369.7 541.5L369.9 541.8L370.2 542.0L371.7 542.7L372.1 542.8L372.6 542.7L373.3 542.3L373.6 542.1L373.8 541.8L373.9 541.5L373.9 539.2L373.8 538.7L373.0 537.1L372.7 536.8L372.4 536.6L372.0 536.5L371.7 536.6L371.4 536.8L371.2 537.1L369.7 540.7ZM376.4 541.5L376.6 541.9L377.0 542.1L379.0 542.8L379.4 542.8L379.7 542.7L380.0 542.5L380.2 542.2L380.3 541.9L380.3 541.5L380.0 540.7L379.8 540.3L379.5 540.0L379.1 539.9L377.3 539.9L377.0 540.0L376.6 540.2L376.4 540.5L376.3 540.9L376.3 541.1ZM404.6 542.4L405.6 543.0L406.0 543.2L406.4 543.1L406.8 542.9L407.1 542.6L407.8 541.0L407.9 540.7L407.9 540.4L407.6 538.8L407.5 538.4L407.2 538.2L406.9 538.0L406.5 538.0L406.1 538.1L403.7 539.5L403.4 539.7L403.3 540.1L403.3 540.5L403.4 540.9L404.3 542.1ZM417.3 544.5L417.4 544.8L417.6 545.1L418.4 545.8L418.7 546.0L419.0 546.1L419.3 546.0L419.7 545.9L420.5 545.3L420.7 545.0L420.9 544.7L420.9 544.4L420.6 541.4L420.5 540.9L420.1 540.6L420.0 540.5L419.7 540.4L419.4 540.4L419.0 540.5L418.8 540.7L418.0 541.7L417.7 542.1L417.3 544.2ZM425.7 546.1L426.1 546.0L426.5 545.9L426.7 545.6L427.9 543.7L428.0 543.4L428.0 543.1L427.9 542.8L427.0 540.9L426.8 540.6L426.4 540.4L425.9 540.3L424.3 540.6L424.0 540.7L423.7 541.0L423.5 541.3L423.5 541.7L423.8 544.5L423.9 545.0L424.3 545.3L425.4 545.9ZM436.7 541.6L436.5 542.3L436.4 542.7L436.5 543.1L436.8 543.4L438.3 544.7L438.7 544.9L439.1 544.9L439.5 544.7L440.5 544.0L440.8 543.7L440.9 543.3L440.8 542.9L440.6 542.6L439.1 540.7L438.8 540.5L438.4 540.4L438.1 540.4L437.8 540.5L437.5 540.6L437.2 540.9L436.8 541.4ZM340.8 546.8L340.5 547.1L340.4 547.5L340.4 547.9L341.0 549.7L341.1 550.0L341.4 550.2L341.7 550.3L342.1 550.4L343.4 550.2L343.8 550.0L344.1 549.7L344.3 549.3L344.3 548.9L344.1 548.5L342.7 546.9L342.4 546.7L342.1 546.6L341.8 546.6L341.2 546.7ZM347.4 549.0L347.8 549.1L348.2 549.1L348.5 548.9L349.4 548.3L349.7 548.0L349.8 547.6L349.8 547.2L349.5 546.8L347.4 544.6L347.1 544.4L346.7 544.3L346.2 544.4L345.4 544.9L345.1 545.1L345.0 545.4L344.9 545.8L345.0 546.1L345.1 546.4L347.2 548.8ZM358.4 549.3L358.5 548.9L358.5 548.5L358.3 548.1L357.9 547.9L356.3 547.1L355.9 547.0L355.5 547.0L355.2 547.2L354.6 547.7L354.4 548.0L354.3 548.4L354.4 548.9L355.1 550.3L355.4 550.6L355.8 550.8L356.2 550.8L356.6 550.7L358.1 549.6ZM362.3 548.3L362.2 548.7L362.3 549.1L363.7 551.6L363.9 551.9L364.3 552.1L364.7 552.1L366.5 551.9L366.8 551.8L367.1 551.5L367.3 551.2L367.3 550.8L367.2 550.4L365.3 547.1L365.1 546.9L364.8 546.7L364.4 546.6L364.2 546.6L363.9 546.7L363.6 546.9L362.5 547.9ZM367.2 545.8L367.1 546.2L367.3 546.6L368.3 548.5L368.6 548.8L368.9 548.9L369.3 548.9L369.7 548.8L370.7 548.2L371.0 548.0L371.2 547.6L371.2 547.3L371.1 545.6L371.0 545.3L370.9 545.0L370.6 544.8L369.5 544.3L369.1 544.2L368.7 544.2L368.4 544.4L367.4 545.4ZM379.3 548.7L379.5 548.2L379.4 546.0L379.4 545.6L379.1 545.3L378.8 545.1L375.5 543.9L375.1 543.9L374.7 544.0L373.7 544.6L373.4 544.8L373.3 545.1L373.2 545.5L373.3 547.4L373.5 547.9L373.8 548.2L376.7 550.0L377.0 550.2L377.4 550.2L377.8 550.0L379.1 549.0ZM338.7 550.1L338.4 549.8L338.0 549.7L337.6 549.8L337.3 549.9L334.8 551.9L334.6 552.3L334.5 552.7L334.5 553.1L334.8 553.5L336.7 555.2L337.0 555.4L337.4 555.5L337.8 555.4L338.4 555.1L338.7 555.0L338.9 554.7L339.0 554.4L339.3 552.1L339.3 551.6L338.9 550.4ZM346.6 552.5L346.4 552.2L346.0 552.0L345.6 551.9L342.0 552.4L341.6 552.6L341.3 552.9L341.1 553.3L340.9 554.6L340.9 555.0L341.1 555.3L341.4 555.6L343.2 556.7L343.5 556.8L343.9 556.8L344.3 556.7L346.3 555.5L346.6 555.2L346.7 554.9L346.8 554.6L346.7 552.9ZM352.1 550.1L351.7 549.9L351.2 549.9L350.9 550.0L349.3 551.1L349.1 551.4L348.9 551.6L348.9 552.0L348.9 554.0L349.0 554.4L349.2 554.7L349.6 554.9L350.6 555.3L351.0 555.3L351.3 555.2L351.6 555.0L353.1 553.6L353.4 553.3L353.4 552.9L353.3 552.5L352.3 550.4ZM358.3 552.8L358.1 553.2L358.1 553.6L358.3 553.9L358.5 554.2L359.2 554.7L359.5 554.8L359.9 554.8L360.3 554.8L360.6 554.7L360.9 554.4L361.6 553.5L361.7 553.2L361.7 552.8L361.6 552.4L361.3 551.9L361.1 551.6L360.7 551.4L360.3 551.4L359.9 551.6L358.5 552.6ZM365.1 558.8L365.4 558.9L365.8 558.9L366.2 558.7L366.5 558.4L367.8 555.8L367.9 555.5L367.9 555.1L367.8 554.8L367.5 554.3L367.2 554.0L366.9 553.9L366.5 553.9L364.6 554.1L364.2 554.2L363.9 554.5L363.3 555.4L363.1 555.8L363.1 556.2L363.3 556.6L364.8 558.6ZM370.4 552.0L370.2 552.4L370.2 552.8L370.4 553.2L370.4 553.2L370.6 553.5L371.0 553.6L373.7 554.3L374.1 554.3L374.5 554.2L374.7 553.9L374.9 553.5L375.0 553.2L375.0 552.8L374.8 552.4L374.5 552.1L372.9 551.1L372.6 551.0L372.2 551.0L371.9 551.1L370.7 551.8ZM343.0 560.0L343.0 559.7L342.9 559.1L342.8 558.7L342.5 558.4L340.2 557.0L339.8 556.9L339.3 557.0L338.0 557.6L337.7 557.7L337.5 558.0L337.2 558.4L337.1 558.9L337.0 561.6L337.1 562.0L337.3 562.3L337.6 562.5L337.9 562.6L340.9 563.0L341.3 562.9L341.6 562.7L341.9 562.4L342.9 560.3ZM345.8 558.4L345.6 558.8L345.6 559.2L345.8 559.6L346.1 559.8L349.2 561.5L349.6 561.6L350.0 561.5L350.3 561.4L350.6 561.2L350.8 561.0L350.9 560.6L350.9 560.3L350.5 558.4L350.4 558.1L350.2 557.8L349.9 557.6L348.3 557.1L347.9 557.1L347.5 557.2L346.1 558.1ZM354.9 561.5L355.3 561.4L355.6 561.2L355.9 560.8L357.2 557.5L357.3 557.1L357.1 556.7L356.8 556.3L355.9 555.7L355.6 555.5L355.3 555.5L355.0 555.6L354.7 555.8L353.4 557.0L353.2 557.2L353.1 557.5L353.1 557.9L353.6 560.5L353.8 560.9L354.2 561.2L354.5 561.4ZM361.3 558.9L360.9 558.8L360.4 558.8L360.1 559.1L359.8 559.4L359.2 561.0L359.1 561.4L359.2 561.7L359.3 562.0L359.6 562.2L359.9 562.4L361.4 562.6L361.8 562.6L362.1 562.5L362.4 562.2L362.7 561.8L362.9 561.4L362.9 561.0L362.7 560.6L361.6 559.2ZM337.5 565.1L337.1 565.3L336.9 565.5L336.7 565.9L336.6 566.3L336.6 566.7L336.8 567.1L337.1 567.6L337.5 567.9L337.9 568.1L338.3 568.0L340.2 567.3L340.5 567.1L340.7 566.8L340.8 566.4L340.8 566.0L340.6 565.7L340.3 565.4L339.9 565.3L337.8 565.1ZM345.1 562.1L344.8 562.1L344.4 562.3L344.2 562.6L343.5 563.8L343.4 564.2L343.5 564.6L344.1 566.6L344.3 566.9L344.5 567.1L345.1 567.5L345.4 567.6L345.8 567.7L346.1 567.6L346.4 567.3L346.6 567.0L347.7 564.4L347.8 564.0L347.7 563.7L347.5 563.3L347.2 563.1L345.5 562.2ZM354.4 564.7L354.2 564.3L353.8 564.0L352.8 563.5L352.4 563.4L352.0 563.4L350.8 563.9L350.5 564.1L350.3 564.4L348.8 567.9L348.7 568.3L348.8 568.6L349.0 568.9L349.2 569.2L349.6 569.4L350.0 569.5L350.3 569.5L350.7 569.4L353.5 567.7L353.8 567.4L354.0 567.0L354.4 565.1Z" fill="#e7e4d1" stroke="#2c2436" stroke-width="0.7"/><path d="M516.9 531.3 L574.0 539.7 L595.2 510.1 Q612 512 622.7 523.8 L603.7 555.6 L622.7 583.1 Q612 597 596.3 602.1 L570.9 573.6 L512.7 564.0 Q510 546 516.9 531.3 Z" fill="#4c4260" stroke="#2b2433" stroke-width="1.4"/><path d="M513.8 547.7L514.7 549.6M521.3 550.7L521.4 552.2M521.4 552.2L518.7 555.3M514.1 560.2L513.7 560.2M514.1 560.2L515.4 562.2M619.1 524.6L618.9 526.3M618.9 526.3L619.2 526.7M526.4 557.4L521.4 552.2M528.6 554.2L528.9 549.3M528.9 549.3L527.9 549.0M521.4 550.6L527.9 549.0M528.9 549.3L531.9 547.7M527.9 549.0L523.6 541.9M516.9 562.7L520.7 559.8M524.0 564.3L523.7 559.7M523.7 559.7L520.7 559.8M515.4 562.2L516.9 562.7M518.7 555.3L520.7 559.8M526.4 557.4L526.4 557.5M526.4 557.5L523.7 559.7M581.0 534.7L579.1 535.2M546.0 545.8L551.3 547.0M546.0 545.8L545.1 542.1M551.7 546.7L551.3 547.0M551.7 546.7L552.8 540.1M552.8 540.1L550.6 537.8M585.6 545.6L586.6 547.4M586.6 547.4L592.9 547.9M589.4 541.0L594.8 544.1M592.9 547.9L594.9 546.3M594.8 544.1L594.9 546.3M586.6 547.4L585.4 553.5M592.9 547.9L592.2 551.9M592.2 551.9L585.4 553.5M583.6 536.1L582.2 541.2M583.6 536.1L581.0 534.7M574.8 541.6L574.8 541.7M582.2 541.2L577.2 543.1M574.8 541.7L577.2 543.1M582.2 541.2L585.5 545.5M585.5 545.5L579.1 547.4M577.2 543.1L579.1 547.4M582.7 563.0L587.6 556.9M587.6 556.9L585.3 553.6M585.3 553.6L580.7 554.3M580.8 559.9L580.7 554.3M585.4 553.5L585.3 553.6M565.0 542.1L567.4 540.7M565.0 542.1L566.2 545.1M574.8 541.7L571.3 546.9M577.6 552.7L577.6 552.7M571.3 546.9L571.5 547.8M521.2 543.2L523.0 541.7M542.0 540.8L541.5 536.4M542.0 540.8L538.6 542.3M536.3 541.0L538.6 542.3M536.3 541.0L536.6 535.7M601.7 512.8L601.1 513.1M608.8 515.4L608.7 516.8M613.3 517.8L612.5 518.5M604.5 518.4L608.7 516.8M604.5 518.4L603.1 518.0M613.1 522.3L612.5 518.5M613.1 522.3L610.6 524.8M604.5 518.4L606.5 523.2M619.1 524.6L613.1 522.3M562.1 551.2L563.4 551.3M558.1 546.6L559.9 542.0M546.0 545.8L543.2 548.8M543.2 548.8L543.2 552.0M545.1 542.1L542.0 540.8M543.2 548.8L538.7 546.6M531.4 542.4L536.3 541.0M531.9 547.7L534.3 549.1M538.7 546.6L534.3 549.1M538.3 565.7L537.9 566.6M541.5 564.3L538.3 565.7M541.5 564.3L544.9 567.8M534.3 562.3L537.6 556.5M529.9 560.1L530.3 561.0M529.9 560.1L535.8 554.4M535.8 554.4L536.1 554.3M528.7 565.1L530.3 561.0M541.5 564.3L541.6 564.2M541.6 564.2L537.6 556.5M526.4 557.5L529.9 560.1M528.6 554.2L535.8 554.4M534.3 549.1L536.1 554.3M556.6 547.0L555.4 554.8M551.3 553.1L552.7 555.6M562.1 551.2L557.8 554.7M557.8 554.7L555.4 554.8M545.9 559.7L549.4 559.6M549.7 563.7L549.4 559.6M553.3 569.0L553.3 565.9M553.3 565.9L555.7 562.2M558.9 566.7L557.3 562.6M557.3 562.6L555.7 562.2M553.0 569.1L553.3 569.0M564.2 567.3L564.3 568.7M549.7 563.7L553.3 565.9M551.7 558.2L555.7 562.2M564.5 560.4L564.9 566.4M564.5 560.4L561.3 560.0M561.3 560.0L557.3 562.6M596.7 600.3L596.8 600.1M596.8 600.1L595.4 595.4M592.5 595.5L593.5 593.9M593.5 593.9L595.4 595.4M590.2 593.0L592.8 592.5M607.4 563.6L604.6 564.4M601.0 559.8L600.9 559.7M571.9 560.4L565.6 559.4M571.9 560.4L572.7 560.1M572.7 560.1L574.3 555.3M574.3 555.3L567.5 553.0M565.6 559.4L565.9 553.4M570.0 566.5L571.9 560.4M580.8 559.9L574.7 561.6M577.6 552.7L574.3 555.3M523.0 541.7L522.8 538.5M518.7 533.1L518.8 535.2M596.3 512.1L593.6 519.5M600.8 519.9L593.6 519.5M564.3 568.7L567.1 571.5M570.0 566.5L572.2 568.6M576.3 565.3L574.7 561.6M618.9 526.3L614.4 531.4M610.6 524.8L610.6 527.3M614.4 531.4L610.6 527.3M607.9 544.3L603.4 549.3M607.9 544.3L607.4 542.9M603.4 549.3L599.4 549.5M597.2 540.9L602.3 543.6M598.8 553.6L600.2 555.2M598.8 553.6L599.4 549.5M592.2 551.9L594.2 555.0M598.8 553.6L594.2 555.0M597.0 565.7L594.0 565.1M594.0 565.1L591.5 563.7M591.5 563.7L591.4 559.3M591.4 559.3L592.7 558.0M594.2 555.0L592.7 558.0M600.9 559.7L600.7 559.9M587.6 556.9L591.4 559.3M592.3 571.6L594.0 565.1M592.3 571.6L595.7 573.7M595.7 573.7L599.2 568.4M601.7 569.2L599.2 568.4M605.0 572.3L601.7 569.2M608.6 565.3L607.5 571.4M526.1 534.2L526.3 534.7M531.0 534.9L531.0 535.1M526.3 534.7L530.6 535.3M530.6 535.3L531.0 535.1M522.8 538.5L526.3 534.7M531.9 535.0L531.0 535.1M614.6 534.5L614.4 534.4M611.5 539.6L611.2 539.4M603.3 536.5L608.2 533.9M608.2 533.9L613.2 535.1M611.2 539.4L613.2 535.1M610.6 527.3L606.9 529.4M614.4 534.4L613.2 535.1M606.5 523.2L602.9 527.4M600.8 519.9L600.4 523.5M600.4 523.5L602.9 527.4M590.7 519.0L591.6 518.8M593.6 519.5L593.2 519.8M591.6 518.8L593.2 519.8M574.0 568.5L577.6 572.7M577.6 572.7L575.5 576.5M595.4 595.4L601.1 594.0M601.1 594.0L603.2 595.0M605.0 572.3L604.1 575.9M595.7 573.7L595.8 577.1M595.8 577.1L600.5 579.5M600.5 579.5L604.1 575.9M595.6 587.7L600.7 589.5M595.7 586.8L600.6 581.0M603.0 588.3L601.7 582.1M600.6 581.0L601.7 582.1M593.1 590.7L592.8 592.5M601.1 594.0L600.7 589.5M605.6 593.5L603.2 595.0M606.2 589.3L603.0 588.3M608.4 587.8L608.6 584.5M608.4 587.8L606.2 589.3M608.6 584.5L601.7 582.1M600.5 579.5L600.6 581.0M604.1 575.9L609.6 579.8M610.3 582.5L608.6 584.5M609.6 579.8L611.1 577.9M602.8 528.4L601.3 530.1M601.3 530.1L601.6 535.7M597.8 537.5L601.6 535.7M600.4 523.5L596.3 525.2M596.3 525.2L597.3 529.0M593.2 519.8L592.8 522.6M596.3 525.2L592.8 522.6M586.9 524.2L591.4 524.1M591.4 524.1L592.8 522.6M579.9 572.0L583.2 572.4M583.2 572.4L586.0 570.2M586.6 566.2L582.9 563.6M577.6 572.7L579.9 572.0M592.3 571.6L589.0 572.4M591.5 563.7L586.6 566.2M582.7 563.0L582.9 563.6M595.7 586.8L592.2 582.6M589.0 572.4L590.1 576.6M580.5 579.1L579.9 581.5M619.1 585.2L620.5 582.6M617.7 586.6L613.4 582.8M616.6 577.7L616.9 577.4M613.3 590.9L608.4 587.8M611.1 577.9L616.6 577.7M591.3 529.1L594.8 530.4M591.3 529.1L588.5 531.2M594.9 535.8L588.5 536.6M588.5 531.2L587.5 535.8M591.4 524.1L591.3 529.1M584.7 527.3L588.5 531.2M583.6 536.1L587.5 535.8M588.2 586.6L585.6 587.8M593.1 590.7L588.2 586.6M605.6 593.5L608.1 594.8" stroke="#5d5170" stroke-width="0.9" fill="none"/><path d="M595.8 517.5L595.8 517.8L596.1 518.1L596.4 518.3L596.7 518.4L600.0 518.6L600.3 518.6L600.7 518.4L601.0 518.1L601.3 517.7L601.4 517.3L601.3 516.9L600.2 514.2L599.9 513.7L598.8 513.0L598.4 512.9L597.9 512.9L597.7 513.0L597.3 513.2L597.1 513.6L595.8 517.1ZM595.5 521.1L595.2 521.3L595.0 521.6L594.9 522.1L595.0 522.5L595.3 522.8L596.1 523.4L596.4 523.5L596.7 523.6L597.1 523.5L598.2 523.0L598.5 522.8L598.7 522.5L598.8 522.1L598.7 521.7L598.5 521.4L598.2 521.2L597.9 521.1L595.9 521.0ZM602.5 525.1L602.8 525.3L603.2 525.3L603.6 525.2L603.9 525.0L605.1 523.5L605.3 523.2L605.4 522.9L605.3 522.5L604.2 519.8L604.0 519.5L603.7 519.3L603.4 519.2L603.0 519.3L602.7 519.4L601.9 520.1L601.6 520.4L601.5 520.8L601.3 523.0L601.3 523.3L601.5 523.6L602.3 524.9ZM611.6 519.4L611.4 519.1L611.2 518.9L609.0 518.0L608.7 517.9L608.3 518.0L606.7 518.5L606.4 518.7L606.1 519.1L606.0 519.5L606.1 519.8L607.0 522.1L607.2 522.4L607.6 522.7L609.8 523.5L610.1 523.6L610.5 523.5L610.8 523.3L611.7 522.3L612.0 522.0L612.0 521.5L611.7 519.7ZM586.9 525.7L586.6 525.9L586.4 526.2L586.3 526.6L586.4 527.0L586.6 527.3L588.1 528.8L588.4 529.0L588.7 529.1L589.0 529.0L589.4 528.9L589.5 528.7L589.8 528.4L590.0 527.9L590.0 526.5L589.9 526.2L589.7 525.8L589.3 525.6L589.0 525.5L587.3 525.6ZM593.6 524.5L593.2 524.4L592.9 524.5L592.6 524.7L592.4 525.0L592.3 525.4L592.3 527.8L592.4 528.2L592.6 528.5L592.9 528.7L594.2 529.2L594.7 529.3L595.1 529.1L595.5 528.9L595.8 528.6L596.0 528.2L596.0 527.8L595.6 526.2L595.4 525.8L595.2 525.6L593.9 524.6ZM598.4 527.6L598.7 527.9L599.0 528.0L599.7 528.2L600.1 528.3L600.5 528.1L600.8 527.9L601.0 527.5L601.0 527.1L600.8 526.8L600.3 526.0L600.1 525.7L599.8 525.5L599.5 525.5L599.1 525.6L598.7 525.7L598.4 525.9L598.2 526.2L598.1 526.5L598.2 526.9L598.3 527.3ZM605.3 526.6L605.2 527.0L605.4 527.4L605.6 527.7L606.0 527.9L606.3 528.0L606.7 528.0L607.1 527.9L608.5 527.1L608.8 526.8L608.9 526.5L609.0 526.1L608.9 525.7L608.6 525.5L608.3 525.3L607.5 524.9L607.1 524.9L606.7 525.0L606.4 525.2L605.5 526.3ZM612.1 526.7L612.3 527.0L613.6 528.4L613.9 528.6L614.3 528.7L614.7 528.6L615.1 528.4L616.7 526.7L616.9 526.3L616.9 525.9L616.8 525.6L616.6 525.3L616.3 525.0L614.0 524.2L613.7 524.2L613.3 524.2L613.0 524.5L612.3 525.1L612.1 525.4L612.0 525.8L612.0 526.3ZM521.1 533.6L521.2 534.0L521.4 534.3L521.8 534.6L522.1 534.8L522.5 534.8L522.8 534.7L523.1 534.5L523.3 534.2L523.4 533.8L523.3 533.5L523.3 533.5L521.0 533.1ZM586.1 534.5L586.4 534.2L586.6 533.8L586.9 532.1L587.0 531.8L586.9 531.5L586.7 531.2L585.1 529.5L584.7 529.3L584.3 529.2L583.9 529.4L583.6 529.6L582.6 530.9L582.4 531.2L582.4 531.5L582.4 533.3L582.4 533.7L582.6 534.0L582.9 534.2L583.6 534.6L584.2 534.7L585.7 534.6ZM588.7 534.7L588.9 535.0L589.1 535.3L589.5 535.5L589.9 535.5L593.0 535.1L593.4 535.0L593.7 534.8L593.9 534.5L593.9 534.1L593.9 531.7L593.8 531.4L593.5 531.0L593.2 530.8L591.9 530.4L591.6 530.3L591.3 530.3L591.0 530.5L589.6 531.5L589.4 531.7L589.3 532.1L588.8 534.3ZM596.1 534.9L596.2 535.2L596.5 535.4L597.4 536.0L597.7 536.1L598.0 536.1L598.3 536.0L599.8 535.3L600.1 535.1L600.3 534.7L600.4 534.3L600.2 531.7L600.1 531.3L599.8 531.0L599.5 530.8L597.8 530.4L597.4 530.3L597.1 530.4L596.4 530.8L596.2 531.0L596.0 531.3L595.9 531.7L596.0 534.6ZM602.5 534.7L602.8 535.0L603.1 535.2L603.5 535.2L603.9 535.1L606.4 533.8L606.7 533.5L606.9 533.1L606.9 532.7L606.4 530.7L606.2 530.4L605.9 530.2L605.6 530.0L603.7 529.6L603.3 529.6L603.0 529.7L602.7 529.9L602.5 530.1L602.3 530.4L602.2 530.8L602.4 534.3ZM612.1 533.4L612.5 533.3L612.8 533.1L613.0 532.8L613.0 532.4L613.0 532.3L612.9 531.9L612.7 531.6L610.9 529.6L610.5 529.3L610.0 529.2L609.6 529.4L609.2 529.6L608.9 529.9L608.7 530.3L608.7 530.8L609.1 532.2L609.3 532.5L609.5 532.8L609.8 532.9L611.8 533.4ZM515.7 540.4L515.8 540.8L516.0 541.0L516.3 541.2L516.7 541.3L520.1 541.4L520.5 541.3L520.8 541.1L521.1 540.7L521.1 540.3L521.1 539.8L521.0 539.4L520.7 539.1L519.3 537.9L518.9 537.7L518.5 537.7L518.1 537.8L516.3 538.9L516.1 539.2L515.9 539.5L515.7 540.0ZM524.2 540.1L524.5 540.4L524.8 540.6L525.1 540.6L528.5 540.6L528.8 540.5L529.2 540.3L529.4 539.9L529.4 539.6L529.4 537.3L529.3 536.9L529.1 536.6L528.9 536.4L528.5 536.3L527.3 536.1L526.8 536.2L526.4 536.4L524.4 538.6L524.2 539.0L524.1 539.4L524.1 539.7ZM532.4 536.3L532.1 536.5L531.9 536.8L531.8 537.2L531.9 539.7L532.0 540.1L532.2 540.4L532.5 540.6L532.8 540.7L533.2 540.7L534.5 540.3L534.8 540.1L535.1 539.8L535.2 539.4L535.3 537.2L535.3 536.8L535.0 536.5L534.7 536.2L534.3 536.2L532.8 536.2ZM544.0 538.2L544.2 538.5L544.5 538.7L544.9 538.7L545.3 538.6L545.6 538.4L546.4 537.5L546.6 537.2L546.7 536.9L544.0 536.5L543.8 536.8L543.8 537.3L543.9 537.9ZM576.7 540.4L576.9 540.8L577.2 541.0L577.6 541.1L578.0 541.1L580.4 540.1L580.8 539.9L581.0 539.5L581.4 537.8L581.4 537.4L581.3 537.0L581.0 536.7L580.6 536.6L580.2 536.6L577.6 537.2L577.2 537.4L576.9 537.7L576.9 537.7L576.8 538.1L576.6 540.0ZM585.1 543.1L585.4 543.3L585.8 543.3L586.1 543.1L586.4 542.9L587.9 541.1L588.1 540.7L588.1 540.2L587.6 537.7L587.5 537.4L587.2 537.1L586.9 536.9L586.6 536.9L585.1 537.0L584.7 537.1L584.4 537.4L584.2 537.8L583.5 540.5L583.5 541.0L583.7 541.4L584.8 542.9ZM590.6 537.6L590.2 537.9L590.1 538.3L590.1 538.7L590.3 539.8L590.5 540.2L590.8 540.5L593.7 542.2L594.0 542.3L594.4 542.3L594.7 542.1L595.0 541.9L595.9 540.6L596.1 540.2L596.4 538.8L596.4 538.4L596.2 538.0L595.9 537.8L594.9 537.2L594.6 537.1L594.3 537.1L590.9 537.5ZM601.6 536.7L601.2 536.8L599.0 537.8L598.6 538.1L598.4 538.6L598.2 539.7L598.2 540.1L598.4 540.5L598.7 540.8L602.1 542.6L602.4 542.7L602.8 542.7L604.2 542.3L604.6 542.2L604.8 541.9L605.0 541.6L605.0 541.2L604.8 540.9L602.9 537.4L602.7 537.1L602.4 536.9L602.0 536.8ZM607.1 540.1L607.4 540.3L607.7 540.3L608.1 540.2L608.4 540.0L609.9 538.6L610.1 538.3L610.6 537.2L610.7 536.9L610.7 536.5L610.5 536.2L610.2 536.0L609.9 535.8L608.7 535.5L608.4 535.5L608.0 535.6L606.2 536.6L605.9 536.8L605.7 537.2L605.7 537.6L605.8 538.0L606.8 539.8ZM515.6 544.8L515.2 545.0L515.0 545.4L514.9 545.8L514.9 546.2L515.0 546.5L515.6 547.7L515.9 548.0L516.3 548.2L518.6 548.6L518.9 548.6L519.3 548.5L519.5 548.3L519.7 548.0L519.7 547.6L519.7 545.7L519.6 545.3L519.4 545.0L519.1 544.8L518.7 544.7L516.0 544.7ZM524.3 546.0L524.0 545.9L523.6 545.8L523.3 545.9L523.0 546.1L522.8 546.5L522.7 546.8L522.7 547.6L522.8 547.9L523.0 548.2L523.3 548.5L523.6 548.6L524.0 548.5L524.4 548.4L524.7 548.3L525.0 548.0L525.1 547.7L525.1 547.3L525.0 547.0L524.6 546.3ZM527.2 543.2L526.8 543.5L526.6 543.9L526.6 544.3L526.7 544.7L528.2 547.1L528.4 547.4L528.8 547.6L529.2 547.6L529.5 547.5L529.9 547.3L530.2 547.0L530.4 546.7L530.5 546.3L530.3 544.0L530.2 543.7L529.9 543.4L529.6 543.2L529.2 543.1L527.6 543.1ZM534.1 547.4L534.5 547.4L534.8 547.3L536.9 546.1L537.2 545.9L537.3 545.6L537.4 545.2L537.4 543.6L537.3 543.3L537.1 543.0L536.8 542.8L536.5 542.6L536.1 542.5L535.8 542.5L533.6 543.1L533.3 543.3L533.0 543.5L532.9 543.8L532.8 544.2L533.0 546.4L533.1 546.7L533.3 547.0L533.6 547.2L533.8 547.3ZM539.9 545.6L540.1 545.9L540.4 546.1L542.3 547.0L542.7 547.1L543.1 547.1L543.5 546.8L544.4 545.9L544.6 545.6L544.6 545.3L544.6 544.9L544.2 543.4L544.0 543.0L543.7 542.8L542.4 542.2L542.0 542.2L541.6 542.2L540.4 542.8L540.1 543.0L539.9 543.3L539.8 543.7L539.8 545.2ZM549.9 545.2L550.3 545.0L550.5 544.8L550.7 544.4L551.3 541.1L551.3 540.6L551.0 540.2L550.6 539.8L550.3 539.6L549.9 539.5L549.5 539.6L549.2 539.8L547.0 542.1L546.8 542.4L546.7 542.7L546.8 543.0L547.0 544.1L547.2 544.4L547.4 544.6L547.8 544.8L549.5 545.2ZM557.3 541.3L557.0 541.2L554.5 541.2L554.2 541.2L553.9 541.4L553.6 541.7L553.5 542.0L553.0 544.7L553.0 545.1L553.2 545.5L553.6 545.8L554.0 545.9L556.3 546.0L556.7 546.0L556.9 545.9L557.3 545.7L557.6 545.3L558.5 543.0L558.5 542.6L558.4 542.2L558.1 541.8L557.6 541.4ZM560.8 542.8L560.6 543.0L560.4 543.2L559.4 545.8L559.3 546.2L559.4 546.5L559.5 546.8L561.7 549.4L562.0 549.7L562.4 549.8L562.8 549.7L563.1 549.5L563.4 549.2L565.0 545.4L565.1 545.0L565.0 544.7L564.4 543.2L564.2 542.8L563.9 542.6L563.4 542.4L563.1 542.3L562.7 542.3L561.1 542.6ZM572.7 546.7L572.7 547.1L572.8 547.4L573.0 547.7L575.9 550.1L576.2 550.3L576.6 550.3L577.0 550.2L577.3 549.9L577.5 549.6L578.0 547.8L578.0 547.4L578.0 547.1L576.6 544.1L576.4 543.8L576.2 543.6L576.0 543.5L575.6 543.3L575.2 543.3L574.9 543.5L574.6 543.8L572.8 546.4ZM579.5 545.7L579.8 545.9L580.1 546.0L580.5 546.0L582.5 545.4L582.8 545.2L583.1 544.9L583.2 544.6L583.2 544.2L583.0 543.8L582.4 543.0L582.0 542.7L581.6 542.6L581.2 542.6L579.5 543.3L579.2 543.5L578.9 543.8L578.9 544.2L578.9 544.6L579.3 545.4ZM587.7 545.1L587.6 545.4L587.7 545.8L587.9 546.1L588.2 546.3L588.5 546.4L592.1 546.6L592.5 546.6L592.8 546.4L593.1 546.2L593.4 545.9L593.5 545.5L593.5 545.1L593.3 544.8L593.0 544.5L590.4 543.0L590.0 542.9L589.7 542.9L589.4 543.0L589.1 543.2L587.8 544.7ZM598.2 547.2L598.6 547.2L598.9 547.0L599.2 546.7L600.4 544.9L600.6 544.5L600.6 544.1L600.4 543.7L600.1 543.5L598.2 542.5L597.9 542.4L597.5 542.4L597.2 542.5L596.9 542.8L595.9 544.1L595.8 544.4L595.7 544.8L595.8 545.2L595.9 545.7L596.2 546.0L597.8 547.0ZM602.6 545.6L602.6 546.0L602.7 546.3L603.0 546.6L603.3 546.7L603.7 546.8L604.0 546.7L604.3 546.5L604.5 546.2L604.7 545.9L604.8 545.6L604.7 545.2L604.5 544.9L604.3 544.7L603.9 544.6L603.5 544.6L603.5 544.6L603.1 544.8L602.9 545.0L602.7 545.2ZM517.9 553.9L518.2 553.7L518.5 553.3L518.7 552.9L518.8 552.5L518.6 552.1L518.4 551.8L518.0 551.6L516.5 551.4L516.2 551.4L515.9 551.5L515.6 551.7L515.4 552.0L515.1 552.9L515.1 553.3L515.2 553.8L515.3 553.9L515.6 554.2L516.0 554.3L516.4 554.3L517.6 554.0ZM523.8 551.3L523.5 551.7L523.4 552.1L523.4 552.5L523.7 552.8L525.4 554.6L525.7 554.8L526.0 554.9L526.4 554.9L526.7 554.7L526.9 554.5L527.3 554.0L527.4 553.5L527.5 551.7L527.5 551.3L527.3 551.0L527.0 550.7L526.7 550.6L526.3 550.6L524.1 551.2ZM533.7 553.3L534.0 553.1L534.2 552.8L534.3 552.4L534.3 552.0L533.6 550.1L533.5 549.8L533.2 549.6L532.3 549.1L531.8 549.0L531.4 549.1L530.3 549.6L530.1 549.8L529.9 550.1L529.8 550.5L529.7 552.2L529.8 552.6L530.0 552.9L530.3 553.1L530.7 553.2L533.3 553.3ZM537.6 554.0L538.0 553.9L541.1 553.1L541.5 552.9L541.7 552.6L542.2 552.0L542.3 551.4L542.3 550.0L542.2 549.6L542.0 549.3L541.7 549.1L539.2 547.9L538.7 547.8L538.3 547.9L536.2 549.1L535.9 549.3L535.7 549.6L535.7 549.9L535.7 550.3L536.7 553.3L536.9 553.6L537.2 553.8L537.3 553.8ZM544.7 550.2L544.9 550.6L545.2 550.8L545.5 550.9L548.7 551.3L549.2 551.3L549.5 551.1L549.8 550.8L549.9 550.4L549.9 548.9L549.8 548.5L549.5 548.1L549.1 547.9L547.1 547.5L546.7 547.5L546.4 547.6L546.1 547.8L544.9 549.1L544.7 549.4L544.6 549.7L544.6 549.9ZM553.2 548.2L552.9 548.4L552.6 548.7L552.6 549.1L552.5 551.8L552.6 552.2L552.8 552.5L553.1 552.7L553.5 552.8L553.8 552.8L554.2 552.6L554.4 552.3L554.5 552.0L555.0 549.3L554.9 548.9L554.7 548.5L554.4 548.2L554.0 548.1L553.6 548.1ZM557.0 552.1L557.2 552.4L557.5 552.7L557.9 552.8L558.3 552.8L558.6 552.6L559.7 551.7L559.9 551.4L560.1 551.0L560.0 550.7L559.8 550.3L559.0 549.4L558.7 549.1L558.4 549.0L558.0 549.1L557.7 549.2L557.4 549.5L557.3 549.9L557.0 551.7ZM566.0 552.0L566.4 552.1L566.8 551.9L567.1 551.7L569.4 548.8L569.6 548.4L569.6 548.1L569.5 547.7L569.3 547.4L568.9 547.2L567.6 546.7L567.2 546.7L566.9 546.8L566.6 547.0L566.4 547.3L565.0 550.3L564.9 550.7L565.0 551.1L565.3 551.5L565.7 551.8ZM570.1 551.6L570.1 552.0L570.2 552.4L570.4 552.7L570.7 552.9L573.6 553.8L573.9 553.9L574.2 553.8L574.5 553.6L574.7 553.5L575.0 553.2L575.1 552.9L575.1 552.5L575.0 552.2L574.7 551.9L572.5 550.1L572.2 549.9L571.8 549.9L571.4 550.0L571.1 550.2L570.3 551.3ZM579.3 551.7L579.5 552.1L579.8 552.4L580.6 552.9L580.9 553.0L581.2 553.0L583.6 552.6L584.0 552.4L584.3 552.2L584.4 551.8L585.1 548.5L585.1 548.1L584.9 547.7L584.6 547.4L584.3 547.3L583.9 547.3L580.7 548.2L580.4 548.4L580.1 548.6L580.0 548.9L579.3 551.3ZM587.2 550.7L587.4 551.1L587.7 551.4L588.0 551.5L588.4 551.5L590.5 551.0L590.8 550.9L591.1 550.6L591.3 550.2L591.3 550.1L591.3 549.7L591.1 549.3L590.8 549.0L590.4 548.9L588.4 548.8L588.1 548.8L587.8 549.0L587.5 549.2L587.4 549.6L587.2 550.3ZM598.3 549.9L598.2 549.5L597.9 549.3L595.6 547.8L595.2 547.6L594.8 547.7L594.4 547.8L594.0 548.2L593.8 548.5L593.7 548.8L593.2 551.3L593.2 551.7L593.3 552.0L594.2 553.3L594.5 553.6L594.9 553.8L595.3 553.7L597.4 553.1L597.7 552.9L598.0 552.7L598.1 552.3L598.3 550.2ZM516.2 560.6L516.5 560.8L516.9 560.8L517.3 560.6L518.4 559.8L518.6 559.5L518.8 559.1L518.7 558.6L518.3 557.7L518.1 557.4L517.8 557.2L517.5 557.1L517.1 557.1L516.8 557.2L516.5 557.3L516.2 557.6L516.1 557.9L515.7 559.5L515.7 559.9L515.9 560.3L515.9 560.4ZM521.5 558.2L521.8 558.5L522.2 558.5L522.9 558.5L523.2 558.4L523.5 558.3L523.8 558.0L524.0 557.7L524.1 557.3L524.1 556.9L523.9 556.6L522.2 554.9L521.9 554.6L521.5 554.6L521.1 554.7L520.7 554.9L520.6 555.0L520.4 555.4L520.4 555.7L520.5 556.1L521.3 557.9ZM528.1 556.8L528.1 557.1L528.3 557.5L528.5 557.8L529.1 558.2L529.4 558.4L529.8 558.4L530.1 558.3L530.4 558.1L531.6 557.0L531.8 556.7L531.9 556.3L531.9 555.9L531.7 555.6L531.3 555.3L531.0 555.3L529.7 555.2L529.3 555.3L529.0 555.4L528.8 555.7L528.3 556.4ZM539.3 555.7L539.0 555.9L538.9 556.3L538.8 556.6L538.9 556.9L541.2 561.2L541.4 561.5L541.7 561.7L542.1 561.8L542.5 561.7L542.8 561.4L544.1 560.1L544.3 559.7L544.3 559.3L544.2 558.9L542.1 555.6L541.8 555.3L541.4 555.1L541.0 555.1L539.6 555.5ZM544.6 553.3L544.2 553.4L544.0 553.7L543.8 554.0L543.8 554.4L544.0 554.8L546.1 558.2L546.3 558.4L546.6 558.6L547.0 558.6L548.9 558.6L549.4 558.4L550.6 557.7L550.9 557.5L551.0 557.2L551.4 556.1L551.5 555.7L551.4 555.2L550.9 554.5L550.6 554.1L550.2 554.0L544.9 553.2ZM556.4 561.5L556.7 561.6L557.1 561.6L557.5 561.4L559.3 560.3L559.5 560.0L559.7 559.7L559.7 559.3L559.6 558.9L557.7 556.0L557.4 555.8L557.1 555.6L556.8 555.6L555.7 555.6L555.4 555.6L553.9 556.1L553.5 556.3L553.2 556.7L553.0 557.4L552.9 557.8L553.0 558.1L553.2 558.4L556.0 561.2ZM563.0 552.4L562.7 552.4L562.4 552.4L562.1 552.6L559.9 554.3L559.7 554.6L559.6 554.9L559.6 555.3L559.7 555.7L561.6 558.6L561.9 558.9L562.3 559.1L563.5 559.2L563.9 559.2L564.2 559.0L564.5 558.6L564.6 558.2L564.8 554.3L564.7 553.9L564.4 553.5L563.3 552.6ZM567.7 554.2L567.3 554.2L567.0 554.5L566.8 554.8L566.7 555.1L566.6 557.7L566.7 558.1L566.8 558.4L567.1 558.6L567.5 558.7L571.1 559.3L571.5 559.3L571.8 559.2L572.0 558.9L572.2 558.6L572.8 556.9L572.8 556.5L572.7 556.1L572.5 555.8L572.2 555.6L568.1 554.2ZM574.5 559.1L574.6 559.5L574.9 559.8L575.3 560.0L575.8 560.0L578.8 559.1L579.2 558.9L579.4 558.6L579.5 558.1L579.5 555.7L579.4 555.3L579.2 555.0L578.9 554.8L578.3 554.5L577.9 554.4L577.6 554.4L577.2 554.6L575.6 555.9L575.3 556.3L574.6 558.7ZM582.6 555.4L582.3 555.7L582.1 556.0L582.1 556.3L582.1 558.8L582.2 559.2L582.5 559.5L582.8 559.7L583.2 559.8L583.6 559.7L583.9 559.4L585.5 557.5L585.7 557.1L585.7 556.6L585.5 556.2L585.0 555.5L584.8 555.3L584.4 555.1L584.1 555.1L582.9 555.3ZM588.3 554.1L588.0 554.4L587.9 554.7L587.9 555.1L588.1 555.5L588.4 555.9L588.6 556.1L590.5 557.3L590.9 557.5L591.3 557.5L591.7 557.3L591.9 556.9L592.6 555.6L592.7 555.3L592.7 554.9L592.5 554.6L592.0 553.8L591.7 553.5L591.3 553.4L590.9 553.4L588.7 553.9ZM596.0 555.8L595.7 556.1L595.6 556.5L595.6 556.9L595.8 557.2L596.0 557.5L596.4 557.6L598.0 558.0L598.4 558.0L598.7 557.9L599.0 557.6L599.2 557.2L599.2 556.9L599.1 556.1L598.9 555.6L598.8 555.5L598.5 555.3L598.2 555.2L597.8 555.2L596.3 555.7ZM525.7 563.6L525.9 563.9L526.2 564.1L526.6 564.2L527.0 564.1L527.3 563.9L527.5 563.6L528.2 561.8L528.3 561.4L528.1 561.0L527.9 560.6L527.1 560.1L526.7 559.9L526.3 559.9L525.9 560.1L525.8 560.1L525.5 560.5L525.4 561.0L525.6 563.3ZM538.1 559.5L537.7 559.3L537.3 559.3L536.9 559.5L536.6 559.8L535.6 561.6L535.5 562.0L535.6 562.4L535.7 562.7L536.2 563.2L536.4 563.4L537.9 564.4L538.2 564.6L538.6 564.6L538.9 564.5L539.5 564.3L539.8 564.0L540.1 563.7L540.1 563.3L540.0 562.9L538.4 559.8ZM543.3 563.9L543.2 564.3L543.3 564.6L543.5 564.9L545.7 567.3L546.0 567.5L546.4 567.6L546.8 567.5L547.1 567.3L547.4 566.9L548.6 563.7L548.7 563.3L548.6 561.5L548.5 561.2L548.3 560.9L547.9 560.7L547.6 560.6L546.7 560.6L546.3 560.7L546.0 560.9L543.5 563.6ZM552.3 560.6L551.9 560.6L551.5 560.7L551.1 560.9L550.9 561.2L550.9 561.6L550.9 562.4L551.1 562.9L551.4 563.2L552.1 563.6L552.4 563.8L552.8 563.8L553.2 563.6L553.5 563.3L553.6 563.0L553.8 562.6L553.7 562.2L553.5 561.8L552.6 560.9ZM559.1 563.0L559.0 563.4L559.0 563.8L559.5 565.0L559.7 565.3L560.0 565.6L560.3 565.7L562.5 565.9L562.9 565.8L563.2 565.6L563.5 565.3L563.6 564.8L563.4 562.3L563.3 562.0L563.2 561.7L562.9 561.5L562.5 561.4L561.9 561.3L561.6 561.3L561.3 561.5L559.4 562.6ZM566.3 560.5L566.0 560.6L565.7 560.9L565.5 561.2L565.5 561.5L565.7 564.6L565.7 564.9L566.0 565.2L566.3 565.4L566.6 565.5L568.6 565.6L569.0 565.5L569.3 565.2L569.5 564.9L570.4 562.2L570.4 561.8L570.3 561.4L570.0 561.1L569.6 561.0L566.7 560.5ZM573.9 563.2L573.5 563.0L573.1 562.9L572.7 563.0L572.4 563.3L572.2 563.6L571.6 565.5L571.6 565.9L571.7 566.2L571.9 566.6L572.2 566.8L572.6 567.1L573.0 567.1L573.4 567.0L573.7 566.7L574.5 565.6L574.6 565.3L574.7 564.9L574.6 564.6L574.1 563.5ZM579.3 564.1L580.3 563.5L580.6 563.3L580.8 562.9L580.9 562.5L580.7 562.1L580.6 562.0L580.4 561.7L580.0 561.5L579.5 561.6L577.5 562.1L577.2 562.3L576.9 562.6L576.8 563.1L576.9 563.5L576.9 563.5L577.1 563.8L577.4 564.0L577.7 564.1L578.8 564.2ZM584.8 562.6L584.8 563.0L584.9 563.4L585.2 563.7L586.2 564.4L586.6 564.5L586.9 564.5L587.3 564.4L589.6 563.2L589.9 563.0L590.1 562.7L590.2 562.3L590.1 560.6L590.0 560.1L589.7 559.8L588.7 559.1L588.3 559.0L588.0 559.0L587.6 559.1L587.4 559.3L585.0 562.2ZM593.5 559.6L593.2 559.7L592.9 559.9L592.7 560.2L592.7 560.6L592.7 562.4L592.8 562.8L593.0 563.0L593.2 563.3L594.3 563.8L594.6 563.9L595.7 564.2L596.1 564.2L596.5 564.0L596.7 563.7L597.9 561.9L598.1 561.5L598.0 561.2L597.9 560.8L597.6 560.5L597.3 560.4L593.9 559.6ZM599.7 567.6L600.0 567.8L600.6 568.0L601.0 568.0L601.4 567.8L601.7 567.5L603.3 565.0L603.4 564.6L603.4 564.2L603.2 563.9L601.8 562.1L601.5 561.9L601.2 561.7L600.8 561.8L600.5 561.9L600.2 562.2L598.4 565.0L598.2 565.4L598.3 565.8L598.4 566.2L599.5 567.4ZM568.0 568.1L567.6 568.3L567.4 568.7L567.3 569.0L567.4 569.4L567.6 569.8L568.0 570.1L568.3 570.3L568.7 570.4L569.0 570.3L569.3 570.2L569.6 569.9L569.8 569.6L569.9 569.1L569.8 568.7L569.6 568.3L569.6 568.3L569.3 568.1L568.9 568.1L568.4 568.0ZM578.6 566.8L578.4 566.5L578.1 566.3L577.8 566.2L577.2 566.2L576.9 566.2L576.6 566.3L576.3 566.6L575.5 567.8L575.3 568.2L575.3 568.6L575.5 569.0L577.2 571.0L577.5 571.2L577.9 571.3L578.3 571.3L578.7 571.0L578.9 570.7L578.9 570.3L578.7 567.1ZM581.1 566.2L580.9 566.6L580.9 566.9L581.1 569.9L581.3 570.4L581.6 570.7L582.0 570.9L582.4 570.9L582.8 570.9L583.1 570.7L584.4 569.7L584.6 569.4L584.8 569.1L585.0 567.5L585.0 567.1L584.9 566.8L584.6 566.5L583.3 565.6L582.9 565.4L582.6 565.4L582.2 565.5L581.4 566.0ZM587.8 567.0L587.6 567.5L587.3 569.1L587.3 569.5L587.5 569.8L587.7 570.1L588.9 570.9L589.3 571.1L589.7 571.1L590.8 570.8L591.1 570.6L591.4 570.4L591.5 570.1L592.5 566.4L592.5 566.0L592.3 565.6L592.0 565.3L592.0 565.3L591.5 565.2L591.0 565.3L588.1 566.7ZM597.5 568.7L597.5 568.3L597.3 567.9L596.6 567.0L596.3 566.8L596.0 566.7L595.7 566.6L595.4 566.6L595.0 566.8L594.7 567.0L594.6 567.4L593.8 570.3L593.8 570.7L593.9 571.1L594.2 571.4L594.5 571.6L594.9 571.8L595.3 571.7L595.6 571.6L595.9 571.3L597.4 569.1ZM605.2 570.6L605.6 570.7L606.0 570.5L606.3 570.2L606.5 569.8L607.1 566.5L607.1 566.1L606.9 565.7L606.7 565.5L606.3 565.3L605.9 565.3L605.8 565.4L605.5 565.5L605.2 565.8L603.7 568.3L603.6 568.7L603.6 569.1L603.9 569.5L604.8 570.4ZM572.0 573.0L573.4 574.6L573.4 574.6L573.8 574.6L574.2 574.4L574.5 574.1L574.8 573.5L574.9 573.2L574.8 572.8L574.6 572.4L574.2 571.9L573.9 571.6L573.5 571.5L573.1 571.5L572.8 571.7L572.6 572.0L572.1 572.7ZM580.6 577.8L581.0 577.7L581.8 577.4L582.2 577.2L582.5 576.8L582.5 576.3L582.2 574.2L582.1 573.8L581.8 573.5L581.4 573.3L580.2 573.2L579.8 573.2L578.7 573.5L578.4 573.7L578.1 574.0L577.5 575.1L577.4 575.5L577.5 575.9L577.6 576.2L578.0 576.5L580.2 577.7ZM586.0 578.1L586.4 578.1L586.8 577.9L588.4 576.6L588.6 576.3L588.8 575.9L588.7 575.6L588.2 573.4L588.0 573.1L587.8 572.9L586.6 572.0L586.2 571.8L585.8 571.8L585.4 572.0L584.8 572.5L584.5 572.8L584.4 573.1L584.4 573.4L584.8 577.0L584.9 577.3L585.2 577.6L585.6 577.9ZM591.1 575.4L591.3 575.6L591.6 575.7L593.3 576.2L593.7 576.2L594.0 576.1L594.3 575.8L594.5 575.5L594.6 575.2L594.6 574.9L594.5 574.6L594.3 574.3L594.1 574.1L592.5 573.1L592.1 572.9L591.7 572.9L591.4 573.0L591.1 573.2L590.8 573.5L590.7 573.8L590.7 574.2L590.9 575.0ZM603.2 575.1L603.6 573.2L603.7 572.9L603.6 572.5L603.4 572.3L601.3 570.3L600.9 570.1L600.4 569.9L600.0 569.9L599.6 570.0L599.3 570.3L597.0 573.8L596.9 574.0L596.9 574.3L596.9 575.8L597.0 576.1L597.1 576.4L597.4 576.7L599.6 577.8L600.0 577.9L600.5 577.8L600.8 577.6L602.9 575.6ZM608.7 577.3L609.1 577.3L609.5 577.1L609.8 576.8L609.9 576.4L610.1 574.1L610.0 573.7L609.9 573.4L609.6 573.1L609.2 573.0L607.8 572.9L607.4 572.9L606.7 573.2L606.4 573.3L606.2 573.6L606.1 573.9L605.9 574.7L605.8 575.1L606.0 575.5L606.3 575.7L608.3 577.2ZM587.5 579.9L587.4 580.3L587.4 580.7L587.6 581.0L588.2 581.6L588.6 581.8L589.0 581.9L591.0 581.8L591.4 581.7L591.7 581.5L591.9 581.2L592.7 579.3L592.8 578.8L592.7 578.4L592.4 578.1L592.0 577.9L590.8 577.6L590.3 577.6L589.9 577.8L587.7 579.5ZM596.0 578.8L595.6 578.8L595.3 579.1L595.0 579.4L594.0 581.8L593.9 582.1L594.0 582.5L594.1 582.8L595.0 583.8L595.3 584.1L595.7 584.2L596.1 584.1L596.5 583.8L598.6 581.4L598.8 581.1L598.8 580.7L598.7 580.4L598.6 580.1L598.3 579.8L596.4 578.9ZM602.0 579.8L601.9 580.2L602.0 580.6L602.2 580.9L602.2 580.9L602.6 581.1L607.6 582.8L608.0 582.9L608.4 582.7L608.7 582.5L608.9 582.1L608.9 581.6L608.6 580.8L608.5 580.5L608.3 580.3L604.9 578.0L604.6 577.8L604.3 577.8L604.0 577.9L603.7 578.1L602.2 579.5ZM614.3 579.7L614.2 579.3L614.0 578.9L613.7 578.7L613.2 578.6L612.0 578.7L611.6 578.8L611.2 579.0L610.8 579.6L610.6 580.0L610.6 580.4L610.8 581.0L611.0 581.4L611.3 581.7L611.6 581.8L612.4 581.9L612.8 581.8L613.1 581.7L613.3 581.4L614.1 580.1ZM617.0 583.5L617.3 583.5L617.7 583.5L618.0 583.3L618.2 583.0L619.0 581.6L619.1 581.2L619.1 580.9L619.0 580.5L618.7 580.3L618.4 580.1L618.0 579.9L617.6 579.9L617.3 580.1L617.0 580.4L616.2 581.7L616.0 582.1L616.0 582.4L616.1 582.7L616.3 583.0L616.7 583.3ZM589.3 586.0L589.6 586.4L592.2 588.6L592.6 588.8L592.9 588.8L593.3 588.7L593.6 588.4L594.2 587.8L594.3 587.5L594.4 587.1L594.3 586.8L594.2 586.5L592.0 584.0L591.7 583.7L591.2 583.6L590.2 583.7L589.8 583.8L589.5 584.0L589.3 584.3L589.2 584.7L589.2 585.6ZM597.6 586.2L597.6 586.6L597.7 587.0L597.9 587.3L598.2 587.5L600.2 588.2L600.6 588.3L601.0 588.2L601.2 588.1L601.5 587.8L601.7 587.4L601.7 587.0L601.2 584.5L601.0 584.1L600.8 583.9L600.4 583.7L600.1 583.7L599.7 583.8L599.4 584.0L597.8 585.9ZM604.1 583.9L603.7 584.1L603.4 584.3L603.3 584.7L603.2 585.1L603.7 587.1L603.8 587.4L604.0 587.7L604.3 587.8L605.6 588.2L606.0 588.2L606.4 588.1L607.2 587.6L607.5 587.2L607.6 586.8L607.6 585.8L607.6 585.4L607.3 585.0L607.0 584.8L604.6 584.0ZM612.9 583.9L612.6 583.8L611.3 583.7L610.8 583.8L610.5 584.0L609.9 584.7L609.8 584.9L609.7 585.3L609.6 586.6L609.7 586.9L609.8 587.3L610.1 587.5L613.3 589.6L613.6 589.7L614.0 589.7L614.4 589.6L614.6 589.3L615.9 587.8L616.0 587.4L616.1 587.1L616.0 586.7L615.7 586.4L613.2 584.1ZM599.6 590.6L599.3 590.3L599.0 590.1L596.6 589.3L596.2 589.2L595.8 589.3L595.5 589.6L594.4 591.0L594.2 591.4L594.1 592.0L594.1 592.3L594.2 592.6L594.4 593.0L594.6 593.3L595.3 593.8L595.7 594.0L596.1 594.0L599.0 593.3L599.4 593.2L599.6 592.9L599.8 592.6L599.8 592.2L599.7 591.0ZM603.1 589.5L602.8 589.6L602.4 589.8L602.0 590.0L601.8 590.4L601.8 590.8L602.0 592.8L602.1 593.1L602.3 593.4L602.6 593.6L602.6 593.6L602.9 593.7L603.3 593.7L603.6 593.6L604.2 593.1L604.6 592.8L604.7 592.4L604.9 590.8L604.9 590.5L604.8 590.1L604.6 589.9L604.2 589.7L603.5 589.5ZM608.8 590.2L608.4 590.2L608.1 590.4L607.8 590.7L607.7 591.0L607.6 591.8L607.6 592.2L607.8 592.6L608.1 592.8L610.1 593.8L612.1 592.2L611.9 592.1L609.2 590.3ZM601.4 596.6L601.1 596.2L600.7 596.0L600.2 596.0L598.7 596.4L598.3 596.6L598.0 596.9L597.9 597.3L597.9 597.7L598.1 598.2L598.3 598.6L598.7 598.9L600.1 599.4L601.5 598.8L601.5 598.8L601.5 598.4L601.5 597.0Z" fill="#e7e4d1" stroke="#2c2436" stroke-width="0.7"/></svg><div class="a" style="left:0;top:0;width:1024px;height:22px;background:#000"></div><div class="a" style="left:0;top:22px;width:1024px;height:19px;background:#d3d3d3"></div><svg class="a" style="left:0;top:0" width="120" height="41"><rect x="5.0" y="27.0" width="2.2" height="2.2" rx="0.6" fill="#3c3c3c"/><rect x="5.0" y="30.3" width="2.2" height="2.2" rx="0.6" fill="#3c3c3c"/><rect x="5.0" y="33.6" width="2.2" height="2.2" rx="0.6" fill="#3c3c3c"/><rect x="8.3" y="27.0" width="2.2" height="2.2" rx="0.6" fill="#3c3c3c"/><rect x="8.3" y="30.3" width="2.2" height="2.2" rx="0.6" fill="#3c3c3c"/><rect x="8.3" y="33.6" width="2.2" height="2.2" rx="0.6" fill="#3c3c3c"/><rect x="11.6" y="27.0" width="2.2" height="2.2" rx="0.6" fill="#3c3c3c"/><rect x="11.6" y="30.3" width="2.2" height="2.2" rx="0.6" fill="#3c3c3c"/><rect x="11.6" y="33.6" width="2.2" height="2.2" rx="0.6" fill="#3c3c3c"/><path d="M25 27 L30.5 27 L33 29.5 L33 36 L25 36 Z" fill="#555"/><path d="M30.5 27 L30.5 29.5 L33 29.5" fill="#888"/><path d="M36.3 30 L39.7 30 L38 32.2 Z" fill="#444"/><path d="M51.5 27.2 L59.8 27.2 L59.8 35.5 L53 35.5 L51.5 34 Z" fill="#8c8c8c"/><rect x="53.5" y="27.8" width="4.3" height="2.6" fill="#d3d3d3"/><rect x="53.3" y="32.3" width="4.7" height="3" fill="#d3d3d3"/><path d="M78.6 34.6 C78.6 30.5 76 29.6 72.8 30.6" stroke="#8c8c8c" stroke-width="1.5" fill="none"/><path d="M71.3 30.9 L74.6 28 L74.9 33 Z" fill="#8c8c8c"/><path d="M83 29.6 L87.2 29.6 L85.1 32 Z" fill="#8c8c8c"/><path d="M94.6 34.6 C94.6 30.5 97.2 29.6 100.4 30.6" stroke="#8c8c8c" stroke-width="1.5" fill="none"/><path d="M101.9 30.9 L98.6 28 L98.3 33 Z" fill="#8c8c8c"/><path d="M106.4 29.6 L110.6 29.6 L108.5 32 Z" fill="#8c8c8c"/></svg><div class="a" style="left:116.6px;top:24px;width:128px;height:17px;background:#bebebe;border-radius:3px 3px 0 0"></div><svg class="a" style="left:141.0px;top:28px" width="10" height="9"><path d="M0.5 2.2 L3.5 0.5 L9.5 0.8 L9.5 6.8 L6.5 8.5 L0.5 8.2 Z" fill="#8e8e8e"/><path d="M0.5 2.2 L3.5 0.5 L9.5 0.8 L6.5 2.5 Z" fill="#b4b4b4"/><path d="M0.5 2.2 L6.5 2.5 L6.5 8.5 L0.5 8.2 Z" fill="#a2a2a2"/></svg><div id="tab0" style="position:absolute;left:153.20px;top:28.94px;font-size:8.10px;line-height:8.10px;color:#5e5e5e;font-weight:normal;white-space:nowrap;transform-origin:0 0;transform:scaleX(0.8661);-webkit-text-stroke:0.3px currentColor;">LARGE DOWEL v2</div><svg class="a" style="left:235.2px;top:29.5px" width="6" height="6"><path d="M0.4 0.4L5.6 5.6M5.6 0.4L0.4 5.6" stroke="#6e6e6e" stroke-width="0.9"/></svg><div class="a" style="left:247.0px;top:24px;width:128px;height:17px;background:#bebebe;border-radius:3px 3px 0 0"></div><svg class="a" style="left:283.8px;top:28px" width="10" height="9"><path d="M0.5 2.2 L3.5 0.5 L9.5 0.8 L9.5 6.8 L6.5 8.5 L0.5 8.2 Z" fill="#8e8e8e"/><path d="M0.5 2.2 L3.5 0.5 L9.5 0.8 L6.5 2.5 Z" fill="#b4b4b4"/><path d="M0.5 2.2 L6.5 2.5 L6.5 8.5 L0.5 8.2 Z" fill="#a2a2a2"/></svg><div id="tab1" style="position:absolute;left:296.00px;top:28.94px;font-size:8.10px;line-height:8.10px;color:#5e5e5e;font-weight:normal;white-space:nowrap;transform-origin:0 0;transform:scaleX(0.8983);-webkit-text-stroke:0.3px currentColor;">DOWEL v1</div><svg class="a" style="left:365.5px;top:29.5px" width="6" height="6"><path d="M0.4 0.4L5.6 5.6M5.6 0.4L0.4 5.6" stroke="#6e6e6e" stroke-width="0.9"/></svg><div class="a" style="left:377.4px;top:24px;width:128px;height:17px;background:#bebebe;border-radius:3px 3px 0 0"></div><svg class="a" style="left:401.3px;top:28px" width="10" height="9"><path d="M0.5 2.2 L3.5 0.5 L9.5 0.8 L9.5 6.8 L6.5 8.5 L0.5 8.2 Z" fill="#8e8e8e"/><path d="M0.5 2.2 L3.5 0.5 L9.5 0.8 L6.5 2.5 Z" fill="#b4b4b4"/><path d="M0.5 2.2 L6.5 2.5 L6.5 8.5 L0.5 8.2 Z" fill="#a2a2a2"/></svg><div id="tab2" style="position:absolute;left:413.60px;top:28.94px;font-size:8.10px;line-height:8.10px;color:#5e5e5e;font-weight:normal;white-space:nowrap;transform-origin:0 0;transform:scaleX(0.8843);-webkit-text-stroke:0.3px currentColor;">SMALL DOWEL v1</div><svg class="a" style="left:495.4px;top:29.5px" width="6" height="6"><path d="M0.4 0.4L5.6 5.6M5.6 0.4L0.4 5.6" stroke="#6e6e6e" stroke-width="0.9"/></svg><div class="a" style="left:507.8px;top:24px;width:128px;height:17px;background:#bebebe;border-radius:3px 3px 0 0"></div><svg class="a" style="left:516.4px;top:28px" width="10" height="9"><path d="M0.5 2.2 L3.5 0.5 L9.5 0.8 L9.5 6.8 L6.5 8.5 L0.5 8.2 Z" fill="#8e8e8e"/><path d="M0.5 2.2 L3.5 0.5 L9.5 0.8 L6.5 2.5 Z" fill="#b4b4b4"/><path d="M0.5 2.2 L6.5 2.5 L6.5 8.5 L0.5 8.2 Z" fill="#a2a2a2"/></svg><div id="tab3" style="position:absolute;left:528.70px;top:28.94px;font-size:8.10px;line-height:8.10px;color:#5e5e5e;font-weight:normal;white-space:nowrap;transform-origin:0 0;transform:scaleX(0.9918);-webkit-text-stroke:0.3px currentColor;">Voronoi T-Shirt 2.5MM v6</div><svg class="a" style="left:626.3px;top:29.5px" width="6" height="6"><path d="M0.4 0.4L5.6 5.6M5.6 0.4L0.4 5.6" stroke="#6e6e6e" stroke-width="0.9"/></svg><div class="a" style="left:638.2px;top:24px;width:128px;height:17px;background:#bebebe;border-radius:3px 3px 0 0"></div><svg class="a" style="left:645.5px;top:28px" width="10" height="9"><path d="M0.5 2.2 L3.5 0.5 L9.5 0.8 L9.5 6.8 L6.5 8.5 L0.5 8.2 Z" fill="#8e8e8e"/><path d="M0.5 2.2 L3.5 0.5 L9.5 0.8 L6.5 2.5 Z" fill="#b4b4b4"/><path d="M0.5 2.2 L6.5 2.5 L6.5 8.5 L0.5 8.2 Z" fill="#a2a2a2"/></svg><div id="tab4" style="position:absolute;left:657.80px;top:28.94px;font-size:8.10px;line-height:8.10px;color:#5e5e5e;font-weight:normal;white-space:nowrap;transform-origin:0 0;transform:scaleX(0.9706);-webkit-text-stroke:0.3px currentColor;">Light Component Final v12</div><svg class="a" style="left:756.8px;top:29.5px" width="6" height="6"><path d="M0.4 0.4L5.6 5.6M5.6 0.4L0.4 5.6" stroke="#6e6e6e" stroke-width="0.9"/></svg><div class="a" style="left:768.6px;top:24px;width:128px;height:17px;background:#f1f1f1;border-radius:3px 3px 0 0"></div><svg class="a" style="left:783.7px;top:28px" width="10" height="9"><path d="M0.5 2.2 L3.5 0.5 L9.5 0.8 L9.5 6.8 L6.5 8.5 L0.5 8.2 Z" fill="#7a7a7a"/><path d="M0.5 2.2 L3.5 0.5 L9.5 0.8 L6.5 2.5 Z" fill="#b0b0b0"/><path d="M0.5 2.2 L6.5 2.5 L6.5 8.5 L0.5 8.2 Z" fill="#9a9a9a"/></svg><div id="tab5" style="position:absolute;left:796.10px;top:28.94px;font-size:8.10px;line-height:8.10px;color:#333;font-weight:normal;white-space:nowrap;transform-origin:0 0;transform:scaleX(0.8996);-webkit-text-stroke:0.3px currentColor;">VORONOI LAMPv4 v11</div><svg class="a" style="left:887.2px;top:29.5px" width="6" height="6"><path d="M0.4 0.4L5.6 5.6M5.6 0.4L0.4 5.6" stroke="#555" stroke-width="0.9"/></svg><div class="a" style="left:899.2px;top:24.4px;width:18px;height:16.5px;background:#bdbdbd;border-radius:2px"></div><svg class="a" style="left:903px;top:27px" width="11" height="11"><path d="M5.5 1V10M1 5.5H10" stroke="#777" stroke-width="1.4"/></svg><svg class="a" style="left:896px;top:22px" width="128" height="20" viewBox="896 22 128 20"><circle cx="927.2" cy="31.4" r="4.6" fill="#dadada" stroke="#555" stroke-width="1.3"/><path d="M924.5 29.5 C925.5 28 927 28.5 928 27.5 L930 28.5 C930.5 30 929.5 31 930.5 32.5 C930 34.5 928 35 927 34.5 C926.5 33 925 32.5 924.5 31Z" fill="#555"/><circle cx="946.6" cy="31.4" r="5" fill="#8e8e8e"/><circle cx="946.6" cy="31.4" r="3.6" fill="#555"/><path d="M946.6 29.2 V31.6 H948.6" stroke="#e0e0e0" stroke-width="0.9" fill="none"/><path d="M962.8 34.2 H970.4 L969.2 32.6 V30.2 C969.2 28.2 968 27.2 966.6 27.2 C965.2 27.2 964 28.2 964 30.2 V32.6Z" fill="#4a4a4a"/><circle cx="966.6" cy="35.4" r="1.1" fill="#4a4a4a"/><rect x="966.1" y="26.2" width="1" height="1.4" fill="#4a4a4a"/><circle cx="986" cy="31.4" r="4.9" fill="#555"/><path d="M984.3 30 C984.3 27.9 987.8 27.9 987.8 30 C987.8 31.3 986 31.4 986 32.8" stroke="#e6e6e6" stroke-width="1.2" fill="none"/><circle cx="986" cy="34.3" r="0.75" fill="#e6e6e6"/><circle cx="1009" cy="31.4" r="7.2" fill="#8ea4c0"/><clipPath id="avc"><circle cx="1009" cy="31.4" r="7.2"/></clipPath><g clip-path="url(#avc)" fill="#4d5f78"><ellipse cx="1009" cy="29.6" rx="2.8" ry="3.4"/><path d="M1002.5 39 C1003.2 34.8 1005.8 33.4 1009 33.4 C1012.2 33.4 1014.8 34.8 1015.5 39Z"/></g></svg><div class="a" style="left:0;top:41px;width:1024px;height:48px;background:#f1f1f1"></div><div class="a" style="left:0;top:89px;width:1024px;height:1px;background:#e2e2e2"></div><div class="a" style="left:0;top:90px;width:1024px;height:2px;background:linear-gradient(#f0f0f0,#fff)"></div><div class="a" style="left:6.9px;top:47.3px;width:65px;height:36.1px;border:1px solid #d8d8d8;border-radius:3.5px;box-sizing:border-box;background:#f2f2f2"></div><div id="design" style="position:absolute;left:24.60px;top:60.93px;font-size:7.40px;line-height:7.40px;color:#222;font-weight:normal;white-space:nowrap;transform-origin:0 0;transform:scaleX(0.8783);-webkit-text-stroke:0.3px currentColor;">DESIGN</div><svg style="position:absolute;left:51.8px;top:63.9px" width="3.4" height="2.2"><path d="M0 0L3.4 0L1.7 2.2Z" fill="#222"/></svg><div id="t_solid" style="position:absolute;left:89.10px;top:43.80px;font-size:7.68px;line-height:7.68px;color:#1f8fd0;font-weight:normal;white-space:nowrap;transform-origin:0 0;transform:scaleX(0.9058);-webkit-text-stroke:0.3px currentColor;">SOLID</div><div id="t_surface" style="position:absolute;left:135.00px;top:43.80px;font-size:7.68px;line-height:7.68px;color:#444;font-weight:normal;white-space:nowrap;transform-origin:0 0;transform:scaleX(0.7784);-webkit-text-stroke:0.3px currentColor;">SURFACE</div><div id="t_mesh" style="position:absolute;left:190.20px;top:43.80px;font-size:7.68px;line-height:7.68px;color:#444;font-weight:normal;white-space:nowrap;transform-origin:0 0;transform:scaleX(0.7849);-webkit-text-stroke:0.3px currentColor;">MESH</div><div id="t_form" style="position:absolute;left:234.00px;top:43.80px;font-size:7.68px;line-height:7.68px;color:#444;font-weight:normal;white-space:nowrap;transform-origin:0 0;transform:scaleX(0.7703);-webkit-text-stroke:0.3px currentColor;">FORM</div><div id="t_sheet" style="position:absolute;left:279.80px;top:43.80px;font-size:7.68px;line-height:7.68px;color:#444;font-weight:normal;white-space:nowrap;transform-origin:0 0;transform:scaleX(0.8101);-webkit-text-stroke:0.3px currentColor;">SHEET METAL</div><div id="t_plastic" style="position:absolute;left:349.70px;top:43.80px;font-size:7.68px;line-height:7.68px;color:#444;font-weight:normal;white-space:nowrap;transform-origin:0 0;transform:scaleX(0.7883);-webkit-text-stroke:0.3px currentColor;">PLASTIC</div><div id="t_util" style="position:absolute;left:401.60px;top:43.80px;font-size:7.68px;line-height:7.68px;color:#444;font-weight:normal;white-space:nowrap;transform-origin:0 0;transform:scaleX(0.8045);-webkit-text-stroke:0.3px currentColor;">UTILITIES</div><div class="a" style="left:82.2px;top:53px;width:34.4px;height:1.8px;background:#1f96d8"></div><div id="g_create" style="position:absolute;left:125.00px;top:80.47px;font-size:7.12px;line-height:7.12px;color:#444;font-weight:normal;white-space:nowrap;transform-origin:0 0;transform:scaleX(0.8619);-webkit-text-stroke:0.3px currentColor;">CREATE</div><svg style="position:absolute;left:151.0px;top:82.2px" width="3" height="2"><path d="M0 0L3 0L1.5 2Z" fill="#444"/></svg><div id="g_auto" style="position:absolute;left:216.70px;top:80.47px;font-size:7.12px;line-height:7.12px;color:#444;font-weight:normal;white-space:nowrap;transform-origin:0 0;transform:scaleX(0.9323);-webkit-text-stroke:0.3px currentColor;">AUTOMATE</div><svg style="position:absolute;left:254.5px;top:82.2px" width="3" height="2"><path d="M0 0L3 0L1.5 2Z" fill="#444"/></svg><div id="g_modify" style="position:absolute;left:329.80px;top:80.47px;font-size:7.12px;line-height:7.12px;color:#444;font-weight:normal;white-space:nowrap;transform-origin:0 0;transform:scaleX(0.9262);-webkit-text-stroke:0.3px currentColor;">MODIFY</div><svg style="position:absolute;left:357.2px;top:82.2px" width="3" height="2"><path d="M0 0L3 0L1.5 2Z" fill="#444"/></svg><div id="g_asm" style="position:absolute;left:436.50px;top:80.47px;font-size:7.12px;line-height:7.12px;color:#444;font-weight:normal;white-space:nowrap;transform-origin:0 0;transform:scaleX(0.8144);-webkit-text-stroke:0.3px currentColor;">ASSEMBLE</div><svg style="position:absolute;left:469.7px;top:82.2px" width="3" height="2"><path d="M0 0L3 0L1.5 2Z" fill="#444"/></svg><div id="g_cons" style="position:absolute;left:492.20px;top:80.47px;font-size:7.12px;line-height:7.12px;color:#444;font-weight:normal;white-space:nowrap;transform-origin:0 0;transform:scaleX(0.8736);-webkit-text-stroke:0.3px currentColor;">CONSTRUCT</div><svg style="position:absolute;left:533.7px;top:82.2px" width="3" height="2"><path d="M0 0L3 0L1.5 2Z" fill="#444"/></svg><div id="g_insp" style="position:absolute;left:557.90px;top:80.47px;font-size:7.12px;line-height:7.12px;color:#444;font-weight:normal;white-space:nowrap;transform-origin:0 0;transform:scaleX(0.8120);-webkit-text-stroke:0.3px currentColor;">INSPECT</div><svg style="position:absolute;left:585.9px;top:82.2px" width="3" height="2"><path d="M0 0L3 0L1.5 2Z" fill="#444"/></svg><div id="g_ins" style="position:absolute;left:611.00px;top:80.47px;font-size:7.12px;line-height:7.12px;color:#444;font-weight:normal;white-space:nowrap;transform-origin:0 0;transform:scaleX(0.9248);-webkit-text-stroke:0.3px currentColor;">INSERT</div><svg style="position:absolute;left:635.2px;top:82.2px" width="3" height="2"><path d="M0 0L3 0L1.5 2Z" fill="#444"/></svg><div id="g_sel" style="position:absolute;left:655.00px;top:80.47px;font-size:7.12px;line-height:7.12px;color:#444;font-weight:normal;white-space:nowrap;transform-origin:0 0;transform:scaleX(0.8168);-webkit-text-stroke:0.3px currentColor;">SELECT</div><svg style="position:absolute;left:680.0px;top:82.2px" width="3" height="2"><path d="M0 0L3 0L1.5 2Z" fill="#444"/></svg><div class="a" style="left:208px;top:57px;width:1px;height:29.5px;background:#dcdcdc"></div><div class="a" style="left:266.2px;top:57px;width:1px;height:29.5px;background:#dcdcdc"></div><div class="a" style="left:426px;top:57px;width:1px;height:29.5px;background:#dcdcdc"></div><div class="a" style="left:483.8px;top:57px;width:1px;height:29.5px;background:#dcdcdc"></div><div class="a" style="left:545.6px;top:57px;width:1px;height:29.5px;background:#dcdcdc"></div><div class="a" style="left:602.7px;top:57px;width:1px;height:29.5px;background:#dcdcdc"></div><div class="a" style="left:646.4px;top:57px;width:1px;height:29.5px;background:#dcdcdc"></div><svg class="a" style="left:0;top:41px" width="1024" height="48" viewBox="0 41 1024 48"><path d="M83.2 57.7H97M83.2 73.8H92M82.2 58.7V72.8M98 58.7V68" stroke="#a0a0a0" stroke-width="0.9" fill="none"/><g fill="#4a4a4a"><rect x="81.4" y="57" width="1.7" height="1.7"/><rect x="97.2" y="57" width="1.7" height="1.7"/><rect x="81.4" y="73" width="1.7" height="1.7"/></g><path d="M86.1 62.5V69M86.8 61.8H93.2" stroke="#b0b0b0" stroke-width="0.7" fill="none"/><path d="M86.5 69.6 C90.5 69.2 93.6 66 93.9 62.2" stroke="#555" stroke-width="0.7" fill="none"/><g fill="#3a3a3a"><circle cx="86.1" cy="61.8" r="0.8"/><circle cx="93.9" cy="61.8" r="0.8"/><circle cx="86.1" cy="69.6" r="0.8"/></g><path d="M95.9 67.9V75.7M92 71.8H99.8" stroke="#13a13a" stroke-width="3"/><path d="M107.3 73 L118 73 L121.5 69.5 L121.5 71.8 L118 75.4 L107.3 75.4Z" fill="#c6c6c6"/><path d="M107.3 60.8 L111 57.2 L121.5 57.2 L121.5 69.5 L118 73 L107.3 73 Z" fill="#62abe6"/><path d="M107.3 60.8 L111 57.2 L121.5 57.2 L118 60.8Z" fill="#92caf3"/><path d="M118 60.8L121.5 57.2V69.5L118 73Z" fill="#4a95d6"/><path d="M123.4 72.5V59" stroke="#333" stroke-width="0.8"/><path d="M121.9 60.6L123.4 57.4L124.9 60.6Z" fill="#333"/><path d="M132.3 64.8 C135 61.5 139 60.9 141 60.9 C144 60.9 147.5 62 149.7 64.1 L147.5 64.8 L147.5 73.5 C146 71.5 143.5 70.6 141 70.6 C138.5 70.6 136.5 71.8 135.2 73.5 L132.3 70.5Z" fill="#5ba9e6"/><path d="M132.3 64.8 C135 61.5 139 60.9 141 60.9 C144 60.9 147.5 62 149.7 64.1 L147.5 64.8 C145 63.5 143 63.2 141 63.2 C138.5 63.2 136.5 64 135.2 67.5Z" fill="#8ccbf5"/><path d="M147.5 64.8 L151.1 64.1 L151.1 71.8 L147.5 73.5Z" fill="#fff" stroke="#555" stroke-width="0.6"/><path d="M133.3 60.9 C136 58.6 139 57.6 141 57.6 C144.5 57.6 147.8 58.8 149.7 61.2" stroke="#333" stroke-width="0.8" fill="none"/><path d="M132 61.8 L132.9 59 L135 61.2Z" fill="#222"/><path d="M157.5 60 L160.5 57 L176.8 57 L176.8 72.8 L173.8 75.7 L157.5 75.7Z" fill="#e9e9e9" stroke="#8a8a8a" stroke-width="0.6"/><path d="M173.8 60 L176.8 57 L176.8 72.8 L173.8 75.7Z" fill="#c4c4c4"/><path d="M157.5 60 L160.5 57 L176.8 57 L173.8 60Z" fill="#f6f6f6"/><circle cx="165.6" cy="67.6" r="4.9" fill="#d8d8d8" stroke="#8a8a8a" stroke-width="0.6"/><circle cx="165.6" cy="67.6" r="3.8" fill="#5aa8e4"/><path d="M165.2 63.8 A3.8 3.8 0 0 1 169.4 67.8 C167.5 67.5 166 66 165.2 63.8Z" fill="#fff"/><g stroke="#9a9a9a" stroke-width="0.7"><path d="M187.2 60H195.6M187.2 72.6H195.6M185 62V70.6"/></g><rect x="183.1" y="58.2" width="3.9" height="3.7" fill="#fff" stroke="#666" stroke-width="0.6"/><rect x="195.6" y="58" width="4.3" height="4" fill="#5aa8e4"/><rect x="182.9" y="70.6" width="4.3" height="4" fill="#5aa8e4"/><rect x="195.6" y="70.6" width="4.3" height="4" fill="#5aa8e4"/><path d="M230.8 59.6 L234.6 63.8 M239.2 63.6 L243.4 61.6" stroke="#5aa7e6" stroke-width="1.9" fill="none"/><path d="M234.6 63.8 L239.2 63.6 L236.6 70" stroke="#5aa7e6" stroke-width="1.9" fill="none" stroke-linejoin="round"/><path d="M234.6 63.8 L236.6 70" stroke="#5aa7e6" stroke-width="1.9"/><rect x="228.3" y="57.2" width="3.8" height="3.6" fill="#fff" stroke="#666" stroke-width="0.6"/><circle cx="244.2" cy="61.2" r="2.2" fill="#fff" stroke="#666" stroke-width="0.6"/><circle cx="236.5" cy="72.3" r="2.6" fill="#d6d6d6" stroke="#5aa7e6" stroke-width="1.3"/><circle cx="236.5" cy="72.3" r="1" fill="none" stroke="#888" stroke-width="0.4"/><path d="M274.5 60 L277 57.5 L281 57.5 L281 74 L278 76 L274.5 76Z" fill="#e8e8e8" stroke="#7a7a7a" stroke-width="0.6"/><path d="M278 60 L281 57.5 L286 57.5 L286 73.5 L283 76 L278 76Z" fill="#5aa7e6"/><path d="M283 60L286 57.5V73.5L283 76Z" fill="#3d8fd6"/><path d="M286.5 67 L289 67" stroke="#333" stroke-width="1"/><path d="M288.5 65.2L291.5 67L288.5 68.8Z" fill="#333"/><path d="M299.5 62 L304 57.5 L309 57.5 C314 57.5 318 61.5 318 66.5 L318 72.5 L315 75.5 L299.5 75.5Z" fill="#d6d6d6" stroke="#7a7a7a" stroke-width="0.6"/><path d="M309 57.5 C314 57.5 318 61.5 318 66.5 L315 69.5 C315 64 311 60.5 306 60.5Z" fill="#5aa7e6"/><path d="M315 69.5 L318 66.5 L318 72.5 L315 75.5Z" fill="#a9a9a9"/><path d="M324.5 60 L327.5 57 L343.2 57 L343.2 72.5 L340.2 75.5 L324.5 75.5Z" fill="#d6d6d6" stroke="#7a7a7a" stroke-width="0.6"/><path d="M340.2 60 L343.2 57 L343.2 72.5 L340.2 75.5Z" fill="#a9a9a9"/><rect x="327.5" y="63" width="10" height="10" fill="#f4f4f4"/><path d="M327.5 63 H330 V70.5 H337.5 V73 H327.5Z" fill="#3d8fd6"/><path d="M330 70.5 H337.5 L337.5 73 L333 73Z" fill="#8cc4f0"/><path d="M356.5 60 L358.5 58 L369 58 L369 67 L367 69 L356.5 69Z" fill="#5aa7e6"/><path d="M367 60L369 58V67L367 69Z" fill="#3d8fd6"/><path d="M356.5 60 L358.5 58 L369 58 L367 60Z" fill="#8cc4f0"/><path d="M350.5 66 L352.5 64 L362 64 L362 73.5 L360 75.5 L350.5 75.5Z" fill="#5aa7e6"/><path d="M360 66L362 64V73.5L360 75.5Z" fill="#3d8fd6"/><path d="M376.5 59.5 L378.5 57.5 L394.5 57.5 L394.5 64 L392.5 66 L376.5 66Z" fill="#5aa7e6"/><path d="M392.5 59.5L394.5 57.5V64L392.5 66Z" fill="#3d8fd6"/><path d="M376.5 68.5 L392.5 68.5 L394.5 66.5 L394.5 73.5 L392.5 75.5 L376.5 75.5Z" fill="#d6d6d6" stroke="#7a7a7a" stroke-width="0.5"/><path d="M376 67.5 L395 65" stroke="#5aa7e6" stroke-width="0.9"/><path d="M410.6 58.5V74.5M402.5 66.5H418.7" stroke="#222" stroke-width="1.8"/><path d="M410.6 56.8L407.6 60.6H413.6Z M410.6 76.2L407.6 72.4H413.6Z M401.4 66.5L405.2 63.5V69.5Z M419.9 66.5L416.1 63.5V69.5Z" fill="#222"/><path d="M433.5 59.5 L435.5 57.8 L442 57.8 L442 66 L433.5 66Z" fill="#5aa7e6"/><path d="M433.5 59.5 L435.5 57.8 L442 57.8 L440 59.5Z" fill="#8cc4f0"/><path d="M433.5 66.5 H441.5 V75.5 H433.5Z" fill="#d6d6d6" stroke="#7a7a7a" stroke-width="0.5"/><path d="M442 66.5 L444 64.8 L451 64.8 L451 73.8 L449 75.5 L442 75.5Z" fill="#d6d6d6" stroke="#7a7a7a" stroke-width="0.5"/><circle cx="447.5" cy="61" r="2.3" fill="#f5a418"/><path d="M447.5 56.5V65.5M443 61H452M444.3 57.8L450.7 64.2M450.7 57.8L444.3 64.2" stroke="#f5a418" stroke-width="0.8"/><path d="M460 62 L464 58.5 L466.5 59.5 L466.5 72 L462.5 75 L460 74Z" fill="#d6d6d6" stroke="#7a7a7a" stroke-width="0.6"/><path d="M470 59.5 L473 58.5 L477 62 L477 74 L474.5 75 L470 72Z" fill="#d6d6d6" stroke="#7a7a7a" stroke-width="0.6"/><path d="M466.5 66 L470 64" stroke="#5aa7e6" stroke-width="1.2"/><path d="M506.3 61 L510 57.5 L516 57.5 L516 71.5 L511.5 75.2 L506.3 75.2Z" fill="#e2e2e2" stroke="#7a7a7a" stroke-width="0.6"/><path d="M511.5 61 L516 57.5 L516 71.5 L511.5 75.2Z" fill="#3cb55a"/><path d="M518.5 61 L524.3 56.5 L524.3 70.5 L518.5 75Z" fill="#e08e58"/><rect x="553" y="67.5" width="17.2" height="3.6" fill="#f1a31c"/><path d="M553.5 62V66M569.7 62V66M554 64H569" stroke="#333" stroke-width="0.7"/><path d="M554 64L556 63V65Z M569 64L567 63V65Z" fill="#333"/><rect x="581" y="58" width="13.5" height="16" fill="#fff" stroke="#888" stroke-width="0.6"/><rect x="580.5" y="58" width="6.8" height="16" fill="#8cc4f0"/><path d="M581 66H594.5M587.3 58V74" stroke="#888" stroke-width="0.6"/><path d="M580.5 57.5H578.7V75H580.5M587 57.5V75" stroke="#5aa7e6" stroke-width="1" fill="none"/><rect x="616.1" y="57.4" width="17.5" height="17.2" fill="#5aa8e4"/><path d="M616.1 74.6 V69 L620.5 65 L625 69.5 L628 67.5 L633.6 71.5 V74.6Z" fill="#2c7cc1"/><circle cx="629" cy="61.8" r="1.7" fill="#f7f0b0"/><rect x="657.8" y="55" width="22.5" height="22.6" fill="#1a8fd8"/><rect x="660.2" y="57.5" width="15.8" height="12.8" fill="none" stroke="#8fd27a" stroke-width="0.9" stroke-dasharray="1.8 1.3"/><path d="M671.8 65.5 L671.8 75 L674 72.8 L675.8 76.2 L677.2 75.5 L675.5 72.2 L678.5 72Z" fill="#fff"/></svg><div class="a" style="left:2.1px;top:93.4px;width:177.6px;height:14.2px;background:#efefef;box-shadow:0 0.6px 1px rgba(0,0,0,0.18)"></div><svg class="a" style="left:5px;top:98.8px" width="7" height="5"><path d="M0.3 2.2 L3 0.3 V4.1Z M3.2 2.2 L6 0.3 V4.1Z" fill="#222"/></svg><div id="browser" style="position:absolute;left:17.10px;top:98.11px;font-size:6.84px;line-height:6.84px;color:#707070;font-weight:normal;white-space:nowrap;transform-origin:0 0;transform:scaleX(0.8810);">BROWSER</div><svg class="a" style="left:166px;top:96.5px" width="14" height="9"><circle cx="4.3" cy="4.2" r="2.7" fill="#222"/><rect x="2.8" y="3.7" width="3" height="1" fill="#888"/><rect x="11" y="1.5" width="1.2" height="6" fill="#aaa"/></svg><div class="a" style="left:23.8px;top:111.4px;width:129.5px;height:11.8px;background:#ebebeb"></div><svg class="a" style="left:13px;top:114.6px" width="6" height="5"><path d="M0.3 4.7 L5 0.3 L5 4.7Z" fill="#333"/></svg><svg class="a" style="left:25.4px;top:113.8px" width="11" height="7"><path d="M0.3 3.5 C3 -0.6 7 -0.6 9.7 3.5 C7 7.6 3 7.6 0.3 3.5Z" fill="#8a8a8a"/><ellipse cx="5" cy="3.5" rx="2.4" ry="1.9" fill="#e8e8e8"/><circle cx="5" cy="3.5" r="1.25" fill="#8a8a8a"/></svg><div class="a" style="left:38.6px;top:112.7px;width:100.4px;height:9px;background:#8f8f8f"></div><svg class="a" style="left:40.0px;top:112.5px" width="10" height="10"><path d="M0.8 1.5 L2 0.5 L4.6 0.5 L4.6 9.5 L0.8 9.5Z" fill="#c9d0dc" stroke="#7d8796" stroke-width="0.5"/><path d="M4.6 5 L6 4 L9 4 L9 9.5 L4.6 9.5Z" fill="#b9c1ce" stroke="#7d8796" stroke-width="0.5"/></svg><div id="root" style="position:absolute;left:58.20px;top:114.36px;font-size:6.42px;line-height:6.42px;color:#fff;font-weight:bold;white-space:nowrap;transform-origin:0 0;transform:scaleX(1.0830);">VORONOI LAMPv4 v11</div><svg class="a" style="left:141px;top:113px" width="9" height="9"><circle cx="4.5" cy="4.5" r="3.6" fill="#f4f4f4" stroke="#999" stroke-width="0.7"/><circle cx="4.5" cy="4.5" r="1.7" fill="#444"/></svg><div class="a" style="left:34.8px;top:125.80px;width:83.4px;height:11.2px;background:rgba(236,236,236,0.92)"></div><svg class="a" style="left:23.9px;top:128.8px" width="5" height="6"><path d="M0.5 0.5 L4.2 2.7 L0.5 4.9Z" fill="none" stroke="#555" stroke-width="0.8"/></svg><svg class="a" style="left:36.1px;top:126.8px" width="10" height="10"><rect x="4.2" y="-0.2" width="1.6" height="2.4" fill="#8c8c8c" transform="rotate(0 5 4.6)"/><rect x="4.2" y="-0.2" width="1.6" height="2.4" fill="#8c8c8c" transform="rotate(45 5 4.6)"/><rect x="4.2" y="-0.2" width="1.6" height="2.4" fill="#8c8c8c" transform="rotate(90 5 4.6)"/><rect x="4.2" y="-0.2" width="1.6" height="2.4" fill="#8c8c8c" transform="rotate(135 5 4.6)"/><rect x="4.2" y="-0.2" width="1.6" height="2.4" fill="#8c8c8c" transform="rotate(180 5 4.6)"/><rect x="4.2" y="-0.2" width="1.6" height="2.4" fill="#8c8c8c" transform="rotate(225 5 4.6)"/><rect x="4.2" y="-0.2" width="1.6" height="2.4" fill="#8c8c8c" transform="rotate(270 5 4.6)"/><rect x="4.2" y="-0.2" width="1.6" height="2.4" fill="#8c8c8c" transform="rotate(315 5 4.6)"/><circle cx="5" cy="4.6" r="3.4" fill="#8c8c8c"/><circle cx="5" cy="4.6" r="1.4" fill="#ececec"/></svg><div id="row0" style="position:absolute;left:54.10px;top:128.09px;font-size:6.98px;line-height:6.98px;color:#353535;font-weight:normal;white-space:nowrap;transform-origin:0 0;transform:scaleX(1.0155);-webkit-text-stroke:0.15px currentColor;">Document Settings</div><div class="a" style="left:34.8px;top:140.02px;width:66.8px;height:11.2px;background:rgba(236,236,236,0.92)"></div><svg class="a" style="left:23.9px;top:143.0px" width="5" height="6"><path d="M0.5 0.5 L4.2 2.7 L0.5 4.9Z" fill="none" stroke="#555" stroke-width="0.8"/></svg><svg class="a" style="left:36.1px;top:141.6px" width="10" height="8"><path d="M0 0.3H3.8L4.8 1.5H9.6V7.8H0Z" fill="#8c8c8c"/><rect x="0" y="2.3" width="9.6" height="0.5" fill="#a8a8a8"/></svg><div id="row1" style="position:absolute;left:54.10px;top:142.31px;font-size:6.98px;line-height:6.98px;color:#353535;font-weight:normal;white-space:nowrap;transform-origin:0 0;transform:scaleX(0.9796);-webkit-text-stroke:0.15px currentColor;">Named Views</div><div class="a" style="left:34.8px;top:154.24px;width:58.0px;height:11.2px;background:rgba(236,236,236,0.92)"></div><svg class="a" style="left:23.9px;top:157.2px" width="5" height="6"><path d="M0.5 0.5 L4.2 2.7 L0.5 4.9Z" fill="none" stroke="#555" stroke-width="0.8"/></svg><svg class="a" style="left:35.8px;top:156.3px" width="11" height="7"><path d="M0.5 3.5 C3 -0.3 7 -0.3 9.5 3.5 C7 7.3 3 7.3 0.5 3.5Z" fill="none" stroke="#b8b8b8" stroke-width="0.9"/><circle cx="5" cy="3.5" r="1.8" fill="none" stroke="#b8b8b8" stroke-width="0.8"/><path d="M2.5 0.5 C5 2 5 5 7.5 6.5" stroke="#b8b8b8" stroke-width="0.7" fill="none"/></svg><svg class="a" style="left:50.8px;top:155.8px" width="10" height="8"><path d="M0 0.3H3.8L4.8 1.5H9.6V7.8H0Z" fill="#8c8c8c"/><rect x="0" y="2.3" width="9.6" height="0.5" fill="#a8a8a8"/></svg><div id="row2" style="position:absolute;left:68.75px;top:156.53px;font-size:6.98px;line-height:6.98px;color:#353535;font-weight:normal;white-space:nowrap;transform-origin:0 0;transform:scaleX(1.0545);-webkit-text-stroke:0.15px currentColor;">Origin</div><div class="a" style="left:34.8px;top:168.46px;width:58.0px;height:11.2px;background:rgba(236,236,236,0.92)"></div><svg class="a" style="left:23.9px;top:171.5px" width="5" height="6"><path d="M0.5 0.5 L4.2 2.7 L0.5 4.9Z" fill="none" stroke="#555" stroke-width="0.8"/></svg><svg class="a" style="left:35.8px;top:170.6px" width="11" height="7"><path d="M0.5 3.5 C3 -0.3 7 -0.3 9.5 3.5 C7 7.3 3 7.3 0.5 3.5Z" fill="none" stroke="#b8b8b8" stroke-width="0.9"/><circle cx="5" cy="3.5" r="1.8" fill="none" stroke="#b8b8b8" stroke-width="0.8"/><path d="M2.5 0.5 C5 2 5 5 7.5 6.5" stroke="#b8b8b8" stroke-width="0.7" fill="none"/></svg><svg class="a" style="left:50.8px;top:170.1px" width="10" height="8"><path d="M0 0.3H3.8L4.8 1.5H9.6V7.8H0Z" fill="#8c8c8c"/><rect x="0" y="2.3" width="9.6" height="0.5" fill="#a8a8a8"/></svg><div id="row3" style="position:absolute;left:68.75px;top:170.75px;font-size:6.98px;line-height:6.98px;color:#353535;font-weight:normal;white-space:nowrap;transform-origin:0 0;transform:scaleX(0.9665);-webkit-text-stroke:0.15px currentColor;">Joints</div><div class="a" style="left:34.8px;top:182.68px;width:66.8px;height:11.2px;background:rgba(236,236,236,0.92)"></div><svg class="a" style="left:23.9px;top:185.7px" width="5" height="6"><path d="M0.5 0.5 L4.2 2.7 L0.5 4.9Z" fill="none" stroke="#555" stroke-width="0.8"/></svg><svg class="a" style="left:35.8px;top:184.8px" width="11" height="7"><path d="M0.3 3.5 C3 -0.6 7 -0.6 9.7 3.5 C7 7.6 3 7.6 0.3 3.5Z" fill="#8a8a8a"/><ellipse cx="5" cy="3.5" rx="2.4" ry="1.9" fill="#e8e8e8"/><circle cx="5" cy="3.5" r="1.25" fill="#8a8a8a"/></svg><svg class="a" style="left:50.8px;top:184.3px" width="10" height="8"><path d="M0 0.3H3.8L4.8 1.5H9.6V7.8H0Z" fill="#8c8c8c"/><rect x="0" y="2.3" width="9.6" height="0.5" fill="#a8a8a8"/></svg><div id="row4" style="position:absolute;left:68.75px;top:184.97px;font-size:6.98px;line-height:6.98px;color:#353535;font-weight:normal;white-space:nowrap;transform-origin:0 0;transform:scaleX(0.9561);-webkit-text-stroke:0.15px currentColor;">Sketches</div><div class="a" style="left:34.8px;top:196.90px;width:62.9px;height:11.2px;background:rgba(236,236,236,0.92)"></div><svg class="a" style="left:23.9px;top:199.9px" width="5" height="6"><path d="M0.5 0.5 L4.2 2.7 L0.5 4.9Z" fill="none" stroke="#555" stroke-width="0.8"/></svg><svg class="a" style="left:35.8px;top:199.0px" width="11" height="7"><path d="M0.3 3.5 C3 -0.6 7 -0.6 9.7 3.5 C7 7.6 3 7.6 0.3 3.5Z" fill="#8a8a8a"/><ellipse cx="5" cy="3.5" rx="2.4" ry="1.9" fill="#e8e8e8"/><circle cx="5" cy="3.5" r="1.25" fill="#8a8a8a"/></svg><svg class="a" style="left:50.8px;top:197.7px" width="10" height="10"><path d="M0.8 1.5 L2 0.5 L4.6 0.5 L4.6 9.5 L0.8 9.5Z" fill="#c9d0dc" stroke="#7d8796" stroke-width="0.5"/><path d="M4.6 5 L6 4 L9 4 L9 9.5 L4.6 9.5Z" fill="#b9c1ce" stroke="#7d8796" stroke-width="0.5"/></svg><div id="row5" style="position:absolute;left:68.75px;top:199.19px;font-size:6.98px;line-height:6.98px;color:#353535;font-weight:normal;white-space:nowrap;transform-origin:0 0;transform:scaleX(0.9325);-webkit-text-stroke:0.15px currentColor;">NODE:1</div><div class="a" style="left:34.8px;top:211.12px;width:91.2px;height:11.2px;background:rgba(236,236,236,0.92)"></div><svg class="a" style="left:23.9px;top:214.1px" width="5" height="6"><path d="M0.5 0.5 L4.2 2.7 L0.5 4.9Z" fill="none" stroke="#555" stroke-width="0.8"/></svg><svg class="a" style="left:35.8px;top:213.2px" width="11" height="7"><path d="M0.3 3.5 C3 -0.6 7 -0.6 9.7 3.5 C7 7.6 3 7.6 0.3 3.5Z" fill="#8a8a8a"/><ellipse cx="5" cy="3.5" rx="2.4" ry="1.9" fill="#e8e8e8"/><circle cx="5" cy="3.5" r="1.25" fill="#8a8a8a"/></svg><svg class="a" style="left:50.8px;top:211.9px" width="10" height="10"><path d="M1 2.2 L2.8 0.5 L8.8 0.5 L8.8 7.8 L7 9.5 L1 9.5Z" fill="#c3cad6" stroke="#7d8796" stroke-width="0.5"/><path d="M7 2.2 L8.8 0.5 L8.8 7.8 L7 9.5Z" fill="#a9b2c0"/><path d="M1 2.2 L2.8 0.5 L8.8 0.5 L7 2.2Z" fill="#dfe3ea"/></svg><div id="row6" style="position:absolute;left:68.75px;top:213.41px;font-size:6.98px;line-height:6.98px;color:#353535;font-weight:normal;white-space:nowrap;transform-origin:0 0;transform:scaleX(0.8853);-webkit-text-stroke:0.15px currentColor;">LARGE DOWEL:1</div><div class="a" style="left:34.8px;top:225.34px;width:62.9px;height:11.2px;background:rgba(236,236,236,0.92)"></div><svg class="a" style="left:23.9px;top:228.3px" width="5" height="6"><path d="M0.5 0.5 L4.2 2.7 L0.5 4.9Z" fill="none" stroke="#555" stroke-width="0.8"/></svg><svg class="a" style="left:35.8px;top:227.4px" width="11" height="7"><path d="M0.3 3.5 C3 -0.6 7 -0.6 9.7 3.5 C7 7.6 3 7.6 0.3 3.5Z" fill="#8a8a8a"/><ellipse cx="5" cy="3.5" rx="2.4" ry="1.9" fill="#e8e8e8"/><circle cx="5" cy="3.5" r="1.25" fill="#8a8a8a"/></svg><svg class="a" style="left:50.8px;top:226.1px" width="10" height="10"><path d="M0.8 1.5 L2 0.5 L4.6 0.5 L4.6 9.5 L0.8 9.5Z" fill="#c9d0dc" stroke="#7d8796" stroke-width="0.5"/><path d="M4.6 5 L6 4 L9 4 L9 9.5 L4.6 9.5Z" fill="#b9c1ce" stroke="#7d8796" stroke-width="0.5"/></svg><div id="row7" style="position:absolute;left:68.75px;top:227.63px;font-size:6.98px;line-height:6.98px;color:#353535;font-weight:normal;white-space:nowrap;transform-origin:0 0;transform:scaleX(0.9325);-webkit-text-stroke:0.15px currentColor;">NODE:3</div><div class="a" style="left:34.8px;top:239.56px;width:91.2px;height:11.2px;background:rgba(236,236,236,0.92)"></div><svg class="a" style="left:23.9px;top:242.6px" width="5" height="6"><path d="M0.5 0.5 L4.2 2.7 L0.5 4.9Z" fill="none" stroke="#555" stroke-width="0.8"/></svg><svg class="a" style="left:35.8px;top:241.7px" width="11" height="7"><path d="M0.3 3.5 C3 -0.6 7 -0.6 9.7 3.5 C7 7.6 3 7.6 0.3 3.5Z" fill="#8a8a8a"/><ellipse cx="5" cy="3.5" rx="2.4" ry="1.9" fill="#e8e8e8"/><circle cx="5" cy="3.5" r="1.25" fill="#8a8a8a"/></svg><svg class="a" style="left:50.8px;top:240.4px" width="10" height="10"><path d="M1 2.2 L2.8 0.5 L8.8 0.5 L8.8 7.8 L7 9.5 L1 9.5Z" fill="#c3cad6" stroke="#7d8796" stroke-width="0.5"/><path d="M7 2.2 L8.8 0.5 L8.8 7.8 L7 9.5Z" fill="#a9b2c0"/><path d="M1 2.2 L2.8 0.5 L8.8 0.5 L7 2.2Z" fill="#dfe3ea"/></svg><div id="row8" style="position:absolute;left:68.75px;top:241.85px;font-size:6.98px;line-height:6.98px;color:#353535;font-weight:normal;white-space:nowrap;transform-origin:0 0;transform:scaleX(0.8853);-webkit-text-stroke:0.15px currentColor;">LARGE DOWEL:2</div><div class="a" style="left:34.8px;top:253.78px;width:62.9px;height:11.2px;background:rgba(236,236,236,0.92)"></div><svg class="a" style="left:23.9px;top:256.8px" width="5" height="6"><path d="M0.5 0.5 L4.2 2.7 L0.5 4.9Z" fill="none" stroke="#555" stroke-width="0.8"/></svg><svg class="a" style="left:35.8px;top:255.9px" width="11" height="7"><path d="M0.3 3.5 C3 -0.6 7 -0.6 9.7 3.5 C7 7.6 3 7.6 0.3 3.5Z" fill="#8a8a8a"/><ellipse cx="5" cy="3.5" rx="2.4" ry="1.9" fill="#e8e8e8"/><circle cx="5" cy="3.5" r="1.25" fill="#8a8a8a"/></svg><svg class="a" style="left:50.8px;top:254.6px" width="10" height="10"><path d="M0.8 1.5 L2 0.5 L4.6 0.5 L4.6 9.5 L0.8 9.5Z" fill="#c9d0dc" stroke="#7d8796" stroke-width="0.5"/><path d="M4.6 5 L6 4 L9 4 L9 9.5 L4.6 9.5Z" fill="#b9c1ce" stroke="#7d8796" stroke-width="0.5"/></svg><div id="row9" style="position:absolute;left:68.75px;top:256.07px;font-size:6.98px;line-height:6.98px;color:#353535;font-weight:normal;white-space:nowrap;transform-origin:0 0;transform:scaleX(0.9325);-webkit-text-stroke:0.15px currentColor;">NODE:4</div><div class="a" style="left:34.8px;top:268.00px;width:91.2px;height:11.2px;background:rgba(236,236,236,0.92)"></div><svg class="a" style="left:23.9px;top:271.0px" width="5" height="6"><path d="M0.5 0.5 L4.2 2.7 L0.5 4.9Z" fill="none" stroke="#555" stroke-width="0.8"/></svg><svg class="a" style="left:35.8px;top:270.1px" width="11" height="7"><path d="M0.3 3.5 C3 -0.6 7 -0.6 9.7 3.5 C7 7.6 3 7.6 0.3 3.5Z" fill="#8a8a8a"/><ellipse cx="5" cy="3.5" rx="2.4" ry="1.9" fill="#e8e8e8"/><circle cx="5" cy="3.5" r="1.25" fill="#8a8a8a"/></svg><svg class="a" style="left:50.8px;top:268.8px" width="10" height="10"><path d="M1 2.2 L2.8 0.5 L8.8 0.5 L8.8 7.8 L7 9.5 L1 9.5Z" fill="#c3cad6" stroke="#7d8796" stroke-width="0.5"/><path d="M7 2.2 L8.8 0.5 L8.8 7.8 L7 9.5Z" fill="#a9b2c0"/><path d="M1 2.2 L2.8 0.5 L8.8 0.5 L7 2.2Z" fill="#dfe3ea"/></svg><div id="row10" style="position:absolute;left:68.75px;top:270.29px;font-size:6.98px;line-height:6.98px;color:#353535;font-weight:normal;white-space:nowrap;transform-origin:0 0;transform:scaleX(0.8853);-webkit-text-stroke:0.15px currentColor;">LARGE DOWEL:3</div><div class="a" style="left:34.8px;top:282.22px;width:62.9px;height:11.2px;background:rgba(236,236,236,0.92)"></div><svg class="a" style="left:23.9px;top:285.2px" width="5" height="6"><path d="M0.5 0.5 L4.2 2.7 L0.5 4.9Z" fill="none" stroke="#555" stroke-width="0.8"/></svg><svg class="a" style="left:35.8px;top:284.3px" width="11" height="7"><path d="M0.3 3.5 C3 -0.6 7 -0.6 9.7 3.5 C7 7.6 3 7.6 0.3 3.5Z" fill="#8a8a8a"/><ellipse cx="5" cy="3.5" rx="2.4" ry="1.9" fill="#e8e8e8"/><circle cx="5" cy="3.5" r="1.25" fill="#8a8a8a"/></svg><svg class="a" style="left:50.8px;top:283.0px" width="10" height="10"><path d="M0.8 1.5 L2 0.5 L4.6 0.5 L4.6 9.5 L0.8 9.5Z" fill="#c9d0dc" stroke="#7d8796" stroke-width="0.5"/><path d="M4.6 5 L6 4 L9 4 L9 9.5 L4.6 9.5Z" fill="#b9c1ce" stroke="#7d8796" stroke-width="0.5"/></svg><div id="row11" style="position:absolute;left:68.75px;top:284.51px;font-size:6.98px;line-height:6.98px;color:#353535;font-weight:normal;white-space:nowrap;transform-origin:0 0;transform:scaleX(0.9325);-webkit-text-stroke:0.15px currentColor;">NODE:5</div><div class="a" style="left:34.8px;top:296.44px;width:66.8px;height:11.2px;background:rgba(236,236,236,0.92)"></div><svg class="a" style="left:23.9px;top:299.4px" width="5" height="6"><path d="M0.5 0.5 L4.2 2.7 L0.5 4.9Z" fill="none" stroke="#555" stroke-width="0.8"/></svg><svg class="a" style="left:35.8px;top:298.5px" width="11" height="7"><path d="M0.3 3.5 C3 -0.6 7 -0.6 9.7 3.5 C7 7.6 3 7.6 0.3 3.5Z" fill="#8a8a8a"/><ellipse cx="5" cy="3.5" rx="2.4" ry="1.9" fill="#e8e8e8"/><circle cx="5" cy="3.5" r="1.25" fill="#8a8a8a"/></svg><svg class="a" style="left:50.8px;top:297.2px" width="10" height="10"><path d="M1 2.2 L2.8 0.5 L8.8 0.5 L8.8 7.8 L7 9.5 L1 9.5Z" fill="#c3cad6" stroke="#7d8796" stroke-width="0.5"/><path d="M7 2.2 L8.8 0.5 L8.8 7.8 L7 9.5Z" fill="#a9b2c0"/><path d="M1 2.2 L2.8 0.5 L8.8 0.5 L7 2.2Z" fill="#dfe3ea"/></svg><div id="row12" style="position:absolute;left:68.75px;top:298.73px;font-size:6.98px;line-height:6.98px;color:#353535;font-weight:normal;white-space:nowrap;transform-origin:0 0;transform:scaleX(0.8861);-webkit-text-stroke:0.15px currentColor;">DOWEL:1</div><div class="a" style="left:34.8px;top:310.66px;width:66.8px;height:11.2px;background:rgba(236,236,236,0.92)"></div><svg class="a" style="left:23.9px;top:313.7px" width="5" height="6"><path d="M0.5 0.5 L4.2 2.7 L0.5 4.9Z" fill="none" stroke="#555" stroke-width="0.8"/></svg><svg class="a" style="left:35.8px;top:312.8px" width="11" height="7"><path d="M0.3 3.5 C3 -0.6 7 -0.6 9.7 3.5 C7 7.6 3 7.6 0.3 3.5Z" fill="#8a8a8a"/><ellipse cx="5" cy="3.5" rx="2.4" ry="1.9" fill="#e8e8e8"/><circle cx="5" cy="3.5" r="1.25" fill="#8a8a8a"/></svg><svg class="a" style="left:50.8px;top:311.5px" width="10" height="10"><path d="M1 2.2 L2.8 0.5 L8.8 0.5 L8.8 7.8 L7 9.5 L1 9.5Z" fill="#c3cad6" stroke="#7d8796" stroke-width="0.5"/><path d="M7 2.2 L8.8 0.5 L8.8 7.8 L7 9.5Z" fill="#a9b2c0"/><path d="M1 2.2 L2.8 0.5 L8.8 0.5 L7 2.2Z" fill="#dfe3ea"/></svg><div id="row13" style="position:absolute;left:68.75px;top:312.95px;font-size:6.98px;line-height:6.98px;color:#353535;font-weight:normal;white-space:nowrap;transform-origin:0 0;transform:scaleX(0.8861);-webkit-text-stroke:0.15px currentColor;">DOWEL:3</div><div class="a" style="left:34.8px;top:324.88px;width:74.6px;height:11.2px;background:rgba(236,236,236,0.92)"></div><svg class="a" style="left:23.9px;top:327.9px" width="5" height="6"><path d="M0.5 0.5 L4.2 2.7 L0.5 4.9Z" fill="none" stroke="#555" stroke-width="0.8"/></svg><svg class="a" style="left:35.8px;top:327.0px" width="11" height="7"><path d="M0.3 3.5 C3 -0.6 7 -0.6 9.7 3.5 C7 7.6 3 7.6 0.3 3.5Z" fill="#8a8a8a"/><ellipse cx="5" cy="3.5" rx="2.4" ry="1.9" fill="#e8e8e8"/><circle cx="5" cy="3.5" r="1.25" fill="#8a8a8a"/></svg><svg class="a" style="left:50.8px;top:325.7px" width="10" height="10"><path d="M1 2.2 L2.8 0.5 L8.8 0.5 L8.8 7.8 L7 9.5 L1 9.5Z" fill="#c3cad6" stroke="#7d8796" stroke-width="0.5"/><path d="M7 2.2 L8.8 0.5 L8.8 7.8 L7 9.5Z" fill="#a9b2c0"/><path d="M1 2.2 L2.8 0.5 L8.8 0.5 L7 2.2Z" fill="#dfe3ea"/></svg><div id="row14" style="position:absolute;left:68.75px;top:327.17px;font-size:6.98px;line-height:6.98px;color:#353535;font-weight:normal;white-space:nowrap;transform-origin:0 0;transform:scaleX(0.9372);-webkit-text-stroke:0.15px currentColor;">DOWEL 1:1</div><div class="a" style="left:34.8px;top:339.10px;width:74.6px;height:11.2px;background:rgba(236,236,236,0.92)"></div><svg class="a" style="left:23.9px;top:342.1px" width="5" height="6"><path d="M0.5 0.5 L4.2 2.7 L0.5 4.9Z" fill="none" stroke="#555" stroke-width="0.8"/></svg><svg class="a" style="left:35.8px;top:341.2px" width="11" height="7"><path d="M0.3 3.5 C3 -0.6 7 -0.6 9.7 3.5 C7 7.6 3 7.6 0.3 3.5Z" fill="#8a8a8a"/><ellipse cx="5" cy="3.5" rx="2.4" ry="1.9" fill="#e8e8e8"/><circle cx="5" cy="3.5" r="1.25" fill="#8a8a8a"/></svg><svg class="a" style="left:50.8px;top:339.9px" width="10" height="10"><path d="M1 2.2 L2.8 0.5 L8.8 0.5 L8.8 7.8 L7 9.5 L1 9.5Z" fill="#c3cad6" stroke="#7d8796" stroke-width="0.5"/><path d="M7 2.2 L8.8 0.5 L8.8 7.8 L7 9.5Z" fill="#a9b2c0"/><path d="M1 2.2 L2.8 0.5 L8.8 0.5 L7 2.2Z" fill="#dfe3ea"/></svg><div id="row15" style="position:absolute;left:68.75px;top:341.39px;font-size:6.98px;line-height:6.98px;color:#353535;font-weight:normal;white-space:nowrap;transform-origin:0 0;transform:scaleX(0.9372);-webkit-text-stroke:0.15px currentColor;">DOWEL 2:1</div><div class="a" style="left:34.8px;top:353.32px;width:74.6px;height:11.2px;background:rgba(236,236,236,0.92)"></div><svg class="a" style="left:23.9px;top:356.3px" width="5" height="6"><path d="M0.5 0.5 L4.2 2.7 L0.5 4.9Z" fill="none" stroke="#555" stroke-width="0.8"/></svg><svg class="a" style="left:35.8px;top:355.4px" width="11" height="7"><path d="M0.3 3.5 C3 -0.6 7 -0.6 9.7 3.5 C7 7.6 3 7.6 0.3 3.5Z" fill="#8a8a8a"/><ellipse cx="5" cy="3.5" rx="2.4" ry="1.9" fill="#e8e8e8"/><circle cx="5" cy="3.5" r="1.25" fill="#8a8a8a"/></svg><svg class="a" style="left:50.8px;top:354.1px" width="10" height="10"><path d="M1 2.2 L2.8 0.5 L8.8 0.5 L8.8 7.8 L7 9.5 L1 9.5Z" fill="#c3cad6" stroke="#7d8796" stroke-width="0.5"/><path d="M7 2.2 L8.8 0.5 L8.8 7.8 L7 9.5Z" fill="#a9b2c0"/><path d="M1 2.2 L2.8 0.5 L8.8 0.5 L7 2.2Z" fill="#dfe3ea"/></svg><div id="row16" style="position:absolute;left:68.75px;top:355.61px;font-size:6.98px;line-height:6.98px;color:#353535;font-weight:normal;white-space:nowrap;transform-origin:0 0;transform:scaleX(0.9372);-webkit-text-stroke:0.15px currentColor;">DOWEL 2:3</div><div class="a" style="left:34.8px;top:367.54px;width:66.8px;height:11.2px;background:rgba(236,236,236,0.92)"></div><svg class="a" style="left:23.9px;top:370.5px" width="5" height="6"><path d="M0.5 0.5 L4.2 2.7 L0.5 4.9Z" fill="none" stroke="#555" stroke-width="0.8"/></svg><svg class="a" style="left:35.8px;top:369.6px" width="11" height="7"><path d="M0.3 3.5 C3 -0.6 7 -0.6 9.7 3.5 C7 7.6 3 7.6 0.3 3.5Z" fill="#8a8a8a"/><ellipse cx="5" cy="3.5" rx="2.4" ry="1.9" fill="#e8e8e8"/><circle cx="5" cy="3.5" r="1.25" fill="#8a8a8a"/></svg><svg class="a" style="left:50.8px;top:368.3px" width="10" height="10"><path d="M1 2.2 L2.8 0.5 L8.8 0.5 L8.8 7.8 L7 9.5 L1 9.5Z" fill="#c3cad6" stroke="#7d8796" stroke-width="0.5"/><path d="M7 2.2 L8.8 0.5 L8.8 7.8 L7 9.5Z" fill="#a9b2c0"/><path d="M1 2.2 L2.8 0.5 L8.8 0.5 L7 2.2Z" fill="#dfe3ea"/></svg><div id="row17" style="position:absolute;left:68.75px;top:369.83px;font-size:6.98px;line-height:6.98px;color:#353535;font-weight:normal;white-space:nowrap;transform-origin:0 0;transform:scaleX(0.8861);-webkit-text-stroke:0.15px currentColor;">DOWEL:4</div><div class="a" style="left:2.3px;top:645.2px;width:177.4px;height:13.7px;background:#efefef;box-shadow:0 0.5px 1px rgba(0,0,0,0.15)"></div><div id="comments" style="position:absolute;left:17.20px;top:648.89px;font-size:6.98px;line-height:6.98px;color:#666;font-weight:normal;white-space:nowrap;transform-origin:0 0;transform:scaleX(0.9111);">COMMENTS</div><svg class="a" style="left:166px;top:648px" width="14" height="9"><circle cx="4.3" cy="4.4" r="2.8" fill="#333"/><path d="M4.3 2.8V6M2.7 4.4H5.9" stroke="#eee" stroke-width="0.8"/><rect x="11" y="1.5" width="1.2" height="6" fill="#aaa"/></svg><div class="a" style="left:442.5px;top:643.5px;width:139.5px;height:14.1px;background:rgba(236,236,236,0.95)"></div><svg class="a" style="left:0;top:636px" width="1024" height="26" viewBox="0 636 1024 26"><path d="M448.7 646.5V655.5M444.2 651H453.2" stroke="#707070" stroke-width="1"/><ellipse cx="448.7" cy="651" rx="3.2" ry="1.6" fill="none" stroke="#707070" stroke-width="0.8"/><path d="M456.9 649.7 H459.7 L458.29999999999995 651.6Z" fill="#333"/><path d="M522.7 649.7 H525.5 L524.1 651.6Z" fill="#333"/><path d="M540.5 649.7 H543.3 L541.9 651.6Z" fill="#333"/><path d="M558.7 649.7 H561.5 L560.1 651.6Z" fill="#333"/><path d="M577.0 649.7 H579.8 L578.4 651.6Z" fill="#333"/><rect x="463.4" y="648.5" width="9.3" height="6.5" rx="0.8" fill="#9a9a9a"/><rect x="465" y="647.2" width="6" height="1.6" fill="#9a9a9a"/><path d="M481.2 655.6 L479.4 651.6 C479 650.6 480.2 650.2 480.8 651 L481.6 652 V647.6 C481.6 646.8 482.8 646.8 482.8 647.6 V650.6 V646.6 C482.8 645.8 484 645.8 484 646.6 V650.6 V647 C484 646.2 485.2 646.2 485.2 647 V650.8 V648 C485.2 647.2 486.4 647.2 486.4 648 V652.6 C486.4 654.2 485.6 655.6 484.4 655.6Z" fill="#fff" stroke="#707070" stroke-width="0.75"/><circle cx="497.5" cy="650" r="3.2" fill="#fff" stroke="#707070" stroke-width="1"/><path d="M499.8 652.4 L503.5 656" stroke="#333" stroke-width="1.6"/><path d="M502 646V648.4M500.8 647.2H503.2" stroke="#707070" stroke-width="0.6"/><circle cx="513" cy="650" r="3.2" fill="#fff" stroke="#707070" stroke-width="1"/><path d="M515.3 652.4 L519 656" stroke="#333" stroke-width="1.6"/><path d="M509.5 646.5V656H519.5" stroke="#999" stroke-width="0.5" stroke-dasharray="1 0.8" fill="none"/><rect x="529.3" y="646.5" width="9.5" height="7" fill="#6e9fd6" stroke="#555" stroke-width="0.6"/><rect x="532.5" y="653.5" width="3" height="1.5" fill="#666"/><rect x="531" y="655" width="6" height="0.8" fill="#666"/><defs><linearGradient id="vg" x1="0" y1="0" x2="0" y2="1"><stop offset="0" stop-color="#d8d8d8"/><stop offset="1" stop-color="#7a7a7a"/></linearGradient></defs><rect x="547.6" y="646.4" width="9.5" height="9.2" fill="url(#vg)" stroke="#666" stroke-width="0.5"/><rect x="566.2" y="646.8" width="8.8" height="8.4" fill="#5d8fd0" stroke="#3b5f95" stroke-width="0.5"/><path d="M570.6 646.8V655.2M566.2 651H575" stroke="#dfe8f5" stroke-width="0.8"/></svg><svg class="a" style="left:950px;top:95px" width="74" height="70" viewBox="950 95 74 70"><defs><radialGradient id="vsh" cx="0.5" cy="0.5" r="0.5"><stop offset="0" stop-color="#000" stop-opacity="0.22"/><stop offset="1" stop-color="#000" stop-opacity="0"/></radialGradient><linearGradient id="vff" x1="0" y1="0" x2="0" y2="1"><stop offset="0" stop-color="#f2f2f2"/><stop offset="1" stop-color="#e2e2e2"/></linearGradient></defs><ellipse cx="983" cy="151" rx="21" ry="6.5" fill="url(#vsh)"/><path d="M967.6 118.4 L975.5 111 Q976 110.6 977 110.6 L1003.2 110.6 L995.6 118.4Z" fill="#f3f3f3" stroke="#d6d6d6" stroke-width="0.6"/><path d="M995.6 118.4 L1003.5 110.6 L1003.5 142.5 L995.6 150.5Z" fill="#dcdcdc" stroke="#d0d0d0" stroke-width="0.6"/><rect x="967.2" y="118.4" width="28.4" height="32.1" rx="1.2" fill="url(#vff)" stroke="#d2d2d2" stroke-width="0.6"/><path d="M981 114.5 l-2.5 1.6 M983 114.5 l2.5 1.6" stroke="#bbb" stroke-width="0.7"/><text x="981.3" y="137.3" font-family="Liberation Sans, sans-serif" font-size="7.6" fill="#858585" text-anchor="middle" font-weight="bold" transform="translate(981.3 0) scale(0.86 1) translate(-981.3 0)">FRONT</text><path d="M997.5 130 l1.5 -1 v5 l-1.5 1z" fill="#999"/><path d="M1004.6 109.3 V138.6" stroke="#7575f0" stroke-width="1.1"/><text x="1005.2" y="108.4" font-family="Liberation Sans, sans-serif" font-size="8.6" fill="#6f6ff0" text-anchor="middle">Z</text><path d="M1003.8 138.8 L992 155" stroke="#86dd86" stroke-width="1.1"/><text x="991.2" y="159.6" font-family="Liberation Sans, sans-serif" font-size="7" fill="#7fd87f" text-anchor="middle">Y</text></svg></body></html>
